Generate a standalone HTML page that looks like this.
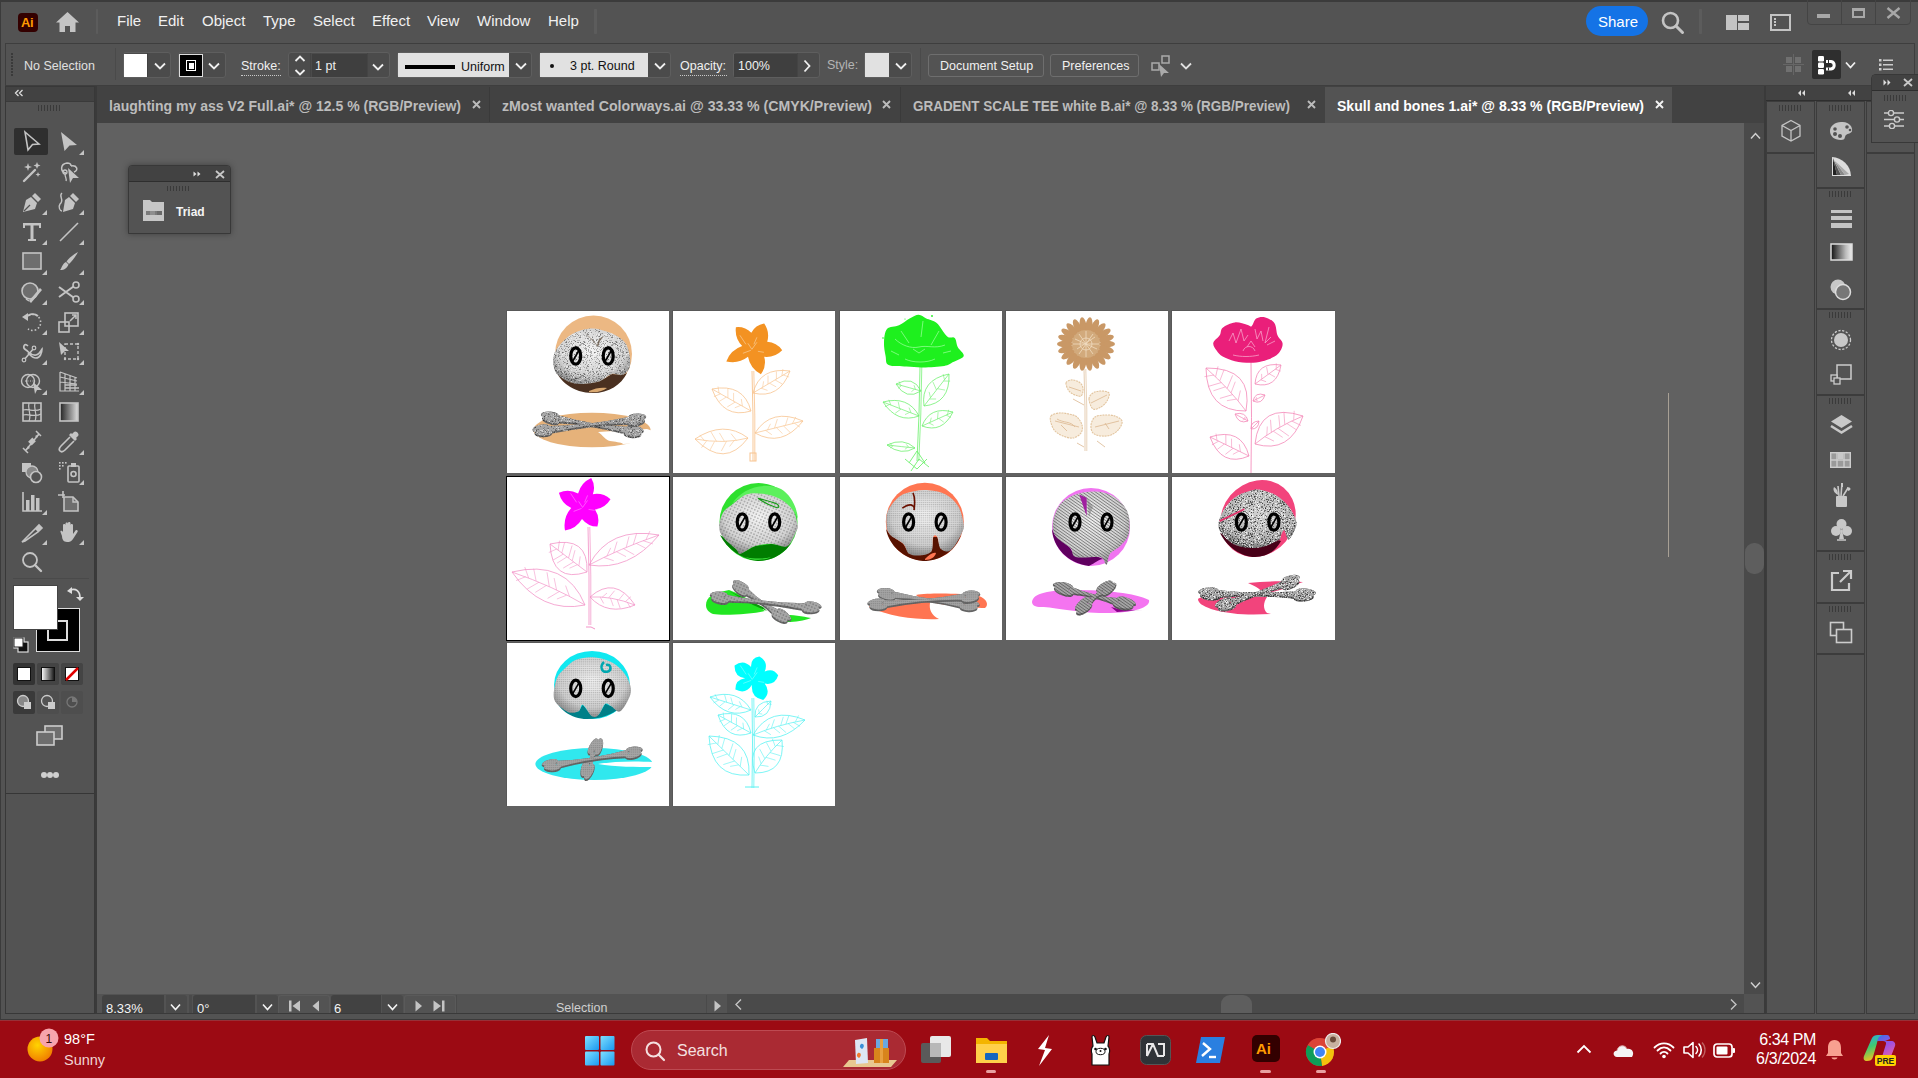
<!DOCTYPE html>
<html><head><meta charset="utf-8">
<style>
*{margin:0;padding:0;box-sizing:border-box}
html,body{width:1918px;height:1078px;overflow:hidden;background:#535353;font-family:"Liberation Sans",sans-serif;color:#e6e6e6;position:relative}
.a{position:absolute}
.t{position:absolute;white-space:nowrap;line-height:1}
.menu{position:absolute;top:12px;font-size:15px;color:#f0f0f0}
.ab{position:absolute;width:162px;height:162px;background:#fff;overflow:hidden}
</style></head><body>
<div class="a" style="left:0px;top:0px;width:1918px;height:2px;background:#3b3b3b;"></div>
<div class="a" style="left:0px;top:0px;width:1px;height:1078px;background:#3b3b3b;"></div>
<div class="a" style="left:18px;top:13px;width:20px;height:19px;background:#330000;border-radius:4px"></div>
<div class="t" style="left:21px;top:16px;font-size:13px;color:#ff9a00;font-weight:bold;letter-spacing:-0.5px">Ai</div>
<svg class="a" style="left:55px;top:11px" width="25" height="22" viewBox="0 0 25 22"><path d="M12.5 1 L24 11.5 L20.5 11.5 L20.5 21 L15 21 L15 15 L10 15 L10 21 L4.5 21 L4.5 11.5 L1 11.5 Z" fill="#c4c4c4"/></svg>
<div class="a" style="left:95.5px;top:9px;width:2.5px;height:25px;background:#5c5c5c;border-radius:1px"></div>
<div class="a" style="left:594px;top:9px;width:2.5px;height:25px;background:#5c5c5c;border-radius:1px"></div>
<div class="menu" style="left:117px">File</div>
<div class="menu" style="left:158px">Edit</div>
<div class="menu" style="left:202px">Object</div>
<div class="menu" style="left:263px">Type</div>
<div class="menu" style="left:313px">Select</div>
<div class="menu" style="left:372px">Effect</div>
<div class="menu" style="left:427px">View</div>
<div class="menu" style="left:477px">Window</div>
<div class="menu" style="left:548px">Help</div>
<div class="a" style="left:1586px;top:6px;width:62px;height:30px;background:#1473e6;border-radius:15px"></div>
<div class="t" style="left:1598px;top:14px;font-size:15px;color:#fff;">Share</div>
<svg class="a" style="left:1660px;top:10px" width="26" height="26" viewBox="0 0 26 26"><circle cx="10.5" cy="10.5" r="7.5" fill="none" stroke="#c4c4c4" stroke-width="2.6"/><path d="M16 16 L22.5 22.5" stroke="#c4c4c4" stroke-width="3" stroke-linecap="round"/></svg>
<div class="a" style="left:1699px;top:9px;width:2.5px;height:25px;background:#5c5c5c;border-radius:1px"></div>
<div class="a" style="left:1726px;top:15px;width:11px;height:15px;background:#c4c4c4;"></div>
<div class="a" style="left:1738px;top:15px;width:11px;height:6px;background:#c4c4c4;"></div>
<div class="a" style="left:1738px;top:23px;width:11px;height:7px;background:#c4c4c4;"></div>
<div class="a" style="left:1770px;top:14px;width:21px;height:17px;background:transparent;border:2px solid #c4c4c4"></div>
<div class="a" style="left:1774px;top:18px;width:2px;height:2px;background:#c4c4c4;"></div>
<div class="a" style="left:1774px;top:21px;width:2px;height:2px;background:#c4c4c4;"></div>
<div class="a" style="left:1774px;top:24px;width:2px;height:2px;background:#c4c4c4;"></div>
<div class="a" style="left:1807px;top:-2px;width:104px;height:27px;background:transparent;border:1px solid #444;border-radius:0 0 4px 4px"></div>
<div class="a" style="left:1841px;top:0px;width:1px;height:24px;background:#444;"></div>
<div class="a" style="left:1875px;top:0px;width:1px;height:24px;background:#444;"></div>
<div class="a" style="left:1817px;top:14px;width:13px;height:4px;background:#a8a8a8;"></div>
<div class="a" style="left:1852px;top:8px;width:13px;height:10px;background:transparent;border:2px solid #a8a8a8;border-top-width:3px"></div>
<svg class="a" style="left:1886px;top:7px" width="15" height="12" viewBox="0 0 15 12"><path d="M1.5 1 L13.5 11 M13.5 1 L1.5 11" stroke="#a8a8a8" stroke-width="2.4"/></svg>
<div class="a" style="left:5px;top:43px;width:1910px;height:1px;background:#3e3e3e;"></div>
<div class="a" style="left:5px;top:43px;width:1px;height:43px;background:#3e3e3e;"></div>
<div class="a" style="left:1914px;top:43px;width:1px;height:43px;background:#3e3e3e;"></div>
<div class="a" style="left:11px;top:53px;width:2px;height:2px;background:#3a3a3a;"></div>
<div class="a" style="left:11px;top:56px;width:2px;height:2px;background:#3a3a3a;"></div>
<div class="a" style="left:11px;top:59px;width:2px;height:2px;background:#3a3a3a;"></div>
<div class="a" style="left:11px;top:62px;width:2px;height:2px;background:#3a3a3a;"></div>
<div class="a" style="left:11px;top:65px;width:2px;height:2px;background:#3a3a3a;"></div>
<div class="a" style="left:11px;top:68px;width:2px;height:2px;background:#3a3a3a;"></div>
<div class="a" style="left:11px;top:71px;width:2px;height:2px;background:#3a3a3a;"></div>
<div class="a" style="left:11px;top:74px;width:2px;height:2px;background:#3a3a3a;"></div>
<div class="t" style="left:24px;top:60px;font-size:12.5px;color:#e0e0e0;">No Selection</div>
<div class="a" style="left:115px;top:48px;width:1px;height:32px;background:#4a4a4a;"></div>
<div class="a" style="left:123px;top:52px;width:48px;height:26px;background:#4b4b4b;border:1px solid #5e5e5e;border-radius:3px;"></div>
<div class="a" style="left:124px;top:54px;width:23px;height:23px;background:#ffffff;"></div>
<div class="a" style="left:147px;top:53px;width:1px;height:24px;background:#404040;"></div>
<svg class="a" style="left:154px;top:62px" width="12" height="8" viewBox="-1 -1.5 12 8"><path d="M0 0 L5.0 5 L10 0" fill="none" stroke="#f0f0f0" stroke-width="1.8"/></svg>
<div class="a" style="left:178px;top:52px;width:48px;height:26px;background:#4b4b4b;border:1px solid #5e5e5e;border-radius:3px;"></div>
<div class="a" style="left:179px;top:54px;width:24px;height:23px;background:#000;border:1px solid #ddd"></div>
<div class="a" style="left:186px;top:60px;width:10px;height:11px;background:transparent;border:1.5px solid #fff"></div>
<div class="a" style="left:188.5px;top:62.5px;width:5px;height:6px;background:#fff;"></div>
<svg class="a" style="left:208px;top:62px" width="12" height="8" viewBox="-1 -1.5 12 8"><path d="M0 0 L5.0 5 L10 0" fill="none" stroke="#f0f0f0" stroke-width="1.8"/></svg>
<div class="t" style="left:241px;top:60px;font-size:12.5px;color:#f0f0f0;">Stroke:</div>
<div class="a" style="left:241px;top:75px;width:40px;height:1px;background:transparent;border-top:1px dotted #c8c8c8"></div>
<div class="a" style="left:288px;top:52px;width:102px;height:26px;background:#4b4b4b;border:1px solid #5e5e5e;border-radius:3px;"></div>
<div class="a" style="left:310px;top:53px;width:1px;height:24px;background:#444;"></div>
<div class="a" style="left:312px;top:54px;width:55px;height:23px;background:#3f3f3f;"></div>
<div class="a" style="left:367px;top:53px;width:1px;height:24px;background:#444;"></div>
<svg class="a" style="left:294px;top:55px" width="12" height="22" viewBox="0 0 12 22"><path d="M1.5 6 L6 1.5 L10.5 6 M1.5 15 L6 19.5 L10.5 15" fill="none" stroke="#f0f0f0" stroke-width="1.8"/></svg>
<div class="t" style="left:315px;top:60px;font-size:12.5px;color:#f0f0f0;">1 pt</div>
<svg class="a" style="left:372px;top:63px" width="12" height="8" viewBox="-1 -1.5 12 8"><path d="M0 0 L5.0 5 L10 0" fill="none" stroke="#f0f0f0" stroke-width="1.8"/></svg>
<div class="a" style="left:397px;top:52px;width:135px;height:26px;background:#4b4b4b;border:1px solid #5e5e5e;border-radius:3px;"></div>
<div class="a" style="left:398px;top:53px;width:111px;height:24px;background:#e1e1e1;"></div>
<div class="a" style="left:405px;top:65px;width:50px;height:4px;background:#000;"></div>
<div class="t" style="left:461px;top:61px;font-size:12.5px;color:#111;">Uniform</div>
<svg class="a" style="left:515px;top:62px" width="12" height="8" viewBox="-1 -1.5 12 8"><path d="M0 0 L5.0 5 L10 0" fill="none" stroke="#f0f0f0" stroke-width="1.8"/></svg>
<div class="a" style="left:539px;top:52px;width:132px;height:26px;background:#4b4b4b;border:1px solid #5e5e5e;border-radius:3px;"></div>
<div class="a" style="left:540px;top:53px;width:108px;height:24px;background:#e1e1e1;"></div>
<div class="a" style="left:550px;top:64px;width:4px;height:4px;background:#111;border-radius:50%"></div>
<div class="t" style="left:570px;top:60px;font-size:12.5px;color:#111;">3 pt. Round</div>
<svg class="a" style="left:654px;top:62px" width="12" height="8" viewBox="-1 -1.5 12 8"><path d="M0 0 L5.0 5 L10 0" fill="none" stroke="#f0f0f0" stroke-width="1.8"/></svg>
<div class="t" style="left:680px;top:60px;font-size:12.5px;color:#f0f0f0;">Opacity:</div>
<div class="a" style="left:680px;top:75px;width:47px;height:1px;background:transparent;border-top:1px dotted #c8c8c8"></div>
<div class="a" style="left:733px;top:52px;width:87px;height:26px;background:#4b4b4b;border:1px solid #5e5e5e;border-radius:3px;"></div>
<div class="a" style="left:734px;top:54px;width:63px;height:23px;background:#3f3f3f;"></div>
<div class="a" style="left:797px;top:53px;width:1px;height:24px;background:#444;"></div>
<div class="t" style="left:738px;top:60px;font-size:12.5px;color:#f0f0f0;">100%</div>
<svg class="a" style="left:803px;top:59px" width="8" height="14" viewBox="0 0 8 14"><path d="M1.5 1.5 L6.5 7 L1.5 12.5" fill="none" stroke="#f0f0f0" stroke-width="1.8"/></svg>
<div class="t" style="left:827px;top:59px;font-size:12.5px;color:#b4b4b4;">Style:</div>
<div class="a" style="left:864px;top:52px;width:48px;height:26px;background:#4b4b4b;border:1px solid #5e5e5e;border-radius:3px;"></div>
<div class="a" style="left:865px;top:53px;width:24px;height:24px;background:#e1e1e1;"></div>
<svg class="a" style="left:895px;top:62px" width="12" height="8" viewBox="-1 -1.5 12 8"><path d="M0 0 L5.0 5 L10 0" fill="none" stroke="#f0f0f0" stroke-width="1.8"/></svg>
<div class="a" style="left:920px;top:48px;width:1px;height:32px;background:#4a4a4a;"></div>
<div class="a" style="left:928px;top:54px;width:116px;height:23px;background:transparent;border:1px solid #6e6e6e;border-radius:3px"></div>
<div class="t" style="left:940px;top:60px;font-size:12.5px;color:#f0f0f0;">Document Setup</div>
<div class="a" style="left:1050px;top:54px;width:89px;height:23px;background:transparent;border:1px solid #6e6e6e;border-radius:3px"></div>
<div class="t" style="left:1062px;top:60px;font-size:12.5px;color:#f0f0f0;">Preferences</div>
<svg class="a" style="left:1150px;top:54px" width="26" height="24" viewBox="0 0 26 24"><rect x="2" y="9" width="7" height="7" fill="none" stroke="#aaa" stroke-width="1.5"/><rect x="12" y="2" width="7" height="7" fill="none" stroke="#aaa" stroke-width="1.5"/><path d="M9 10 L19 19 L14 19 L11 23 Z" fill="#aaa"/></svg>
<svg class="a" style="left:1180px;top:62px" width="12" height="8" viewBox="-1 -1.5 12 8"><path d="M0 0 L5.0 5 L10 0" fill="none" stroke="#e0e0e0" stroke-width="1.8"/></svg>
<svg class="a" style="left:1783px;top:54px" width="22" height="22" viewBox="0 0 22 22"><rect x="3" y="3" width="6" height="6" fill="#707070"/><rect x="12" y="3" width="6" height="6" fill="#707070"/><rect x="3" y="12" width="6" height="6" fill="#707070"/><rect x="12" y="12" width="6" height="6" fill="#707070"/><path d="M0 10.5 H21 M10.5 0 V21" stroke="#666" stroke-width="1"/></svg>
<div class="a" style="left:1812px;top:50px;width:29px;height:29px;background:#2e2e2e;border-radius:2px"></div>
<svg class="a" style="left:1812px;top:50px" width="29" height="29" viewBox="0 0 29 29"><rect x="6" y="6" width="6" height="5.5" rx="1.2" fill="#fff"/><rect x="6" y="12.5" width="6" height="5.5" rx="1.2" fill="#fff"/><rect x="6" y="19" width="6" height="5.5" rx="1.2" fill="#fff"/><path d="M14 11.5 H19 A3.8 3.8 0 0 1 19 19 H14" fill="none" stroke="#fff" stroke-width="3"/><path d="M16.5 10 V13 M16.5 17.5 V20.5" stroke="#2e2e2e" stroke-width="1"/></svg>
<svg class="a" style="left:1845px;top:61px" width="11" height="8" viewBox="-1 -1.5 11 8"><path d="M0 0 L4.5 5 L9 0" fill="none" stroke="#f0f0f0" stroke-width="1.8"/></svg>
<svg class="a" style="left:1878px;top:58px" width="16" height="14" viewBox="0 0 16 14"><rect x="1" y="1" width="2.5" height="2.5" fill="#ccc"/><rect x="1" y="5.5" width="2.5" height="2.5" fill="#ccc"/><rect x="1" y="10" width="2.5" height="2.5" fill="#ccc"/><path d="M5 2.2 H15 M5 6.7 H15 M5 11.2 H15" stroke="#ccc" stroke-width="1.5"/></svg>
<div class="a" style="left:5px;top:85px;width:1910px;height:1px;background:#3e3e3e;"></div>
<div class="a" style="left:97px;top:86px;width:1667px;height:37px;background:#424242;"></div>
<div class="a" style="left:1325px;top:87px;width:347px;height:36px;background:#535353;"></div>
<div class="t" style="left:109px;top:99px;font-size:14px;font-weight:bold;color:#bcbcbc;transform-origin:0 0;transform:scaleX(1.0020)">laughting my ass V2 Full.ai* @ 12.5 % (RGB/Preview)</div>
<svg class="a" style="left:472px;top:100px" width="9" height="9" viewBox="0 0 9 9"><path d="M1 1 L8 8 M8 1 L1 8" stroke="#bcbcbc" stroke-width="1.9"/></svg>
<div class="a" style="left:489px;top:87px;width:1px;height:35px;background:#3a3a3a;"></div>
<div class="t" style="left:502px;top:99px;font-size:14px;font-weight:bold;color:#bcbcbc;transform-origin:0 0;transform:scaleX(1.0107)">zMost wanted Colorways.ai @ 33.33 % (CMYK/Preview)</div>
<svg class="a" style="left:882px;top:100px" width="9" height="9" viewBox="0 0 9 9"><path d="M1 1 L8 8 M8 1 L1 8" stroke="#bcbcbc" stroke-width="1.9"/></svg>
<div class="a" style="left:900px;top:87px;width:1px;height:35px;background:#3a3a3a;"></div>
<div class="t" style="left:913px;top:99px;font-size:14px;font-weight:bold;color:#bcbcbc;transform-origin:0 0;transform:scaleX(0.9605)">GRADENT SCALE TEE white B.ai* @ 8.33 % (RGB/Preview)</div>
<svg class="a" style="left:1307px;top:100px" width="9" height="9" viewBox="0 0 9 9"><path d="M1 1 L8 8 M8 1 L1 8" stroke="#bcbcbc" stroke-width="1.9"/></svg>
<div class="t" style="left:1337px;top:99px;font-size:14px;font-weight:bold;color:#ffffff;transform-origin:0 0;transform:scaleX(1.0026)">Skull and bones 1.ai* @ 8.33 % (RGB/Preview)</div>
<svg class="a" style="left:1655px;top:100px" width="9" height="9" viewBox="0 0 9 9"><path d="M1 1 L8 8 M8 1 L1 8" stroke="#f4f4f4" stroke-width="1.9"/></svg>
<div class="a" style="left:5px;top:86px;width:90px;height:928px;background:#535353;border:1px solid #383838"></div>
<div class="a" style="left:6px;top:87px;width:88px;height:14px;background:#424242;"></div>
<svg class="a" style="left:14px;top:88px" width="10" height="10" viewBox="0 0 10 10"><path d="M4.5 2 L1.5 5 L4.5 8 M8.5 2 L5.5 5 L8.5 8" fill="none" stroke="#ddd" stroke-width="1.3"/></svg>
<div class="a" style="left:6px;top:101px;width:88px;height:1px;background:#3a3a3a;"></div>
<div class="a" style="left:38px;top:105px;width:1.2px;height:6px;background:#3a3a3a;"></div>
<div class="a" style="left:41px;top:105px;width:1.2px;height:6px;background:#3a3a3a;"></div>
<div class="a" style="left:44px;top:105px;width:1.2px;height:6px;background:#3a3a3a;"></div>
<div class="a" style="left:47px;top:105px;width:1.2px;height:6px;background:#3a3a3a;"></div>
<div class="a" style="left:50px;top:105px;width:1.2px;height:6px;background:#3a3a3a;"></div>
<div class="a" style="left:53px;top:105px;width:1.2px;height:6px;background:#3a3a3a;"></div>
<div class="a" style="left:56px;top:105px;width:1.2px;height:6px;background:#3a3a3a;"></div>
<div class="a" style="left:59px;top:105px;width:1.2px;height:6px;background:#3a3a3a;"></div>
<div class="a" style="left:95px;top:86px;width:2px;height:928px;background:#3a3a3a;"></div>
<div class="a" style="left:14px;top:128px;width:34px;height:27px;background:#2f2f2f;border-radius:2px"></div>
<svg class="a" style="left:20px;top:130px" width="24" height="24" viewBox="0 0 24 24"><path d="M5 2 L19 14 L12.5 14.5 L8 20 Z" fill="none" stroke="#c4c4c4" stroke-width="1.6"/></svg>
<svg class="a" style="left:57px;top:130px" width="24" height="24" viewBox="0 0 24 24"><path d="M4 2 L20 15 L12.5 15.5 L7.5 21 Z" fill="#c4c4c4"/></svg>
<svg class="a" style="left:79px;top:150px" width="5" height="5" viewBox="0 0 5 5"><path d="M5 0 L5 5 L0 5 Z" fill="#c4c4c4"/></svg>
<svg class="a" style="left:20px;top:160px" width="24" height="24" viewBox="0 0 24 24"><path d="M4 21 L15 10" stroke="#c4c4c4" stroke-width="2.4" stroke-linecap="round"/><path d="M8 3 L9 6 L12 7 L9 8 L8 11 L7 8 L4 7 L7 6 Z M17 2 L18 4.5 L20.5 5.5 L18 6.5 L17 9 L16 6.5 L13.5 5.5 L16 4.5 Z M18 12 L18.7 13.8 L20.5 14.5 L18.7 15.2 L18 17 L17.3 15.2 L15.5 14.5 L17.3 13.8 Z" fill="#c4c4c4"/></svg>
<svg class="a" style="left:57px;top:160px" width="24" height="24" viewBox="0 0 24 24"><path d="M14 6 C 20 5, 22 10, 17 12 M9 13 C 3 12, 3 4, 10 3 C 12 3, 14 4, 14 6" fill="none" stroke="#c4c4c4" stroke-width="1.5"/><circle cx="8" cy="12" r="2" fill="none" stroke="#c4c4c4" stroke-width="1.3"/><path d="M8 14 C 8 17, 10 19, 9 21" fill="none" stroke="#c4c4c4" stroke-width="1.3"/><path d="M11 8 L22 18 L16 18 L13 23 Z" fill="#c4c4c4"/></svg>
<svg class="a" style="left:20px;top:190px" width="24" height="24" viewBox="0 0 24 24"><path d="M15 3 L21 9 L18 12 L12 6 Z" fill="#c4c4c4"/><path d="M11 7 L17 13 L15 19 L3 22 L6 10 Z" fill="#c4c4c4"/><path d="M4 21 L10 15" stroke="#535353" stroke-width="1.3"/></svg>
<svg class="a" style="left:42px;top:210px" width="5" height="5" viewBox="0 0 5 5"><path d="M5 0 L5 5 L0 5 Z" fill="#c4c4c4"/></svg>
<svg class="a" style="left:57px;top:190px" width="24" height="24" viewBox="0 0 24 24"><path d="M16 3 L22 9 L19 12 L13 6 Z" fill="#c4c4c4"/><path d="M12 7 L18 13 L16 19 L6 22 L8 10 Z" fill="#c4c4c4"/><path d="M5 3 C 1 6, 8 10, 3 14 C 1 17, 3 21, 5 21" fill="none" stroke="#c4c4c4" stroke-width="1.4"/></svg>
<svg class="a" style="left:79px;top:210px" width="5" height="5" viewBox="0 0 5 5"><path d="M5 0 L5 5 L0 5 Z" fill="#c4c4c4"/></svg>
<svg class="a" style="left:20px;top:220px" width="24" height="24" viewBox="0 0 24 24"><path d="M3 3 H21 V8 H19 V5.5 H13.5 V19 H16 V21 H8 V19 H10.5 V5.5 H5 V8 H3 Z" fill="#c4c4c4"/></svg>
<svg class="a" style="left:42px;top:240px" width="5" height="5" viewBox="0 0 5 5"><path d="M5 0 L5 5 L0 5 Z" fill="#c4c4c4"/></svg>
<svg class="a" style="left:57px;top:220px" width="24" height="24" viewBox="0 0 24 24"><path d="M3 21 L21 3" stroke="#c4c4c4" stroke-width="1.6"/></svg>
<svg class="a" style="left:79px;top:240px" width="5" height="5" viewBox="0 0 5 5"><path d="M5 0 L5 5 L0 5 Z" fill="#c4c4c4"/></svg>
<svg class="a" style="left:20px;top:250px" width="24" height="24" viewBox="0 0 24 24"><rect x="3" y="3" width="18" height="16" fill="#6e6e6e" stroke="#c4c4c4" stroke-width="1.6"/></svg>
<svg class="a" style="left:42px;top:270px" width="5" height="5" viewBox="0 0 5 5"><path d="M5 0 L5 5 L0 5 Z" fill="#c4c4c4"/></svg>
<svg class="a" style="left:57px;top:250px" width="24" height="24" viewBox="0 0 24 24"><path d="M21 2 C 19 6, 15 11, 12 14 L9.5 11.5 C 12 8, 17 4, 21 2 Z" fill="#c4c4c4"/><path d="M9 12 L11.5 14.5 C 10 18, 8 20, 3 20 C 5 18, 5 14, 9 12 Z" fill="#c4c4c4"/></svg>
<svg class="a" style="left:79px;top:270px" width="5" height="5" viewBox="0 0 5 5"><path d="M5 0 L5 5 L0 5 Z" fill="#c4c4c4"/></svg>
<svg class="a" style="left:20px;top:280px" width="24" height="24" viewBox="0 0 24 24"><circle cx="10" cy="11" r="8" fill="#6e6e6e" stroke="#c4c4c4" stroke-width="1.6"/><path d="M9 21 L20 8 L22 10 L11 23 Z" fill="#c4c4c4"/><path d="M6 19 L9 21" stroke="#c4c4c4" stroke-width="1.5"/></svg>
<svg class="a" style="left:42px;top:300px" width="5" height="5" viewBox="0 0 5 5"><path d="M5 0 L5 5 L0 5 Z" fill="#c4c4c4"/></svg>
<svg class="a" style="left:57px;top:280px" width="24" height="24" viewBox="0 0 24 24"><circle cx="19" cy="5" r="3" fill="none" stroke="#c4c4c4" stroke-width="1.6"/><circle cx="19" cy="19" r="3" fill="none" stroke="#c4c4c4" stroke-width="1.6"/><path d="M16.5 6.5 L2 17 M16.5 17.5 L2 7" stroke="#c4c4c4" stroke-width="2"/></svg>
<svg class="a" style="left:79px;top:300px" width="5" height="5" viewBox="0 0 5 5"><path d="M5 0 L5 5 L0 5 Z" fill="#c4c4c4"/></svg>
<svg class="a" style="left:20px;top:310px" width="24" height="24" viewBox="0 0 24 24"><path d="M6 8 A 8 8 0 1 1 8 19" fill="none" stroke="#c4c4c4" stroke-width="1.6" stroke-dasharray="1.6 2"/><path d="M6 8 A 8 8 0 0 1 18 6" fill="none" stroke="#c4c4c4" stroke-width="1.8"/><path d="M2 7 L8 3 L8 11 Z" fill="#c4c4c4"/></svg>
<svg class="a" style="left:42px;top:330px" width="5" height="5" viewBox="0 0 5 5"><path d="M5 0 L5 5 L0 5 Z" fill="#c4c4c4"/></svg>
<svg class="a" style="left:57px;top:310px" width="24" height="24" viewBox="0 0 24 24"><rect x="2" y="12" width="10" height="10" fill="none" stroke="#c4c4c4" stroke-width="1.6"/><rect x="8" y="3" width="13" height="13" fill="none" stroke="#c4c4c4" stroke-width="1.6"/><path d="M13 11 L19 5 M15 5 H19 V9" fill="none" stroke="#c4c4c4" stroke-width="1.5"/></svg>
<svg class="a" style="left:79px;top:330px" width="5" height="5" viewBox="0 0 5 5"><path d="M5 0 L5 5 L0 5 Z" fill="#c4c4c4"/></svg>
<svg class="a" style="left:20px;top:340px" width="24" height="24" viewBox="0 0 24 24"><path d="M4 20 L14 8 M8 6 C 4 2, 2 8, 6 10 C 10 13, 12 16, 16 15 C 20 14, 21 10, 22 9 C 22 13, 20 18, 16 18 C 12 18, 10 15, 8 13" fill="none" stroke="#c4c4c4" stroke-width="1.6"/><circle cx="4" cy="20" r="1.8" fill="#535353" stroke="#c4c4c4" stroke-width="1.2"/><circle cx="14" cy="8" r="1.8" fill="#535353" stroke="#c4c4c4" stroke-width="1.2"/></svg>
<svg class="a" style="left:42px;top:360px" width="5" height="5" viewBox="0 0 5 5"><path d="M5 0 L5 5 L0 5 Z" fill="#c4c4c4"/></svg>
<svg class="a" style="left:57px;top:340px" width="24" height="24" viewBox="0 0 24 24"><path d="M2 2 L12 11 L8 11 L4 15 Z" fill="#c4c4c4"/><rect x="8" y="4" width="13" height="15" fill="none" stroke="#c4c4c4" stroke-width="1.4" stroke-dasharray="3 2"/><circle cx="8" cy="19" r="1.2" fill="#c4c4c4"/><circle cx="21" cy="19" r="1.2" fill="#c4c4c4"/><circle cx="21" cy="4" r="1.2" fill="#c4c4c4"/></svg>
<svg class="a" style="left:79px;top:360px" width="5" height="5" viewBox="0 0 5 5"><path d="M5 0 L5 5 L0 5 Z" fill="#c4c4c4"/></svg>
<svg class="a" style="left:20px;top:370px" width="24" height="24" viewBox="0 0 24 24"><circle cx="8" cy="11" r="6.5" fill="none" stroke="#c4c4c4" stroke-width="1.4"/><circle cx="13" cy="11" r="6.5" fill="none" stroke="#c4c4c4" stroke-width="1.4"/><path d="M5 11 H15" stroke="#c4c4c4" stroke-width="1.2" stroke-dasharray="1 1.5"/><path d="M13 12 L22 20 L17 20 L15 24 Z" fill="#c4c4c4"/></svg>
<svg class="a" style="left:42px;top:390px" width="5" height="5" viewBox="0 0 5 5"><path d="M5 0 L5 5 L0 5 Z" fill="#c4c4c4"/></svg>
<svg class="a" style="left:57px;top:370px" width="24" height="24" viewBox="0 0 24 24"><path d="M3 2 V21 H22 M3 2 L20 8 M3 7 L20 11 M3 12 L20 14 M8 4 V21 M13 6 V21 M18 7 V21" fill="none" stroke="#c4c4c4" stroke-width="1.2"/><path d="M8 15 H20 M8 18 H22" stroke="#c4c4c4" stroke-width="1.4"/></svg>
<svg class="a" style="left:79px;top:390px" width="5" height="5" viewBox="0 0 5 5"><path d="M5 0 L5 5 L0 5 Z" fill="#c4c4c4"/></svg>
<svg class="a" style="left:20px;top:400px" width="24" height="24" viewBox="0 0 24 24"><rect x="3" y="3" width="18" height="18" fill="none" stroke="#c4c4c4" stroke-width="1.6"/><path d="M3 10 C 9 8, 14 13, 21 9 M3 15 C 9 13, 14 18, 21 14 M9 3 C 7 9, 12 14, 9 21 M15 3 C 13 9, 18 14, 15 21" fill="none" stroke="#c4c4c4" stroke-width="1.2"/></svg>
<svg class="a" style="left:57px;top:400px" width="24" height="24" viewBox="0 0 24 24"><defs><linearGradient id="gr1"><stop offset="0" stop-color="#222"/><stop offset="1" stop-color="#ddd"/></linearGradient></defs><rect x="3" y="3" width="18" height="18" fill="url(#gr1)" stroke="#c4c4c4" stroke-width="1.6"/></svg>
<svg class="a" style="left:20px;top:430px" width="24" height="24" viewBox="0 0 24 24"><path d="M3 18 L8 23 M16 1 L21 6 M6 20 L19 4" stroke="#c4c4c4" stroke-width="1.5"/><path d="M6 20 L10 18 L8 16 Z M19 4 L15 6 L17 8 Z" fill="#c4c4c4"/><rect x="9" y="9" width="6" height="5" transform="rotate(-45 12 11.5)" fill="#c4c4c4"/></svg>
<svg class="a" style="left:57px;top:430px" width="24" height="24" viewBox="0 0 24 24"><path d="M17 2 C 19 0, 23 4, 21 6 L19 8 L20 9 L18 11 L12 5 L14 3 L15 4 Z" fill="#c4c4c4"/><path d="M13 7 L4 16 C 2 18, 2 20, 3 21 C 4 22, 6 22, 8 20 L17 11" fill="none" stroke="#c4c4c4" stroke-width="1.6"/></svg>
<svg class="a" style="left:79px;top:450px" width="5" height="5" viewBox="0 0 5 5"><path d="M5 0 L5 5 L0 5 Z" fill="#c4c4c4"/></svg>
<svg class="a" style="left:20px;top:460px" width="24" height="24" viewBox="0 0 24 24"><rect x="2" y="3" width="9" height="9" fill="#c4c4c4"/><circle cx="12" cy="12" r="6" fill="#888" stroke="#c4c4c4" stroke-width="1.3"/><circle cx="16" cy="17" r="5.5" fill="#535353" stroke="#c4c4c4" stroke-width="1.6"/></svg>
<svg class="a" style="left:57px;top:460px" width="24" height="24" viewBox="0 0 24 24"><rect x="11" y="6" width="11" height="16" rx="1" fill="none" stroke="#c4c4c4" stroke-width="1.6"/><rect x="14" y="3" width="5" height="4" fill="#c4c4c4"/><circle cx="16.5" cy="14" r="2.5" fill="none" stroke="#c4c4c4" stroke-width="1.6"/><g fill="#c4c4c4"><rect x="2" y="2" width="1.6" height="1.6"/><rect x="5" y="2" width="1.6" height="1.6"/><rect x="8" y="2" width="1.6" height="1.6"/><rect x="2" y="5" width="1.6" height="1.6"/><rect x="5" y="5" width="1.6" height="1.6"/><rect x="2" y="8" width="1.6" height="1.6"/></g></svg>
<svg class="a" style="left:79px;top:480px" width="5" height="5" viewBox="0 0 5 5"><path d="M5 0 L5 5 L0 5 Z" fill="#c4c4c4"/></svg>
<svg class="a" style="left:20px;top:490px" width="24" height="24" viewBox="0 0 24 24"><path d="M3 2 V21 H22" fill="none" stroke="#c4c4c4" stroke-width="1.6"/><rect x="6" y="10" width="3.5" height="11" fill="#c4c4c4"/><rect x="11" y="5" width="3.5" height="16" fill="#c4c4c4"/><rect x="16" y="8" width="3.5" height="13" fill="#c4c4c4"/></svg>
<svg class="a" style="left:42px;top:510px" width="5" height="5" viewBox="0 0 5 5"><path d="M5 0 L5 5 L0 5 Z" fill="#c4c4c4"/></svg>
<svg class="a" style="left:57px;top:490px" width="24" height="24" viewBox="0 0 24 24"><path d="M1 5 H8 M6 1 V8" stroke="#c4c4c4" stroke-width="1.6"/><path d="M7 7 H16 L21 12 V21 H7 Z" fill="#6e6e6e" stroke="#c4c4c4" stroke-width="1.6"/><path d="M16 7 V12 H21" fill="none" stroke="#c4c4c4" stroke-width="1.4"/></svg>
<svg class="a" style="left:20px;top:520px" width="24" height="24" viewBox="0 0 24 24"><path d="M2 22 L15 9 L19 5 L22 8 L18 12 L5 21 Z" fill="none" stroke="#c4c4c4" stroke-width="1.6"/><path d="M15 9 L19 5 L22 8 L18 12 Z" fill="#c4c4c4"/></svg>
<svg class="a" style="left:42px;top:540px" width="5" height="5" viewBox="0 0 5 5"><path d="M5 0 L5 5 L0 5 Z" fill="#c4c4c4"/></svg>
<svg class="a" style="left:57px;top:520px" width="24" height="24" viewBox="0 0 24 24"><path d="M6 12 V5 C 6 3.5, 8.5 3.5, 8.5 5 V10 V3.5 C 8.5 2, 11 2, 11 3.5 V10 V3 C 11 1.5, 13.5 1.5, 13.5 3 V10 V5 C 13.5 3.5, 16 3.5, 16 5 V14 L18.5 10.5 C 19.5 9.5, 21.5 10.5, 20.5 12 L16 19 C 14.5 21.5, 12.5 22, 10 22 C 6.5 22, 5 19, 5 16 L3.5 12 C 3 10.5, 5 10, 6 12 Z" fill="#c4c4c4"/></svg>
<svg class="a" style="left:79px;top:540px" width="5" height="5" viewBox="0 0 5 5"><path d="M5 0 L5 5 L0 5 Z" fill="#c4c4c4"/></svg>
<svg class="a" style="left:20px;top:550px" width="24" height="24" viewBox="0 0 24 24"><circle cx="10" cy="10" r="7" fill="none" stroke="#c4c4c4" stroke-width="1.8"/><path d="M15 15 L21 21" stroke="#c4c4c4" stroke-width="2.4" stroke-linecap="round"/></svg>
<div class="a" style="left:13px;top:578px;width:76px;height:1px;background:#4a4a4a;"></div>
<div class="a" style="left:36px;top:608px;width:44px;height:44px;background:#000;border:1px solid #ddd"></div>
<div class="a" style="left:47px;top:620px;width:21px;height:21px;background:transparent;border:2px solid #ddd"></div>
<div class="a" style="left:13px;top:585px;width:45px;height:45px;background:#ffffff;border:1px solid #444"></div>
<svg class="a" style="left:66px;top:585px" width="18" height="18" viewBox="0 0 18 18"><path d="M4 5 C 10 3, 14 6, 14 13" fill="none" stroke="#ddd" stroke-width="1.8"/><path d="M1 6 L6 2 L6 9 Z M10 12 L18 12 L14 16 Z" fill="#ddd"/></svg>
<svg class="a" style="left:12px;top:636px" width="18" height="18" viewBox="0 0 18 18"><rect x="2" y="2" width="10" height="10" fill="#fff" stroke="#ddd" stroke-width="1.2"/><rect x="6" y="6" width="10" height="10" fill="#111" stroke="#ddd" stroke-width="1.2"/><rect x="2" y="2" width="9" height="9" fill="#fff" stroke="#222" stroke-width="1"/></svg>
<div class="a" style="left:13px;top:663px;width:22px;height:22px;background:#333;border-radius:2px"></div>
<div class="a" style="left:37px;top:663px;width:22px;height:22px;background:#444;border-radius:2px"></div>
<div class="a" style="left:61px;top:663px;width:22px;height:22px;background:#444;border-radius:2px"></div>
<div class="a" style="left:17px;top:667px;width:14px;height:14px;background:#fff;border:1.5px solid #111"></div>
<svg class="a" style="left:41px;top:667px" width="14" height="14" viewBox="0 0 14 14"><defs><linearGradient id="gr2"><stop offset="0" stop-color="#fff"/><stop offset="1" stop-color="#111"/></linearGradient></defs><rect x="0.5" y="0.5" width="13" height="13" fill="url(#gr2)" stroke="#111"/></svg>
<svg class="a" style="left:65px;top:667px" width="14" height="14" viewBox="0 0 14 14"><rect x="0.5" y="0.5" width="13" height="13" fill="#fff" stroke="#111"/><path d="M1 13 L13 1" stroke="#e10000" stroke-width="2.5"/></svg>
<div class="a" style="left:13px;top:691px;width:22px;height:23px;background:#3a3a3a;border-radius:2px"></div>
<div class="a" style="left:37px;top:691px;width:22px;height:23px;background:#4e4e4e;border-radius:2px"></div>
<div class="a" style="left:61px;top:691px;width:22px;height:23px;background:#4e4e4e;border-radius:2px"></div>
<svg class="a" style="left:16px;top:694px" width="16" height="16" viewBox="0 0 16 16"><circle cx="7" cy="7" r="5.5" fill="#888" stroke="#ccc" stroke-width="1.3"/><rect x="8" y="8" width="7" height="7" fill="#ccc"/></svg>
<svg class="a" style="left:40px;top:694px" width="16" height="16" viewBox="0 0 16 16"><circle cx="7" cy="7" r="5.5" fill="#535353" stroke="#ccc" stroke-width="1.3"/><rect x="8" y="8" width="7" height="7" fill="#ccc"/></svg>
<svg class="a" style="left:64px;top:694px" width="16" height="16" viewBox="0 0 16 16"><circle cx="8" cy="8" r="5" fill="none" stroke="#777" stroke-width="1.3"/><path d="M8 8 L8 3 A5 5 0 0 1 13 8 Z" fill="#777"/></svg>
<svg class="a" style="left:35px;top:724px" width="30" height="24" viewBox="0 0 30 24"><rect x="10" y="2" width="17" height="13" fill="#6e6e6e" stroke="#ccc" stroke-width="1.6"/><rect x="2" y="8" width="17" height="13" fill="#6e6e6e" stroke="#ccc" stroke-width="1.6"/></svg>
<div class="a" style="left:41px;top:772px;width:6px;height:6px;background:#cfcfcf;border-radius:50%"></div>
<div class="a" style="left:47px;top:772px;width:6px;height:6px;background:#cfcfcf;border-radius:50%"></div>
<div class="a" style="left:53px;top:772px;width:6px;height:6px;background:#cfcfcf;border-radius:50%"></div>
<div class="a" style="left:6px;top:793px;width:88px;height:1px;background:#363636;"></div>
<div class="a" style="left:97px;top:123px;width:1647px;height:871px;background:#616161;"></div>
<div class="a" style="left:128px;top:165px;width:103px;height:69px;background:#535353;border:1px solid #383838;border-radius:4px 4px 0 0;box-shadow:0 0 6px rgba(0,0,0,0.35)"></div>
<div class="a" style="left:129px;top:166px;width:101px;height:15px;background:#424242;border-radius:3px 3px 0 0"></div>
<div class="a" style="left:129px;top:181px;width:101px;height:1px;background:#2e2e2e;"></div>
<svg class="a" style="left:193px;top:171px" width="9" height="6" viewBox="0 0 9 6"><path d="M0.5 0.5 L3.5 3 L0.5 5.5 Z M4.5 0.5 L7.5 3 L4.5 5.5 Z" fill="#ddd"/></svg>
<svg class="a" style="left:215px;top:170px" width="10" height="9" viewBox="0 0 10 9"><path d="M1 1 L9 8 M9 1 L1 8" stroke="#c8c8c8" stroke-width="1.8"/></svg>
<div class="a" style="left:167px;top:186px;width:1.2px;height:5px;background:#3a3a3a;"></div>
<div class="a" style="left:170px;top:186px;width:1.2px;height:5px;background:#3a3a3a;"></div>
<div class="a" style="left:173px;top:186px;width:1.2px;height:5px;background:#3a3a3a;"></div>
<div class="a" style="left:176px;top:186px;width:1.2px;height:5px;background:#3a3a3a;"></div>
<div class="a" style="left:179px;top:186px;width:1.2px;height:5px;background:#3a3a3a;"></div>
<div class="a" style="left:182px;top:186px;width:1.2px;height:5px;background:#3a3a3a;"></div>
<div class="a" style="left:185px;top:186px;width:1.2px;height:5px;background:#3a3a3a;"></div>
<div class="a" style="left:188px;top:186px;width:1.2px;height:5px;background:#3a3a3a;"></div>
<svg class="a" style="left:142px;top:199px" width="24" height="23" viewBox="0 0 24 23"><path d="M1 1 H8 L10 3 H22 V22 H1 Z" fill="#c6c6c6"/><rect x="4" y="12" width="16" height="4" fill="#7a7a7a"/><rect x="8" y="12" width="5" height="4" fill="#8e8e8e"/><rect x="15" y="12" width="5" height="4" fill="#6a6a6a"/></svg>
<div class="t" style="left:176px;top:206px;font-size:12px;color:#f4f4f4;font-weight:bold">Triad</div>
<div class="a" style="left:1668px;top:393px;width:1px;height:164px;background:#a8a095;"></div>
<div class="a" style="left:506px;top:310px;width:163px;height:163px;background:#585858;"></div>
<div class="a" style="left:507px;top:311px;width:162px;height:162px;background:#fff;"></div>
<div class="a" style="left:672px;top:310px;width:163px;height:163px;background:#585858;"></div>
<div class="a" style="left:673px;top:311px;width:162px;height:162px;background:#fff;"></div>
<div class="a" style="left:839px;top:310px;width:163px;height:163px;background:#585858;"></div>
<div class="a" style="left:840px;top:311px;width:162px;height:162px;background:#fff;"></div>
<div class="a" style="left:1005px;top:310px;width:163px;height:163px;background:#585858;"></div>
<div class="a" style="left:1006px;top:311px;width:162px;height:162px;background:#fff;"></div>
<div class="a" style="left:1171px;top:310px;width:164px;height:163px;background:#585858;"></div>
<div class="a" style="left:1172px;top:311px;width:163px;height:162px;background:#fff;"></div>
<div class="a" style="left:506px;top:476px;width:163px;height:164px;background:#585858;"></div>
<div class="a" style="left:507px;top:477px;width:162px;height:163px;background:#fff;"></div>
<div class="a" style="left:672px;top:476px;width:163px;height:164px;background:#585858;"></div>
<div class="a" style="left:673px;top:477px;width:162px;height:163px;background:#fff;"></div>
<div class="a" style="left:839px;top:476px;width:163px;height:164px;background:#585858;"></div>
<div class="a" style="left:840px;top:477px;width:162px;height:163px;background:#fff;"></div>
<div class="a" style="left:1005px;top:476px;width:163px;height:164px;background:#585858;"></div>
<div class="a" style="left:1006px;top:477px;width:162px;height:163px;background:#fff;"></div>
<div class="a" style="left:1171px;top:476px;width:164px;height:164px;background:#585858;"></div>
<div class="a" style="left:1172px;top:477px;width:163px;height:163px;background:#fff;"></div>
<div class="a" style="left:506px;top:642px;width:163px;height:164px;background:#585858;"></div>
<div class="a" style="left:507px;top:643px;width:162px;height:163px;background:#fff;"></div>
<div class="a" style="left:672px;top:642px;width:163px;height:164px;background:#585858;"></div>
<div class="a" style="left:673px;top:643px;width:162px;height:163px;background:#fff;"></div>
<div class="a" style="left:506px;top:476px;width:164px;height:165px;background:transparent;border:1.5px solid #000"></div>
<svg class="a" style="left:507px;top:311px" width="826" height="494" viewBox="0 0 826 494"><defs><pattern id="nz" width="32" height="32" patternUnits="userSpaceOnUse"><rect x="20" y="9" width="1" height="1" fill="#000" opacity="0.25"/><rect x="3" y="4" width="1" height="1" fill="#000" opacity="0.32"/><rect x="6" y="23" width="1" height="1" fill="#000" opacity="0.32"/><rect x="3" y="13" width="1" height="1" fill="#000" opacity="0.18"/><rect x="5" y="27" width="1" height="1" fill="#000" opacity="0.25"/><rect x="4" y="15" width="1" height="1" fill="#000" opacity="0.18"/><rect x="27" y="3" width="1" height="1" fill="#000" opacity="0.32"/><rect x="7" y="14" width="1" height="1" fill="#000" opacity="0.32"/><rect x="3" y="25" width="1" height="1" fill="#000" opacity="0.18"/><rect x="14" y="2" width="1" height="1" fill="#000" opacity="0.32"/><rect x="8" y="18" width="1" height="1" fill="#000" opacity="0.25"/><rect x="9" y="7" width="1" height="1" fill="#000" opacity="0.32"/><rect x="19" y="11" width="1" height="1" fill="#000" opacity="0.18"/><rect x="12" y="23" width="1" height="1" fill="#000" opacity="0.18"/><rect x="4" y="3" width="1" height="1" fill="#000" opacity="0.32"/><rect x="13" y="31" width="1" height="1" fill="#000" opacity="0.32"/><rect x="27" y="20" width="1" height="1" fill="#000" opacity="0.25"/><rect x="29" y="23" width="1" height="1" fill="#000" opacity="0.25"/><rect x="15" y="11" width="1" height="1" fill="#000" opacity="0.32"/><rect x="15" y="5" width="1" height="1" fill="#000" opacity="0.32"/><rect x="19" y="31" width="1" height="1" fill="#000" opacity="0.25"/><rect x="28" y="18" width="1" height="1" fill="#000" opacity="0.32"/><rect x="4" y="7" width="1" height="1" fill="#000" opacity="0.32"/><rect x="26" y="10" width="1" height="1" fill="#000" opacity="0.25"/><rect x="9" y="31" width="1" height="1" fill="#000" opacity="0.25"/><rect x="2" y="4" width="1" height="1" fill="#000" opacity="0.32"/><rect x="20" y="21" width="1" height="1" fill="#000" opacity="0.32"/><rect x="22" y="31" width="1" height="1" fill="#000" opacity="0.32"/><rect x="29" y="4" width="1" height="1" fill="#000" opacity="0.18"/><rect x="17" y="30" width="1" height="1" fill="#000" opacity="0.32"/><rect x="4" y="3" width="1" height="1" fill="#000" opacity="0.32"/><rect x="19" y="28" width="1" height="1" fill="#000" opacity="0.25"/><rect x="24" y="22" width="1" height="1" fill="#000" opacity="0.18"/><rect x="29" y="22" width="1" height="1" fill="#000" opacity="0.18"/><rect x="7" y="31" width="1" height="1" fill="#000" opacity="0.18"/><rect x="13" y="18" width="1" height="1" fill="#000" opacity="0.18"/><rect x="15" y="25" width="1" height="1" fill="#000" opacity="0.25"/><rect x="31" y="5" width="1" height="1" fill="#000" opacity="0.18"/><rect x="28" y="25" width="1" height="1" fill="#000" opacity="0.32"/><rect x="17" y="8" width="1" height="1" fill="#000" opacity="0.25"/><rect x="17" y="26" width="1" height="1" fill="#000" opacity="0.25"/><rect x="24" y="14" width="1" height="1" fill="#000" opacity="0.18"/><rect x="5" y="11" width="1" height="1" fill="#000" opacity="0.18"/><rect x="14" y="14" width="1" height="1" fill="#000" opacity="0.18"/><rect x="31" y="11" width="1" height="1" fill="#000" opacity="0.25"/><rect x="18" y="0" width="1" height="1" fill="#000" opacity="0.18"/><rect x="26" y="23" width="1" height="1" fill="#000" opacity="0.32"/><rect x="20" y="8" width="1" height="1" fill="#000" opacity="0.32"/><rect x="3" y="29" width="1" height="1" fill="#000" opacity="0.32"/><rect x="25" y="25" width="1" height="1" fill="#000" opacity="0.25"/><rect x="25" y="6" width="1" height="1" fill="#000" opacity="0.25"/><rect x="25" y="3" width="1" height="1" fill="#000" opacity="0.18"/><rect x="4" y="13" width="1" height="1" fill="#000" opacity="0.25"/><rect x="10" y="7" width="1" height="1" fill="#000" opacity="0.25"/><rect x="3" y="6" width="1" height="1" fill="#000" opacity="0.18"/><rect x="9" y="6" width="1" height="1" fill="#000" opacity="0.25"/><rect x="1" y="4" width="1" height="1" fill="#000" opacity="0.18"/><rect x="24" y="9" width="1" height="1" fill="#000" opacity="0.32"/><rect x="16" y="22" width="1" height="1" fill="#000" opacity="0.32"/><rect x="23" y="30" width="1" height="1" fill="#000" opacity="0.18"/><rect x="7" y="31" width="1" height="1" fill="#000" opacity="0.25"/><rect x="30" y="30" width="1" height="1" fill="#000" opacity="0.25"/><rect x="5" y="9" width="1" height="1" fill="#000" opacity="0.18"/><rect x="21" y="16" width="1" height="1" fill="#000" opacity="0.25"/><rect x="10" y="1" width="1" height="1" fill="#000" opacity="0.18"/><rect x="23" y="9" width="1" height="1" fill="#000" opacity="0.32"/><rect x="1" y="19" width="1" height="1" fill="#000" opacity="0.32"/><rect x="5" y="16" width="1" height="1" fill="#000" opacity="0.32"/><rect x="23" y="10" width="1" height="1" fill="#000" opacity="0.25"/><rect x="14" y="21" width="1" height="1" fill="#000" opacity="0.32"/><rect x="14" y="12" width="1" height="1" fill="#000" opacity="0.18"/><rect x="25" y="14" width="1" height="1" fill="#000" opacity="0.18"/><rect x="31" y="22" width="1" height="1" fill="#000" opacity="0.32"/><rect x="1" y="1" width="1" height="1" fill="#000" opacity="0.25"/><rect x="30" y="16" width="1" height="1" fill="#000" opacity="0.18"/><rect x="22" y="28" width="1" height="1" fill="#000" opacity="0.32"/><rect x="22" y="23" width="1" height="1" fill="#000" opacity="0.18"/><rect x="14" y="6" width="1" height="1" fill="#000" opacity="0.18"/><rect x="30" y="12" width="1" height="1" fill="#000" opacity="0.25"/><rect x="13" y="30" width="1" height="1" fill="#000" opacity="0.32"/><rect x="0" y="30" width="1" height="1" fill="#000" opacity="0.32"/><rect x="22" y="5" width="1" height="1" fill="#000" opacity="0.32"/><rect x="7" y="24" width="1" height="1" fill="#000" opacity="0.32"/><rect x="12" y="30" width="1" height="1" fill="#000" opacity="0.18"/><rect x="27" y="21" width="1" height="1" fill="#000" opacity="0.18"/><rect x="25" y="29" width="1" height="1" fill="#000" opacity="0.25"/><rect x="5" y="10" width="1" height="1" fill="#000" opacity="0.18"/><rect x="8" y="1" width="1" height="1" fill="#000" opacity="0.18"/><rect x="29" y="9" width="1" height="1" fill="#000" opacity="0.32"/><rect x="30" y="22" width="1" height="1" fill="#000" opacity="0.18"/><rect x="8" y="1" width="1" height="1" fill="#000" opacity="0.18"/><rect x="6" y="8" width="1" height="1" fill="#000" opacity="0.25"/><rect x="12" y="13" width="1" height="1" fill="#000" opacity="0.18"/><rect x="16" y="13" width="1" height="1" fill="#000" opacity="0.25"/><rect x="15" y="20" width="1" height="1" fill="#000" opacity="0.25"/><rect x="26" y="8" width="1" height="1" fill="#000" opacity="0.18"/><rect x="22" y="29" width="1" height="1" fill="#000" opacity="0.32"/><rect x="26" y="8" width="1" height="1" fill="#000" opacity="0.32"/><rect x="9" y="1" width="1" height="1" fill="#000" opacity="0.25"/><rect x="11" y="0" width="1" height="1" fill="#000" opacity="0.18"/><rect x="11" y="9" width="1" height="1" fill="#000" opacity="0.25"/><rect x="7" y="3" width="1" height="1" fill="#000" opacity="0.25"/><rect x="30" y="6" width="1" height="1" fill="#000" opacity="0.32"/><rect x="3" y="15" width="1" height="1" fill="#000" opacity="0.18"/><rect x="17" y="2" width="1" height="1" fill="#000" opacity="0.18"/><rect x="28" y="1" width="1" height="1" fill="#000" opacity="0.18"/><rect x="28" y="20" width="1" height="1" fill="#000" opacity="0.32"/><rect x="12" y="17" width="1" height="1" fill="#000" opacity="0.25"/><rect x="30" y="15" width="1" height="1" fill="#000" opacity="0.32"/><rect x="16" y="12" width="1" height="1" fill="#000" opacity="0.25"/><rect x="8" y="26" width="1" height="1" fill="#000" opacity="0.18"/><rect x="25" y="28" width="1" height="1" fill="#000" opacity="0.25"/><rect x="4" y="15" width="1" height="1" fill="#000" opacity="0.25"/><rect x="4" y="13" width="1" height="1" fill="#000" opacity="0.32"/><rect x="19" y="7" width="1" height="1" fill="#000" opacity="0.18"/><rect x="23" y="9" width="1" height="1" fill="#000" opacity="0.25"/><rect x="8" y="29" width="1" height="1" fill="#000" opacity="0.18"/><rect x="6" y="25" width="1" height="1" fill="#000" opacity="0.25"/><rect x="10" y="14" width="1" height="1" fill="#000" opacity="0.18"/><rect x="27" y="25" width="1" height="1" fill="#000" opacity="0.25"/><rect x="26" y="12" width="1" height="1" fill="#000" opacity="0.25"/><rect x="20" y="5" width="1" height="1" fill="#000" opacity="0.32"/><rect x="23" y="1" width="1" height="1" fill="#000" opacity="0.25"/><rect x="29" y="28" width="1" height="1" fill="#000" opacity="0.32"/><rect x="1" y="24" width="1" height="1" fill="#000" opacity="0.25"/><rect x="18" y="4" width="1" height="1" fill="#000" opacity="0.18"/><rect x="14" y="6" width="1" height="1" fill="#000" opacity="0.18"/><rect x="16" y="17" width="1" height="1" fill="#000" opacity="0.18"/><rect x="11" y="17" width="1" height="1" fill="#000" opacity="0.18"/><rect x="27" y="16" width="1" height="1" fill="#000" opacity="0.25"/><rect x="9" y="31" width="1" height="1" fill="#000" opacity="0.32"/><rect x="20" y="5" width="1" height="1" fill="#000" opacity="0.25"/><rect x="3" y="11" width="1" height="1" fill="#000" opacity="0.25"/><rect x="4" y="17" width="1" height="1" fill="#000" opacity="0.18"/><rect x="5" y="16" width="1" height="1" fill="#000" opacity="0.18"/><rect x="14" y="4" width="1" height="1" fill="#000" opacity="0.25"/><rect x="7" y="29" width="1" height="1" fill="#000" opacity="0.18"/><rect x="21" y="26" width="1" height="1" fill="#000" opacity="0.25"/><rect x="8" y="2" width="1" height="1" fill="#000" opacity="0.32"/><rect x="15" y="7" width="1" height="1" fill="#000" opacity="0.18"/><rect x="16" y="3" width="1" height="1" fill="#000" opacity="0.18"/><rect x="12" y="19" width="1" height="1" fill="#000" opacity="0.32"/><rect x="19" y="13" width="1" height="1" fill="#000" opacity="0.25"/><rect x="28" y="11" width="1" height="1" fill="#000" opacity="0.25"/><rect x="22" y="1" width="1" height="1" fill="#000" opacity="0.25"/><rect x="2" y="0" width="1" height="1" fill="#000" opacity="0.18"/><rect x="12" y="30" width="1" height="1" fill="#000" opacity="0.18"/><rect x="28" y="6" width="1" height="1" fill="#000" opacity="0.32"/><rect x="27" y="31" width="1" height="1" fill="#000" opacity="0.32"/><rect x="25" y="19" width="1" height="1" fill="#000" opacity="0.32"/><rect x="13" y="14" width="1" height="1" fill="#000" opacity="0.25"/><rect x="12" y="8" width="1" height="1" fill="#000" opacity="0.25"/><rect x="22" y="3" width="1" height="1" fill="#000" opacity="0.18"/><rect x="0" y="4" width="1" height="1" fill="#000" opacity="0.32"/><rect x="16" y="27" width="1" height="1" fill="#000" opacity="0.18"/><rect x="3" y="5" width="1" height="1" fill="#000" opacity="0.32"/><rect x="24" y="18" width="1" height="1" fill="#000" opacity="0.32"/><rect x="15" y="18" width="1" height="1" fill="#000" opacity="0.18"/><rect x="29" y="11" width="1" height="1" fill="#000" opacity="0.18"/><rect x="17" y="28" width="1" height="1" fill="#000" opacity="0.18"/><rect x="16" y="23" width="1" height="1" fill="#000" opacity="0.25"/><rect x="20" y="15" width="1" height="1" fill="#000" opacity="0.18"/><rect x="19" y="13" width="1" height="1" fill="#000" opacity="0.25"/><rect x="11" y="0" width="1" height="1" fill="#000" opacity="0.25"/><rect x="24" y="5" width="1" height="1" fill="#000" opacity="0.25"/><rect x="17" y="12" width="1" height="1" fill="#000" opacity="0.18"/><rect x="0" y="5" width="1" height="1" fill="#000" opacity="0.25"/><rect x="5" y="9" width="1" height="1" fill="#000" opacity="0.25"/><rect x="2" y="25" width="1" height="1" fill="#000" opacity="0.18"/><rect x="19" y="19" width="1" height="1" fill="#000" opacity="0.32"/><rect x="14" y="5" width="1" height="1" fill="#000" opacity="0.32"/><rect x="9" y="24" width="1" height="1" fill="#000" opacity="0.25"/><rect x="31" y="9" width="1" height="1" fill="#000" opacity="0.25"/><rect x="9" y="2" width="1" height="1" fill="#000" opacity="0.32"/><rect x="27" y="8" width="1" height="1" fill="#000" opacity="0.32"/><rect x="1" y="14" width="1" height="1" fill="#000" opacity="0.18"/><rect x="1" y="2" width="1" height="1" fill="#000" opacity="0.18"/><rect x="23" y="6" width="1" height="1" fill="#000" opacity="0.25"/><rect x="28" y="3" width="1" height="1" fill="#000" opacity="0.32"/><rect x="1" y="15" width="1" height="1" fill="#000" opacity="0.25"/><rect x="16" y="0" width="1" height="1" fill="#000" opacity="0.25"/><rect x="4" y="5" width="1" height="1" fill="#000" opacity="0.32"/><rect x="4" y="30" width="1" height="1" fill="#000" opacity="0.25"/><rect x="4" y="16" width="1" height="1" fill="#000" opacity="0.18"/><rect x="13" y="14" width="1" height="1" fill="#000" opacity="0.32"/><rect x="29" y="31" width="1" height="1" fill="#000" opacity="0.25"/><rect x="4" y="30" width="1" height="1" fill="#000" opacity="0.32"/><rect x="18" y="2" width="1" height="1" fill="#000" opacity="0.32"/><rect x="12" y="4" width="1" height="1" fill="#000" opacity="0.32"/><rect x="9" y="21" width="1" height="1" fill="#000" opacity="0.25"/><rect x="19" y="8" width="1" height="1" fill="#000" opacity="0.18"/><rect x="30" y="3" width="1" height="1" fill="#000" opacity="0.25"/><rect x="17" y="6" width="1" height="1" fill="#000" opacity="0.32"/><rect x="13" y="31" width="1" height="1" fill="#000" opacity="0.25"/><rect x="18" y="29" width="1" height="1" fill="#000" opacity="0.25"/><rect x="29" y="7" width="1" height="1" fill="#000" opacity="0.32"/><rect x="12" y="19" width="1" height="1" fill="#000" opacity="0.18"/><rect x="30" y="1" width="1" height="1" fill="#000" opacity="0.25"/><rect x="29" y="4" width="1" height="1" fill="#000" opacity="0.32"/><rect x="28" y="17" width="1" height="1" fill="#000" opacity="0.25"/><rect x="13" y="13" width="1" height="1" fill="#000" opacity="0.18"/><rect x="5" y="9" width="1" height="1" fill="#000" opacity="0.32"/><rect x="16" y="23" width="1" height="1" fill="#000" opacity="0.18"/><rect x="17" y="7" width="1" height="1" fill="#000" opacity="0.32"/><rect x="23" y="14" width="1" height="1" fill="#000" opacity="0.25"/><rect x="31" y="25" width="1" height="1" fill="#000" opacity="0.18"/><rect x="10" y="0" width="1" height="1" fill="#000" opacity="0.25"/><rect x="28" y="25" width="1" height="1" fill="#000" opacity="0.25"/><rect x="9" y="26" width="1" height="1" fill="#000" opacity="0.25"/><rect x="24" y="20" width="1" height="1" fill="#000" opacity="0.18"/><rect x="21" y="0" width="1" height="1" fill="#000" opacity="0.25"/><rect x="21" y="25" width="1" height="1" fill="#000" opacity="0.18"/><rect x="12" y="0" width="1" height="1" fill="#000" opacity="0.32"/><rect x="18" y="16" width="1" height="1" fill="#000" opacity="0.25"/><rect x="4" y="25" width="1" height="1" fill="#000" opacity="0.25"/><rect x="4" y="23" width="1" height="1" fill="#000" opacity="0.25"/><rect x="17" y="3" width="1" height="1" fill="#000" opacity="0.25"/><rect x="6" y="3" width="1" height="1" fill="#000" opacity="0.32"/><rect x="18" y="9" width="1" height="1" fill="#000" opacity="0.18"/><rect x="17" y="27" width="1" height="1" fill="#000" opacity="0.32"/><rect x="20" y="12" width="1" height="1" fill="#000" opacity="0.25"/><rect x="27" y="1" width="1" height="1" fill="#000" opacity="0.32"/><rect x="25" y="13" width="1" height="1" fill="#000" opacity="0.32"/><rect x="5" y="3" width="1" height="1" fill="#000" opacity="0.32"/><rect x="26" y="28" width="1" height="1" fill="#000" opacity="0.32"/><rect x="8" y="18" width="1" height="1" fill="#000" opacity="0.25"/><rect x="3" y="8" width="1" height="1" fill="#000" opacity="0.18"/><rect x="30" y="26" width="1" height="1" fill="#000" opacity="0.25"/><rect x="18" y="19" width="1" height="1" fill="#000" opacity="0.25"/><rect x="16" y="25" width="1" height="1" fill="#000" opacity="0.32"/><rect x="15" y="19" width="1" height="1" fill="#000" opacity="0.25"/><rect x="25" y="7" width="1" height="1" fill="#000" opacity="0.18"/><rect x="10" y="4" width="1" height="1" fill="#000" opacity="0.18"/><rect x="31" y="14" width="1" height="1" fill="#000" opacity="0.25"/><rect x="21" y="28" width="1" height="1" fill="#000" opacity="0.25"/><rect x="8" y="12" width="1" height="1" fill="#000" opacity="0.18"/><rect x="5" y="11" width="1" height="1" fill="#000" opacity="0.25"/><rect x="5" y="20" width="1" height="1" fill="#000" opacity="0.18"/><rect x="23" y="16" width="1" height="1" fill="#000" opacity="0.32"/><rect x="12" y="1" width="1" height="1" fill="#000" opacity="0.32"/><rect x="26" y="24" width="1" height="1" fill="#000" opacity="0.25"/><rect x="13" y="24" width="1" height="1" fill="#000" opacity="0.25"/><rect x="21" y="3" width="1" height="1" fill="#000" opacity="0.25"/><rect x="17" y="23" width="1" height="1" fill="#000" opacity="0.18"/><rect x="13" y="5" width="1" height="1" fill="#000" opacity="0.25"/><rect x="15" y="24" width="1" height="1" fill="#000" opacity="0.25"/><rect x="28" y="27" width="1" height="1" fill="#000" opacity="0.25"/><rect x="1" y="8" width="1" height="1" fill="#000" opacity="0.18"/><rect x="27" y="30" width="1" height="1" fill="#000" opacity="0.32"/><rect x="31" y="0" width="1" height="1" fill="#000" opacity="0.18"/><rect x="25" y="29" width="1" height="1" fill="#000" opacity="0.25"/><rect x="15" y="6" width="1" height="1" fill="#000" opacity="0.18"/><rect x="9" y="9" width="1" height="1" fill="#000" opacity="0.32"/><rect x="6" y="29" width="1" height="1" fill="#000" opacity="0.18"/><rect x="2" y="0" width="1" height="1" fill="#000" opacity="0.18"/><rect x="14" y="2" width="1" height="1" fill="#000" opacity="0.32"/><rect x="19" y="8" width="1" height="1" fill="#000" opacity="0.32"/><rect x="16" y="27" width="1" height="1" fill="#000" opacity="0.32"/><rect x="7" y="6" width="1" height="1" fill="#000" opacity="0.18"/><rect x="19" y="12" width="1" height="1" fill="#000" opacity="0.25"/><rect x="16" y="14" width="1" height="1" fill="#000" opacity="0.32"/><rect x="0" y="0" width="1" height="1" fill="#000" opacity="0.32"/><rect x="19" y="29" width="1" height="1" fill="#000" opacity="0.25"/><rect x="20" y="15" width="1" height="1" fill="#000" opacity="0.25"/><rect x="15" y="15" width="1" height="1" fill="#000" opacity="0.18"/><rect x="26" y="19" width="1" height="1" fill="#000" opacity="0.18"/><rect x="1" y="12" width="1" height="1" fill="#000" opacity="0.25"/><rect x="26" y="5" width="1" height="1" fill="#000" opacity="0.25"/><rect x="14" y="27" width="1" height="1" fill="#000" opacity="0.25"/><rect x="14" y="31" width="1" height="1" fill="#000" opacity="0.18"/><rect x="21" y="26" width="1" height="1" fill="#000" opacity="0.25"/><rect x="25" y="12" width="1" height="1" fill="#000" opacity="0.18"/><rect x="18" y="4" width="1" height="1" fill="#000" opacity="0.18"/><rect x="31" y="12" width="1" height="1" fill="#000" opacity="0.25"/><rect x="12" y="14" width="1" height="1" fill="#000" opacity="0.25"/><rect x="14" y="16" width="1" height="1" fill="#000" opacity="0.25"/><rect x="6" y="31" width="1" height="1" fill="#000" opacity="0.32"/><rect x="11" y="14" width="1" height="1" fill="#000" opacity="0.25"/><rect x="26" y="3" width="1" height="1" fill="#000" opacity="0.32"/><rect x="9" y="25" width="1" height="1" fill="#000" opacity="0.18"/><rect x="13" y="1" width="1" height="1" fill="#000" opacity="0.32"/><rect x="9" y="26" width="1" height="1" fill="#000" opacity="0.18"/><rect x="3" y="11" width="1" height="1" fill="#000" opacity="0.25"/><rect x="28" y="20" width="1" height="1" fill="#000" opacity="0.32"/><rect x="7" y="5" width="1" height="1" fill="#000" opacity="0.18"/><rect x="21" y="12" width="1" height="1" fill="#000" opacity="0.18"/><rect x="29" y="2" width="1" height="1" fill="#000" opacity="0.25"/><rect x="24" y="23" width="1" height="1" fill="#000" opacity="0.25"/><rect x="28" y="10" width="1" height="1" fill="#000" opacity="0.18"/><rect x="0" y="5" width="1" height="1" fill="#000" opacity="0.25"/><rect x="5" y="22" width="1" height="1" fill="#000" opacity="0.25"/><rect x="7" y="13" width="1" height="1" fill="#000" opacity="0.25"/><rect x="22" y="19" width="1" height="1" fill="#000" opacity="0.25"/><rect x="5" y="3" width="1" height="1" fill="#000" opacity="0.32"/><rect x="30" y="12" width="1" height="1" fill="#000" opacity="0.25"/><rect x="28" y="12" width="1" height="1" fill="#000" opacity="0.25"/><rect x="23" y="30" width="1" height="1" fill="#000" opacity="0.18"/><rect x="26" y="15" width="1" height="1" fill="#000" opacity="0.32"/><rect x="25" y="2" width="1" height="1" fill="#000" opacity="0.25"/><rect x="2" y="29" width="1" height="1" fill="#000" opacity="0.18"/><rect x="3" y="16" width="1" height="1" fill="#000" opacity="0.18"/><rect x="4" y="21" width="1" height="1" fill="#000" opacity="0.25"/><rect x="17" y="21" width="1" height="1" fill="#000" opacity="0.32"/><rect x="2" y="16" width="1" height="1" fill="#000" opacity="0.32"/><rect x="20" y="17" width="1" height="1" fill="#000" opacity="0.25"/><rect x="0" y="4" width="1" height="1" fill="#000" opacity="0.18"/><rect x="14" y="6" width="1" height="1" fill="#000" opacity="0.25"/><rect x="29" y="24" width="1" height="1" fill="#000" opacity="0.25"/><rect x="27" y="31" width="1" height="1" fill="#000" opacity="0.18"/><rect x="31" y="11" width="1" height="1" fill="#000" opacity="0.18"/><rect x="19" y="9" width="1" height="1" fill="#000" opacity="0.32"/><rect x="15" y="20" width="1" height="1" fill="#000" opacity="0.25"/><rect x="29" y="23" width="1" height="1" fill="#000" opacity="0.32"/><rect x="5" y="12" width="1" height="1" fill="#000" opacity="0.25"/><rect x="10" y="15" width="1" height="1" fill="#000" opacity="0.25"/><rect x="4" y="2" width="1" height="1" fill="#000" opacity="0.25"/><rect x="20" y="10" width="1" height="1" fill="#000" opacity="0.25"/><rect x="6" y="4" width="1" height="1" fill="#000" opacity="0.25"/><rect x="5" y="13" width="1" height="1" fill="#000" opacity="0.18"/><rect x="26" y="31" width="1" height="1" fill="#000" opacity="0.32"/><rect x="28" y="11" width="1" height="1" fill="#000" opacity="0.18"/><rect x="8" y="26" width="1" height="1" fill="#000" opacity="0.25"/><rect x="15" y="7" width="1" height="1" fill="#000" opacity="0.25"/><rect x="18" y="17" width="1" height="1" fill="#000" opacity="0.32"/><rect x="17" y="23" width="1" height="1" fill="#000" opacity="0.25"/><rect x="16" y="12" width="1" height="1" fill="#000" opacity="0.25"/><rect x="15" y="11" width="1" height="1" fill="#000" opacity="0.18"/><rect x="15" y="9" width="1" height="1" fill="#000" opacity="0.25"/><rect x="12" y="20" width="1" height="1" fill="#000" opacity="0.18"/><rect x="25" y="16" width="1" height="1" fill="#000" opacity="0.18"/><rect x="14" y="6" width="1" height="1" fill="#fff" opacity="0.45"/><rect x="29" y="2" width="1" height="1" fill="#fff" opacity="0.45"/><rect x="6" y="0" width="1" height="1" fill="#fff" opacity="0.45"/><rect x="30" y="14" width="1" height="1" fill="#fff" opacity="0.45"/><rect x="28" y="23" width="1" height="1" fill="#fff" opacity="0.45"/><rect x="2" y="18" width="1" height="1" fill="#fff" opacity="0.45"/><rect x="14" y="7" width="1" height="1" fill="#fff" opacity="0.45"/><rect x="3" y="12" width="1" height="1" fill="#fff" opacity="0.45"/><rect x="12" y="4" width="1" height="1" fill="#fff" opacity="0.45"/><rect x="23" y="11" width="1" height="1" fill="#fff" opacity="0.45"/><rect x="28" y="16" width="1" height="1" fill="#fff" opacity="0.45"/><rect x="0" y="6" width="1" height="1" fill="#fff" opacity="0.45"/><rect x="22" y="13" width="1" height="1" fill="#fff" opacity="0.45"/><rect x="2" y="23" width="1" height="1" fill="#fff" opacity="0.45"/><rect x="21" y="9" width="1" height="1" fill="#fff" opacity="0.45"/><rect x="2" y="13" width="1" height="1" fill="#fff" opacity="0.45"/><rect x="16" y="2" width="1" height="1" fill="#fff" opacity="0.45"/><rect x="13" y="0" width="1" height="1" fill="#fff" opacity="0.45"/><rect x="20" y="26" width="1" height="1" fill="#fff" opacity="0.45"/><rect x="23" y="11" width="1" height="1" fill="#fff" opacity="0.45"/><rect x="19" y="4" width="1" height="1" fill="#fff" opacity="0.45"/><rect x="13" y="2" width="1" height="1" fill="#fff" opacity="0.45"/><rect x="31" y="30" width="1" height="1" fill="#fff" opacity="0.45"/><rect x="4" y="26" width="1" height="1" fill="#fff" opacity="0.45"/><rect x="6" y="25" width="1" height="1" fill="#fff" opacity="0.45"/><rect x="9" y="5" width="1" height="1" fill="#fff" opacity="0.45"/><rect x="10" y="25" width="1" height="1" fill="#fff" opacity="0.45"/><rect x="17" y="26" width="1" height="1" fill="#fff" opacity="0.45"/><rect x="18" y="19" width="1" height="1" fill="#fff" opacity="0.45"/><rect x="26" y="3" width="1" height="1" fill="#fff" opacity="0.45"/><rect x="19" y="22" width="1" height="1" fill="#fff" opacity="0.45"/><rect x="26" y="26" width="1" height="1" fill="#fff" opacity="0.45"/><rect x="1" y="23" width="1" height="1" fill="#fff" opacity="0.45"/><rect x="12" y="25" width="1" height="1" fill="#fff" opacity="0.45"/><rect x="25" y="13" width="1" height="1" fill="#fff" opacity="0.45"/><rect x="0" y="27" width="1" height="1" fill="#fff" opacity="0.45"/><rect x="10" y="27" width="1" height="1" fill="#fff" opacity="0.45"/><rect x="7" y="5" width="1" height="1" fill="#fff" opacity="0.45"/><rect x="25" y="23" width="1" height="1" fill="#fff" opacity="0.45"/><rect x="29" y="10" width="1" height="1" fill="#fff" opacity="0.45"/><rect x="8" y="0" width="1" height="1" fill="#fff" opacity="0.45"/><rect x="3" y="9" width="1" height="1" fill="#fff" opacity="0.45"/><rect x="25" y="5" width="1" height="1" fill="#fff" opacity="0.45"/><rect x="23" y="10" width="1" height="1" fill="#fff" opacity="0.45"/><rect x="9" y="22" width="1" height="1" fill="#fff" opacity="0.45"/><rect x="18" y="10" width="1" height="1" fill="#fff" opacity="0.45"/><rect x="10" y="4" width="1" height="1" fill="#fff" opacity="0.45"/><rect x="6" y="24" width="1" height="1" fill="#fff" opacity="0.45"/><rect x="31" y="12" width="1" height="1" fill="#fff" opacity="0.45"/><rect x="19" y="8" width="1" height="1" fill="#fff" opacity="0.45"/><rect x="2" y="30" width="1" height="1" fill="#fff" opacity="0.45"/><rect x="20" y="3" width="1" height="1" fill="#fff" opacity="0.45"/><rect x="24" y="5" width="1" height="1" fill="#fff" opacity="0.45"/><rect x="10" y="14" width="1" height="1" fill="#fff" opacity="0.45"/><rect x="25" y="12" width="1" height="1" fill="#fff" opacity="0.45"/><rect x="30" y="11" width="1" height="1" fill="#fff" opacity="0.45"/><rect x="13" y="2" width="1" height="1" fill="#fff" opacity="0.45"/><rect x="25" y="10" width="1" height="1" fill="#fff" opacity="0.45"/><rect x="24" y="22" width="1" height="1" fill="#fff" opacity="0.45"/><rect x="7" y="9" width="1" height="1" fill="#fff" opacity="0.45"/><rect x="15" y="12" width="1" height="1" fill="#fff" opacity="0.45"/><rect x="2" y="2" width="1" height="1" fill="#fff" opacity="0.45"/><rect x="20" y="7" width="1" height="1" fill="#fff" opacity="0.45"/><rect x="24" y="29" width="1" height="1" fill="#fff" opacity="0.45"/><rect x="19" y="26" width="1" height="1" fill="#fff" opacity="0.45"/><rect x="19" y="15" width="1" height="1" fill="#fff" opacity="0.45"/><rect x="27" y="24" width="1" height="1" fill="#fff" opacity="0.45"/><rect x="23" y="28" width="1" height="1" fill="#fff" opacity="0.45"/><rect x="28" y="11" width="1" height="1" fill="#fff" opacity="0.45"/><rect x="1" y="0" width="1" height="1" fill="#fff" opacity="0.45"/><rect x="31" y="29" width="1" height="1" fill="#fff" opacity="0.45"/><rect x="15" y="28" width="1" height="1" fill="#fff" opacity="0.45"/><rect x="29" y="11" width="1" height="1" fill="#fff" opacity="0.45"/><rect x="30" y="25" width="1" height="1" fill="#fff" opacity="0.45"/><rect x="6" y="4" width="1" height="1" fill="#fff" opacity="0.45"/><rect x="8" y="22" width="1" height="1" fill="#fff" opacity="0.45"/><rect x="27" y="23" width="1" height="1" fill="#fff" opacity="0.45"/><rect x="5" y="28" width="1" height="1" fill="#fff" opacity="0.45"/><rect x="2" y="2" width="1" height="1" fill="#fff" opacity="0.45"/><rect x="8" y="5" width="1" height="1" fill="#fff" opacity="0.45"/><rect x="20" y="5" width="1" height="1" fill="#fff" opacity="0.45"/><rect x="3" y="24" width="1" height="1" fill="#fff" opacity="0.45"/><rect x="8" y="1" width="1" height="1" fill="#fff" opacity="0.45"/><rect x="4" y="7" width="1" height="1" fill="#fff" opacity="0.45"/><rect x="12" y="8" width="1" height="1" fill="#fff" opacity="0.45"/><rect x="31" y="18" width="1" height="1" fill="#fff" opacity="0.45"/><rect x="10" y="14" width="1" height="1" fill="#fff" opacity="0.45"/><rect x="4" y="22" width="1" height="1" fill="#fff" opacity="0.45"/><rect x="16" y="10" width="1" height="1" fill="#fff" opacity="0.45"/><rect x="20" y="17" width="1" height="1" fill="#fff" opacity="0.45"/><rect x="29" y="9" width="1" height="1" fill="#fff" opacity="0.45"/><rect x="16" y="30" width="1" height="1" fill="#fff" opacity="0.45"/><rect x="13" y="16" width="1" height="1" fill="#fff" opacity="0.45"/><rect x="15" y="20" width="1" height="1" fill="#fff" opacity="0.45"/><rect x="23" y="2" width="1" height="1" fill="#fff" opacity="0.45"/><rect x="12" y="11" width="1" height="1" fill="#fff" opacity="0.45"/><rect x="25" y="10" width="1" height="1" fill="#fff" opacity="0.45"/><rect x="17" y="20" width="1" height="1" fill="#fff" opacity="0.45"/><rect x="24" y="10" width="1" height="1" fill="#fff" opacity="0.45"/><rect x="16" y="7" width="1" height="1" fill="#fff" opacity="0.45"/><rect x="3" y="23" width="1" height="1" fill="#fff" opacity="0.45"/><rect x="28" y="6" width="1" height="1" fill="#fff" opacity="0.45"/><rect x="16" y="25" width="1" height="1" fill="#fff" opacity="0.45"/><rect x="23" y="16" width="1" height="1" fill="#fff" opacity="0.45"/><rect x="24" y="23" width="1" height="1" fill="#fff" opacity="0.45"/><rect x="9" y="23" width="1" height="1" fill="#fff" opacity="0.45"/><rect x="21" y="5" width="1" height="1" fill="#fff" opacity="0.45"/><rect x="28" y="14" width="1" height="1" fill="#fff" opacity="0.45"/><rect x="11" y="3" width="1" height="1" fill="#fff" opacity="0.45"/><rect x="18" y="16" width="1" height="1" fill="#fff" opacity="0.45"/><rect x="19" y="20" width="1" height="1" fill="#fff" opacity="0.45"/><rect x="0" y="2" width="1" height="1" fill="#fff" opacity="0.45"/><rect x="14" y="9" width="1" height="1" fill="#fff" opacity="0.45"/><rect x="18" y="27" width="1" height="1" fill="#fff" opacity="0.45"/><rect x="26" y="23" width="1" height="1" fill="#fff" opacity="0.45"/><rect x="3" y="8" width="1" height="1" fill="#fff" opacity="0.45"/><rect x="31" y="14" width="1" height="1" fill="#fff" opacity="0.45"/><rect x="2" y="1" width="1" height="1" fill="#fff" opacity="0.45"/><rect x="3" y="0" width="1" height="1" fill="#fff" opacity="0.45"/><rect x="22" y="19" width="1" height="1" fill="#fff" opacity="0.45"/></pattern><pattern id="nz2" width="32" height="32" patternUnits="userSpaceOnUse"><rect x="6" y="22" width="1" height="1" fill="#000" opacity="0.42"/><rect x="14" y="26" width="1" height="1" fill="#000" opacity="0.42"/><rect x="19" y="8" width="1" height="1" fill="#000" opacity="0.42"/><rect x="13" y="23" width="1" height="1" fill="#000" opacity="0.42"/><rect x="30" y="10" width="1" height="1" fill="#000" opacity="0.42"/><rect x="8" y="0" width="1" height="1" fill="#000" opacity="0.42"/><rect x="15" y="9" width="1" height="1" fill="#000" opacity="0.42"/><rect x="28" y="6" width="1" height="1" fill="#000" opacity="0.42"/><rect x="4" y="9" width="1" height="1" fill="#000" opacity="0.42"/><rect x="17" y="25" width="1" height="1" fill="#000" opacity="0.42"/><rect x="16" y="0" width="1" height="1" fill="#000" opacity="0.42"/><rect x="3" y="22" width="1" height="1" fill="#000" opacity="0.42"/><rect x="28" y="31" width="1" height="1" fill="#000" opacity="0.42"/><rect x="15" y="10" width="1" height="1" fill="#000" opacity="0.42"/><rect x="0" y="2" width="1" height="1" fill="#000" opacity="0.42"/><rect x="3" y="1" width="1" height="1" fill="#000" opacity="0.42"/><rect x="25" y="11" width="1" height="1" fill="#000" opacity="0.42"/><rect x="15" y="10" width="1" height="1" fill="#000" opacity="0.42"/><rect x="3" y="6" width="1" height="1" fill="#000" opacity="0.42"/><rect x="0" y="12" width="1" height="1" fill="#000" opacity="0.42"/><rect x="9" y="26" width="1" height="1" fill="#000" opacity="0.42"/><rect x="12" y="26" width="1" height="1" fill="#000" opacity="0.42"/><rect x="11" y="19" width="1" height="1" fill="#000" opacity="0.42"/><rect x="4" y="19" width="1" height="1" fill="#000" opacity="0.42"/><rect x="3" y="30" width="1" height="1" fill="#000" opacity="0.42"/><rect x="0" y="24" width="1" height="1" fill="#000" opacity="0.42"/><rect x="27" y="29" width="1" height="1" fill="#000" opacity="0.42"/><rect x="5" y="28" width="1" height="1" fill="#000" opacity="0.42"/><rect x="11" y="14" width="1" height="1" fill="#000" opacity="0.42"/><rect x="6" y="16" width="1" height="1" fill="#000" opacity="0.42"/><rect x="14" y="2" width="1" height="1" fill="#000" opacity="0.42"/><rect x="7" y="21" width="1" height="1" fill="#000" opacity="0.42"/><rect x="16" y="3" width="1" height="1" fill="#000" opacity="0.42"/><rect x="17" y="27" width="1" height="1" fill="#000" opacity="0.42"/><rect x="16" y="18" width="1" height="1" fill="#000" opacity="0.42"/><rect x="13" y="5" width="1" height="1" fill="#000" opacity="0.42"/><rect x="0" y="10" width="1" height="1" fill="#000" opacity="0.42"/><rect x="16" y="15" width="1" height="1" fill="#000" opacity="0.42"/><rect x="12" y="10" width="1" height="1" fill="#000" opacity="0.42"/><rect x="20" y="12" width="1" height="1" fill="#000" opacity="0.42"/><rect x="24" y="21" width="1" height="1" fill="#000" opacity="0.42"/><rect x="15" y="24" width="1" height="1" fill="#000" opacity="0.42"/><rect x="30" y="30" width="1" height="1" fill="#000" opacity="0.42"/><rect x="0" y="1" width="1" height="1" fill="#000" opacity="0.42"/><rect x="27" y="14" width="1" height="1" fill="#000" opacity="0.42"/><rect x="19" y="13" width="1" height="1" fill="#000" opacity="0.42"/><rect x="25" y="4" width="1" height="1" fill="#000" opacity="0.42"/><rect x="10" y="9" width="1" height="1" fill="#000" opacity="0.42"/><rect x="2" y="1" width="1" height="1" fill="#000" opacity="0.42"/><rect x="7" y="6" width="1" height="1" fill="#000" opacity="0.42"/><rect x="10" y="22" width="1" height="1" fill="#000" opacity="0.42"/><rect x="9" y="1" width="1" height="1" fill="#000" opacity="0.42"/><rect x="1" y="2" width="1" height="1" fill="#000" opacity="0.42"/><rect x="8" y="2" width="1" height="1" fill="#000" opacity="0.42"/><rect x="4" y="2" width="1" height="1" fill="#000" opacity="0.42"/><rect x="4" y="23" width="1" height="1" fill="#000" opacity="0.42"/><rect x="12" y="4" width="1" height="1" fill="#000" opacity="0.42"/><rect x="24" y="6" width="1" height="1" fill="#000" opacity="0.42"/><rect x="15" y="13" width="1" height="1" fill="#000" opacity="0.42"/><rect x="13" y="7" width="1" height="1" fill="#000" opacity="0.42"/><rect x="2" y="2" width="1" height="1" fill="#000" opacity="0.42"/><rect x="5" y="18" width="1" height="1" fill="#000" opacity="0.42"/><rect x="30" y="6" width="1" height="1" fill="#000" opacity="0.42"/><rect x="8" y="6" width="1" height="1" fill="#000" opacity="0.42"/><rect x="13" y="18" width="1" height="1" fill="#000" opacity="0.42"/><rect x="20" y="21" width="1" height="1" fill="#000" opacity="0.42"/><rect x="27" y="16" width="1" height="1" fill="#000" opacity="0.42"/><rect x="1" y="22" width="1" height="1" fill="#000" opacity="0.42"/><rect x="16" y="18" width="1" height="1" fill="#000" opacity="0.42"/><rect x="3" y="23" width="1" height="1" fill="#000" opacity="0.42"/><rect x="20" y="30" width="1" height="1" fill="#000" opacity="0.42"/><rect x="18" y="1" width="1" height="1" fill="#000" opacity="0.42"/><rect x="26" y="1" width="1" height="1" fill="#000" opacity="0.42"/><rect x="27" y="6" width="1" height="1" fill="#000" opacity="0.42"/><rect x="22" y="30" width="1" height="1" fill="#000" opacity="0.42"/><rect x="3" y="13" width="1" height="1" fill="#000" opacity="0.42"/><rect x="5" y="18" width="1" height="1" fill="#000" opacity="0.42"/><rect x="10" y="27" width="1" height="1" fill="#000" opacity="0.42"/><rect x="0" y="12" width="1" height="1" fill="#000" opacity="0.42"/><rect x="18" y="3" width="1" height="1" fill="#000" opacity="0.42"/><rect x="0" y="22" width="1" height="1" fill="#000" opacity="0.42"/><rect x="31" y="6" width="1" height="1" fill="#000" opacity="0.42"/><rect x="31" y="11" width="1" height="1" fill="#000" opacity="0.42"/><rect x="31" y="22" width="1" height="1" fill="#000" opacity="0.42"/><rect x="16" y="10" width="1" height="1" fill="#000" opacity="0.42"/><rect x="18" y="13" width="1" height="1" fill="#000" opacity="0.42"/><rect x="14" y="31" width="1" height="1" fill="#000" opacity="0.42"/><rect x="10" y="7" width="1" height="1" fill="#000" opacity="0.42"/><rect x="5" y="31" width="1" height="1" fill="#000" opacity="0.42"/><rect x="6" y="20" width="1" height="1" fill="#000" opacity="0.42"/><rect x="22" y="6" width="1" height="1" fill="#000" opacity="0.42"/><rect x="25" y="25" width="1" height="1" fill="#000" opacity="0.42"/><rect x="5" y="27" width="1" height="1" fill="#000" opacity="0.42"/><rect x="1" y="23" width="1" height="1" fill="#000" opacity="0.42"/><rect x="13" y="19" width="1" height="1" fill="#000" opacity="0.42"/><rect x="16" y="27" width="1" height="1" fill="#000" opacity="0.42"/><rect x="10" y="24" width="1" height="1" fill="#000" opacity="0.42"/><rect x="14" y="29" width="1" height="1" fill="#000" opacity="0.42"/><rect x="8" y="2" width="1" height="1" fill="#000" opacity="0.42"/><rect x="22" y="20" width="1" height="1" fill="#000" opacity="0.42"/><rect x="9" y="28" width="1" height="1" fill="#000" opacity="0.42"/><rect x="20" y="10" width="1" height="1" fill="#000" opacity="0.42"/><rect x="29" y="28" width="1" height="1" fill="#000" opacity="0.42"/><rect x="16" y="14" width="1" height="1" fill="#000" opacity="0.42"/><rect x="8" y="21" width="1" height="1" fill="#000" opacity="0.42"/><rect x="29" y="15" width="1" height="1" fill="#000" opacity="0.42"/><rect x="12" y="17" width="1" height="1" fill="#000" opacity="0.42"/><rect x="19" y="9" width="1" height="1" fill="#000" opacity="0.42"/><rect x="9" y="15" width="1" height="1" fill="#000" opacity="0.42"/><rect x="20" y="22" width="1" height="1" fill="#000" opacity="0.42"/><rect x="10" y="15" width="1" height="1" fill="#000" opacity="0.42"/><rect x="20" y="12" width="1" height="1" fill="#000" opacity="0.42"/><rect x="16" y="6" width="1" height="1" fill="#000" opacity="0.42"/><rect x="10" y="6" width="1" height="1" fill="#000" opacity="0.42"/><rect x="12" y="24" width="1" height="1" fill="#000" opacity="0.42"/><rect x="9" y="9" width="1" height="1" fill="#000" opacity="0.42"/><rect x="19" y="19" width="1" height="1" fill="#000" opacity="0.42"/><rect x="27" y="17" width="1" height="1" fill="#000" opacity="0.42"/><rect x="12" y="6" width="1" height="1" fill="#000" opacity="0.42"/><rect x="6" y="17" width="1" height="1" fill="#000" opacity="0.42"/><rect x="13" y="24" width="1" height="1" fill="#000" opacity="0.42"/><rect x="29" y="2" width="1" height="1" fill="#000" opacity="0.42"/><rect x="0" y="25" width="1" height="1" fill="#000" opacity="0.42"/><rect x="27" y="14" width="1" height="1" fill="#000" opacity="0.42"/><rect x="18" y="29" width="1" height="1" fill="#000" opacity="0.42"/><rect x="1" y="9" width="1" height="1" fill="#000" opacity="0.42"/><rect x="16" y="25" width="1" height="1" fill="#000" opacity="0.42"/><rect x="0" y="15" width="1" height="1" fill="#000" opacity="0.42"/><rect x="27" y="26" width="1" height="1" fill="#000" opacity="0.42"/><rect x="14" y="14" width="1" height="1" fill="#000" opacity="0.42"/><rect x="11" y="7" width="1" height="1" fill="#000" opacity="0.42"/><rect x="29" y="27" width="1" height="1" fill="#000" opacity="0.42"/><rect x="20" y="16" width="1" height="1" fill="#000" opacity="0.42"/><rect x="6" y="26" width="1" height="1" fill="#000" opacity="0.42"/><rect x="15" y="25" width="1" height="1" fill="#000" opacity="0.42"/><rect x="10" y="16" width="1" height="1" fill="#000" opacity="0.42"/><rect x="27" y="30" width="1" height="1" fill="#000" opacity="0.42"/><rect x="29" y="1" width="1" height="1" fill="#000" opacity="0.42"/><rect x="26" y="11" width="1" height="1" fill="#000" opacity="0.42"/><rect x="20" y="0" width="1" height="1" fill="#000" opacity="0.42"/><rect x="24" y="31" width="1" height="1" fill="#000" opacity="0.42"/><rect x="6" y="2" width="1" height="1" fill="#000" opacity="0.42"/><rect x="16" y="13" width="1" height="1" fill="#000" opacity="0.42"/><rect x="10" y="12" width="1" height="1" fill="#000" opacity="0.42"/><rect x="22" y="6" width="1" height="1" fill="#000" opacity="0.42"/><rect x="29" y="13" width="1" height="1" fill="#000" opacity="0.42"/><rect x="30" y="1" width="1" height="1" fill="#000" opacity="0.42"/><rect x="23" y="21" width="1" height="1" fill="#000" opacity="0.42"/><rect x="26" y="29" width="1" height="1" fill="#000" opacity="0.42"/><rect x="13" y="11" width="1" height="1" fill="#000" opacity="0.42"/><rect x="25" y="7" width="1" height="1" fill="#000" opacity="0.42"/><rect x="22" y="3" width="1" height="1" fill="#000" opacity="0.42"/><rect x="16" y="17" width="1" height="1" fill="#000" opacity="0.42"/><rect x="24" y="25" width="1" height="1" fill="#000" opacity="0.42"/><rect x="3" y="0" width="1" height="1" fill="#000" opacity="0.42"/><rect x="4" y="26" width="1" height="1" fill="#000" opacity="0.42"/><rect x="26" y="22" width="1" height="1" fill="#000" opacity="0.42"/><rect x="16" y="6" width="1" height="1" fill="#000" opacity="0.42"/><rect x="14" y="19" width="1" height="1" fill="#000" opacity="0.42"/><rect x="25" y="14" width="1" height="1" fill="#000" opacity="0.42"/><rect x="25" y="29" width="1" height="1" fill="#000" opacity="0.42"/><rect x="13" y="10" width="1" height="1" fill="#000" opacity="0.42"/><rect x="8" y="4" width="1" height="1" fill="#000" opacity="0.42"/><rect x="12" y="30" width="1" height="1" fill="#000" opacity="0.42"/><rect x="14" y="9" width="1" height="1" fill="#000" opacity="0.42"/><rect x="22" y="26" width="1" height="1" fill="#000" opacity="0.42"/><rect x="29" y="18" width="1" height="1" fill="#000" opacity="0.42"/><rect x="8" y="30" width="1" height="1" fill="#000" opacity="0.42"/><rect x="22" y="14" width="1" height="1" fill="#000" opacity="0.42"/><rect x="17" y="24" width="1" height="1" fill="#000" opacity="0.42"/><rect x="16" y="27" width="1" height="1" fill="#000" opacity="0.42"/><rect x="11" y="30" width="1" height="1" fill="#000" opacity="0.42"/><rect x="0" y="17" width="1" height="1" fill="#000" opacity="0.42"/><rect x="22" y="15" width="1" height="1" fill="#000" opacity="0.42"/><rect x="19" y="20" width="1" height="1" fill="#000" opacity="0.42"/><rect x="30" y="31" width="1" height="1" fill="#000" opacity="0.42"/><rect x="27" y="5" width="1" height="1" fill="#000" opacity="0.42"/><rect x="23" y="9" width="1" height="1" fill="#000" opacity="0.42"/><rect x="19" y="24" width="1" height="1" fill="#000" opacity="0.42"/><rect x="3" y="5" width="1" height="1" fill="#000" opacity="0.42"/><rect x="20" y="8" width="1" height="1" fill="#000" opacity="0.42"/><rect x="22" y="0" width="1" height="1" fill="#000" opacity="0.42"/><rect x="0" y="13" width="1" height="1" fill="#000" opacity="0.42"/><rect x="4" y="18" width="1" height="1" fill="#000" opacity="0.42"/><rect x="16" y="6" width="1" height="1" fill="#000" opacity="0.42"/><rect x="9" y="14" width="1" height="1" fill="#000" opacity="0.42"/><rect x="11" y="28" width="1" height="1" fill="#000" opacity="0.42"/><rect x="22" y="9" width="1" height="1" fill="#000" opacity="0.42"/><rect x="13" y="25" width="1" height="1" fill="#000" opacity="0.42"/><rect x="10" y="5" width="1" height="1" fill="#000" opacity="0.42"/><rect x="19" y="12" width="1" height="1" fill="#000" opacity="0.42"/><rect x="31" y="13" width="1" height="1" fill="#000" opacity="0.42"/><rect x="5" y="28" width="1" height="1" fill="#000" opacity="0.42"/><rect x="7" y="7" width="1" height="1" fill="#000" opacity="0.42"/><rect x="16" y="26" width="1" height="1" fill="#000" opacity="0.42"/><rect x="14" y="8" width="1" height="1" fill="#000" opacity="0.42"/><rect x="30" y="31" width="1" height="1" fill="#000" opacity="0.42"/><rect x="3" y="30" width="1" height="1" fill="#000" opacity="0.42"/><rect x="29" y="9" width="1" height="1" fill="#000" opacity="0.42"/><rect x="31" y="15" width="1" height="1" fill="#000" opacity="0.42"/><rect x="31" y="10" width="1" height="1" fill="#000" opacity="0.42"/><rect x="0" y="10" width="1" height="1" fill="#000" opacity="0.42"/><rect x="20" y="29" width="1" height="1" fill="#000" opacity="0.42"/><rect x="31" y="18" width="1" height="1" fill="#000" opacity="0.42"/><rect x="29" y="23" width="1" height="1" fill="#000" opacity="0.42"/><rect x="27" y="26" width="1" height="1" fill="#000" opacity="0.42"/><rect x="4" y="11" width="1" height="1" fill="#000" opacity="0.42"/><rect x="23" y="1" width="1" height="1" fill="#000" opacity="0.42"/><rect x="1" y="2" width="1" height="1" fill="#000" opacity="0.42"/><rect x="21" y="6" width="1" height="1" fill="#000" opacity="0.42"/><rect x="30" y="31" width="1" height="1" fill="#000" opacity="0.42"/><rect x="9" y="2" width="1" height="1" fill="#000" opacity="0.42"/><rect x="13" y="26" width="1" height="1" fill="#000" opacity="0.42"/><rect x="8" y="21" width="1" height="1" fill="#000" opacity="0.42"/><rect x="6" y="23" width="1" height="1" fill="#000" opacity="0.42"/><rect x="21" y="30" width="1" height="1" fill="#000" opacity="0.42"/><rect x="13" y="18" width="1" height="1" fill="#000" opacity="0.42"/><rect x="27" y="21" width="1" height="1" fill="#000" opacity="0.42"/><rect x="27" y="16" width="1" height="1" fill="#000" opacity="0.42"/><rect x="3" y="18" width="1" height="1" fill="#000" opacity="0.42"/><rect x="18" y="22" width="1" height="1" fill="#000" opacity="0.42"/><rect x="31" y="25" width="1" height="1" fill="#000" opacity="0.42"/><rect x="21" y="17" width="1" height="1" fill="#000" opacity="0.42"/><rect x="22" y="13" width="1" height="1" fill="#000" opacity="0.42"/><rect x="31" y="7" width="1" height="1" fill="#000" opacity="0.42"/><rect x="21" y="12" width="1" height="1" fill="#000" opacity="0.42"/><rect x="20" y="19" width="1" height="1" fill="#000" opacity="0.42"/><rect x="8" y="5" width="1" height="1" fill="#000" opacity="0.42"/><rect x="2" y="25" width="1" height="1" fill="#000" opacity="0.42"/><rect x="25" y="3" width="1" height="1" fill="#000" opacity="0.42"/><rect x="25" y="19" width="1" height="1" fill="#000" opacity="0.42"/><rect x="6" y="0" width="1" height="1" fill="#000" opacity="0.42"/><rect x="2" y="12" width="1" height="1" fill="#000" opacity="0.42"/><rect x="30" y="3" width="1" height="1" fill="#000" opacity="0.42"/><rect x="24" y="9" width="1" height="1" fill="#000" opacity="0.42"/><rect x="5" y="13" width="1" height="1" fill="#000" opacity="0.42"/><rect x="2" y="29" width="1" height="1" fill="#000" opacity="0.42"/><rect x="11" y="6" width="1" height="1" fill="#000" opacity="0.42"/><rect x="11" y="2" width="1" height="1" fill="#000" opacity="0.42"/><rect x="26" y="6" width="1" height="1" fill="#000" opacity="0.42"/><rect x="0" y="23" width="1" height="1" fill="#000" opacity="0.42"/><rect x="8" y="19" width="1" height="1" fill="#000" opacity="0.42"/><rect x="16" y="19" width="1" height="1" fill="#000" opacity="0.42"/><rect x="11" y="26" width="1" height="1" fill="#000" opacity="0.42"/><rect x="2" y="20" width="1" height="1" fill="#000" opacity="0.42"/><rect x="1" y="27" width="1" height="1" fill="#000" opacity="0.42"/><rect x="3" y="31" width="1" height="1" fill="#000" opacity="0.42"/><rect x="2" y="7" width="1" height="1" fill="#000" opacity="0.42"/><rect x="26" y="25" width="1" height="1" fill="#000" opacity="0.42"/><rect x="28" y="4" width="1" height="1" fill="#000" opacity="0.42"/><rect x="0" y="24" width="1" height="1" fill="#000" opacity="0.42"/><rect x="9" y="30" width="1" height="1" fill="#000" opacity="0.42"/><rect x="26" y="6" width="1" height="1" fill="#000" opacity="0.42"/><rect x="5" y="30" width="1" height="1" fill="#000" opacity="0.42"/><rect x="13" y="9" width="1" height="1" fill="#000" opacity="0.42"/><rect x="0" y="27" width="1" height="1" fill="#000" opacity="0.42"/><rect x="0" y="0" width="1" height="1" fill="#000" opacity="0.42"/><rect x="7" y="5" width="1" height="1" fill="#000" opacity="0.42"/><rect x="13" y="7" width="1" height="1" fill="#000" opacity="0.42"/><rect x="8" y="30" width="1" height="1" fill="#000" opacity="0.42"/><rect x="1" y="17" width="1" height="1" fill="#000" opacity="0.42"/><rect x="15" y="28" width="1" height="1" fill="#000" opacity="0.42"/><rect x="11" y="3" width="1" height="1" fill="#000" opacity="0.42"/><rect x="23" y="9" width="1" height="1" fill="#000" opacity="0.42"/><rect x="5" y="18" width="1" height="1" fill="#000" opacity="0.42"/><rect x="31" y="29" width="1" height="1" fill="#000" opacity="0.42"/><rect x="16" y="3" width="1" height="1" fill="#000" opacity="0.42"/><rect x="2" y="0" width="1" height="1" fill="#000" opacity="0.42"/><rect x="3" y="0" width="1" height="1" fill="#000" opacity="0.42"/><rect x="5" y="24" width="1" height="1" fill="#000" opacity="0.42"/><rect x="19" y="19" width="1" height="1" fill="#000" opacity="0.42"/><rect x="10" y="31" width="1" height="1" fill="#000" opacity="0.42"/><rect x="3" y="20" width="1" height="1" fill="#000" opacity="0.42"/><rect x="23" y="28" width="1" height="1" fill="#000" opacity="0.42"/><rect x="30" y="10" width="1" height="1" fill="#000" opacity="0.42"/><rect x="9" y="7" width="1" height="1" fill="#000" opacity="0.42"/><rect x="23" y="10" width="1" height="1" fill="#000" opacity="0.42"/><rect x="26" y="30" width="1" height="1" fill="#000" opacity="0.42"/><rect x="24" y="28" width="1" height="1" fill="#000" opacity="0.42"/><rect x="17" y="21" width="1" height="1" fill="#000" opacity="0.42"/><rect x="18" y="17" width="1" height="1" fill="#000" opacity="0.42"/><rect x="3" y="21" width="1" height="1" fill="#000" opacity="0.42"/><rect x="0" y="9" width="1" height="1" fill="#000" opacity="0.42"/><rect x="19" y="27" width="1" height="1" fill="#000" opacity="0.42"/><rect x="15" y="24" width="1" height="1" fill="#000" opacity="0.42"/><rect x="24" y="24" width="1" height="1" fill="#000" opacity="0.42"/><rect x="14" y="28" width="1" height="1" fill="#000" opacity="0.42"/><rect x="18" y="0" width="1" height="1" fill="#000" opacity="0.42"/><rect x="20" y="16" width="1" height="1" fill="#000" opacity="0.42"/><rect x="17" y="27" width="1" height="1" fill="#000" opacity="0.42"/><rect x="10" y="2" width="1" height="1" fill="#000" opacity="0.42"/><rect x="18" y="9" width="1" height="1" fill="#000" opacity="0.42"/><rect x="9" y="17" width="1" height="1" fill="#000" opacity="0.42"/><rect x="31" y="22" width="1" height="1" fill="#000" opacity="0.42"/><rect x="5" y="31" width="1" height="1" fill="#000" opacity="0.42"/><rect x="24" y="12" width="1" height="1" fill="#000" opacity="0.42"/><rect x="14" y="19" width="1" height="1" fill="#000" opacity="0.42"/><rect x="3" y="25" width="1" height="1" fill="#000" opacity="0.42"/><rect x="29" y="13" width="1" height="1" fill="#000" opacity="0.42"/><rect x="16" y="0" width="1" height="1" fill="#000" opacity="0.42"/><rect x="24" y="29" width="1" height="1" fill="#fff" opacity="0.6"/><rect x="5" y="22" width="1" height="1" fill="#fff" opacity="0.6"/><rect x="4" y="14" width="1" height="1" fill="#fff" opacity="0.6"/><rect x="25" y="16" width="1" height="1" fill="#fff" opacity="0.6"/><rect x="20" y="30" width="1" height="1" fill="#fff" opacity="0.6"/><rect x="12" y="12" width="1" height="1" fill="#fff" opacity="0.6"/><rect x="13" y="12" width="1" height="1" fill="#fff" opacity="0.6"/><rect x="5" y="11" width="1" height="1" fill="#fff" opacity="0.6"/><rect x="18" y="23" width="1" height="1" fill="#fff" opacity="0.6"/><rect x="22" y="25" width="1" height="1" fill="#fff" opacity="0.6"/><rect x="9" y="15" width="1" height="1" fill="#fff" opacity="0.6"/><rect x="2" y="31" width="1" height="1" fill="#fff" opacity="0.6"/><rect x="23" y="6" width="1" height="1" fill="#fff" opacity="0.6"/><rect x="23" y="29" width="1" height="1" fill="#fff" opacity="0.6"/><rect x="5" y="9" width="1" height="1" fill="#fff" opacity="0.6"/><rect x="20" y="1" width="1" height="1" fill="#fff" opacity="0.6"/><rect x="22" y="17" width="1" height="1" fill="#fff" opacity="0.6"/><rect x="1" y="6" width="1" height="1" fill="#fff" opacity="0.6"/><rect x="2" y="13" width="1" height="1" fill="#fff" opacity="0.6"/><rect x="31" y="13" width="1" height="1" fill="#fff" opacity="0.6"/><rect x="16" y="17" width="1" height="1" fill="#fff" opacity="0.6"/><rect x="27" y="6" width="1" height="1" fill="#fff" opacity="0.6"/><rect x="28" y="8" width="1" height="1" fill="#fff" opacity="0.6"/><rect x="16" y="2" width="1" height="1" fill="#fff" opacity="0.6"/><rect x="21" y="12" width="1" height="1" fill="#fff" opacity="0.6"/><rect x="11" y="24" width="1" height="1" fill="#fff" opacity="0.6"/><rect x="5" y="1" width="1" height="1" fill="#fff" opacity="0.6"/><rect x="3" y="2" width="1" height="1" fill="#fff" opacity="0.6"/><rect x="23" y="29" width="1" height="1" fill="#fff" opacity="0.6"/><rect x="31" y="4" width="1" height="1" fill="#fff" opacity="0.6"/><rect x="25" y="7" width="1" height="1" fill="#fff" opacity="0.6"/><rect x="5" y="16" width="1" height="1" fill="#fff" opacity="0.6"/><rect x="20" y="14" width="1" height="1" fill="#fff" opacity="0.6"/><rect x="5" y="25" width="1" height="1" fill="#fff" opacity="0.6"/><rect x="11" y="28" width="1" height="1" fill="#fff" opacity="0.6"/><rect x="10" y="23" width="1" height="1" fill="#fff" opacity="0.6"/><rect x="15" y="14" width="1" height="1" fill="#fff" opacity="0.6"/><rect x="11" y="2" width="1" height="1" fill="#fff" opacity="0.6"/><rect x="16" y="22" width="1" height="1" fill="#fff" opacity="0.6"/><rect x="3" y="1" width="1" height="1" fill="#fff" opacity="0.6"/><rect x="3" y="16" width="1" height="1" fill="#fff" opacity="0.6"/><rect x="30" y="3" width="1" height="1" fill="#fff" opacity="0.6"/><rect x="6" y="9" width="1" height="1" fill="#fff" opacity="0.6"/><rect x="20" y="0" width="1" height="1" fill="#fff" opacity="0.6"/><rect x="12" y="19" width="1" height="1" fill="#fff" opacity="0.6"/><rect x="28" y="6" width="1" height="1" fill="#fff" opacity="0.6"/><rect x="30" y="20" width="1" height="1" fill="#fff" opacity="0.6"/><rect x="23" y="16" width="1" height="1" fill="#fff" opacity="0.6"/><rect x="24" y="7" width="1" height="1" fill="#fff" opacity="0.6"/><rect x="23" y="30" width="1" height="1" fill="#fff" opacity="0.6"/><rect x="24" y="10" width="1" height="1" fill="#fff" opacity="0.6"/><rect x="28" y="15" width="1" height="1" fill="#fff" opacity="0.6"/><rect x="9" y="0" width="1" height="1" fill="#fff" opacity="0.6"/><rect x="29" y="12" width="1" height="1" fill="#fff" opacity="0.6"/><rect x="2" y="10" width="1" height="1" fill="#fff" opacity="0.6"/><rect x="14" y="4" width="1" height="1" fill="#fff" opacity="0.6"/><rect x="23" y="8" width="1" height="1" fill="#fff" opacity="0.6"/><rect x="28" y="6" width="1" height="1" fill="#fff" opacity="0.6"/><rect x="24" y="1" width="1" height="1" fill="#fff" opacity="0.6"/><rect x="4" y="28" width="1" height="1" fill="#fff" opacity="0.6"/><rect x="21" y="20" width="1" height="1" fill="#fff" opacity="0.6"/><rect x="14" y="30" width="1" height="1" fill="#fff" opacity="0.6"/><rect x="7" y="23" width="1" height="1" fill="#fff" opacity="0.6"/><rect x="9" y="21" width="1" height="1" fill="#fff" opacity="0.6"/><rect x="14" y="3" width="1" height="1" fill="#fff" opacity="0.6"/><rect x="11" y="28" width="1" height="1" fill="#fff" opacity="0.6"/><rect x="9" y="28" width="1" height="1" fill="#fff" opacity="0.6"/><rect x="9" y="17" width="1" height="1" fill="#fff" opacity="0.6"/><rect x="26" y="26" width="1" height="1" fill="#fff" opacity="0.6"/><rect x="15" y="9" width="1" height="1" fill="#fff" opacity="0.6"/><rect x="1" y="17" width="1" height="1" fill="#fff" opacity="0.6"/><rect x="18" y="21" width="1" height="1" fill="#fff" opacity="0.6"/><rect x="10" y="16" width="1" height="1" fill="#fff" opacity="0.6"/><rect x="31" y="6" width="1" height="1" fill="#fff" opacity="0.6"/><rect x="20" y="29" width="1" height="1" fill="#fff" opacity="0.6"/><rect x="30" y="7" width="1" height="1" fill="#fff" opacity="0.6"/><rect x="9" y="3" width="1" height="1" fill="#fff" opacity="0.6"/><rect x="13" y="30" width="1" height="1" fill="#fff" opacity="0.6"/><rect x="18" y="7" width="1" height="1" fill="#fff" opacity="0.6"/><rect x="16" y="12" width="1" height="1" fill="#fff" opacity="0.6"/><rect x="23" y="27" width="1" height="1" fill="#fff" opacity="0.6"/><rect x="16" y="15" width="1" height="1" fill="#fff" opacity="0.6"/><rect x="15" y="6" width="1" height="1" fill="#fff" opacity="0.6"/><rect x="24" y="18" width="1" height="1" fill="#fff" opacity="0.6"/><rect x="26" y="10" width="1" height="1" fill="#fff" opacity="0.6"/><rect x="3" y="18" width="1" height="1" fill="#fff" opacity="0.6"/><rect x="9" y="1" width="1" height="1" fill="#fff" opacity="0.6"/><rect x="28" y="21" width="1" height="1" fill="#fff" opacity="0.6"/><rect x="8" y="28" width="1" height="1" fill="#fff" opacity="0.6"/><rect x="0" y="18" width="1" height="1" fill="#fff" opacity="0.6"/><rect x="11" y="23" width="1" height="1" fill="#fff" opacity="0.6"/><rect x="27" y="2" width="1" height="1" fill="#fff" opacity="0.6"/><rect x="26" y="13" width="1" height="1" fill="#fff" opacity="0.6"/><rect x="17" y="11" width="1" height="1" fill="#fff" opacity="0.6"/><rect x="8" y="11" width="1" height="1" fill="#fff" opacity="0.6"/><rect x="14" y="11" width="1" height="1" fill="#fff" opacity="0.6"/><rect x="12" y="5" width="1" height="1" fill="#fff" opacity="0.6"/><rect x="5" y="31" width="1" height="1" fill="#fff" opacity="0.6"/><rect x="17" y="11" width="1" height="1" fill="#fff" opacity="0.6"/><rect x="13" y="8" width="1" height="1" fill="#fff" opacity="0.6"/><rect x="12" y="19" width="1" height="1" fill="#fff" opacity="0.6"/><rect x="12" y="0" width="1" height="1" fill="#fff" opacity="0.6"/><rect x="4" y="26" width="1" height="1" fill="#fff" opacity="0.6"/><rect x="3" y="22" width="1" height="1" fill="#fff" opacity="0.6"/><rect x="21" y="18" width="1" height="1" fill="#fff" opacity="0.6"/><rect x="31" y="5" width="1" height="1" fill="#fff" opacity="0.6"/><rect x="0" y="26" width="1" height="1" fill="#fff" opacity="0.6"/><rect x="30" y="8" width="1" height="1" fill="#fff" opacity="0.6"/><rect x="17" y="15" width="1" height="1" fill="#fff" opacity="0.6"/><rect x="11" y="23" width="1" height="1" fill="#fff" opacity="0.6"/><rect x="2" y="10" width="1" height="1" fill="#fff" opacity="0.6"/><rect x="23" y="0" width="1" height="1" fill="#fff" opacity="0.6"/><rect x="22" y="28" width="1" height="1" fill="#fff" opacity="0.6"/><rect x="4" y="7" width="1" height="1" fill="#fff" opacity="0.6"/><rect x="22" y="15" width="1" height="1" fill="#fff" opacity="0.6"/><rect x="20" y="24" width="1" height="1" fill="#fff" opacity="0.6"/><rect x="3" y="18" width="1" height="1" fill="#fff" opacity="0.6"/><rect x="6" y="31" width="1" height="1" fill="#fff" opacity="0.6"/><rect x="28" y="1" width="1" height="1" fill="#fff" opacity="0.6"/><rect x="8" y="1" width="1" height="1" fill="#fff" opacity="0.6"/><rect x="15" y="5" width="1" height="1" fill="#fff" opacity="0.6"/><rect x="14" y="11" width="1" height="1" fill="#fff" opacity="0.6"/><rect x="10" y="6" width="1" height="1" fill="#fff" opacity="0.6"/><rect x="19" y="16" width="1" height="1" fill="#fff" opacity="0.6"/><rect x="1" y="1" width="1" height="1" fill="#fff" opacity="0.6"/><rect x="6" y="12" width="1" height="1" fill="#fff" opacity="0.6"/><rect x="16" y="1" width="1" height="1" fill="#fff" opacity="0.6"/><rect x="29" y="15" width="1" height="1" fill="#fff" opacity="0.6"/><rect x="28" y="6" width="1" height="1" fill="#fff" opacity="0.6"/><rect x="22" y="6" width="1" height="1" fill="#fff" opacity="0.6"/><rect x="11" y="2" width="1" height="1" fill="#fff" opacity="0.6"/><rect x="17" y="7" width="1" height="1" fill="#fff" opacity="0.6"/><rect x="29" y="31" width="1" height="1" fill="#fff" opacity="0.6"/><rect x="17" y="7" width="1" height="1" fill="#fff" opacity="0.6"/><rect x="7" y="7" width="1" height="1" fill="#fff" opacity="0.6"/><rect x="25" y="8" width="1" height="1" fill="#fff" opacity="0.6"/><rect x="14" y="14" width="1" height="1" fill="#fff" opacity="0.6"/><rect x="9" y="29" width="1" height="1" fill="#fff" opacity="0.6"/><rect x="25" y="10" width="1" height="1" fill="#fff" opacity="0.6"/><rect x="1" y="24" width="1" height="1" fill="#fff" opacity="0.6"/><rect x="26" y="2" width="1" height="1" fill="#fff" opacity="0.6"/><rect x="25" y="3" width="1" height="1" fill="#fff" opacity="0.6"/><rect x="23" y="21" width="1" height="1" fill="#fff" opacity="0.6"/><rect x="25" y="15" width="1" height="1" fill="#fff" opacity="0.6"/><rect x="21" y="27" width="1" height="1" fill="#fff" opacity="0.6"/><rect x="20" y="25" width="1" height="1" fill="#fff" opacity="0.6"/><rect x="3" y="20" width="1" height="1" fill="#fff" opacity="0.6"/><rect x="9" y="22" width="1" height="1" fill="#fff" opacity="0.6"/><rect x="15" y="27" width="1" height="1" fill="#fff" opacity="0.6"/><rect x="0" y="23" width="1" height="1" fill="#fff" opacity="0.6"/><rect x="6" y="11" width="1" height="1" fill="#fff" opacity="0.6"/><rect x="4" y="20" width="1" height="1" fill="#fff" opacity="0.6"/><rect x="27" y="12" width="1" height="1" fill="#fff" opacity="0.6"/><rect x="1" y="14" width="1" height="1" fill="#fff" opacity="0.6"/><rect x="8" y="26" width="1" height="1" fill="#fff" opacity="0.6"/><rect x="25" y="29" width="1" height="1" fill="#fff" opacity="0.6"/><rect x="2" y="2" width="1" height="1" fill="#fff" opacity="0.6"/><rect x="2" y="17" width="1" height="1" fill="#fff" opacity="0.6"/><rect x="17" y="2" width="1" height="1" fill="#fff" opacity="0.6"/><rect x="6" y="16" width="1" height="1" fill="#fff" opacity="0.6"/><rect x="7" y="0" width="1" height="1" fill="#fff" opacity="0.6"/><rect x="27" y="15" width="1" height="1" fill="#fff" opacity="0.6"/><rect x="2" y="18" width="1" height="1" fill="#fff" opacity="0.6"/><rect x="7" y="19" width="1" height="1" fill="#fff" opacity="0.6"/><rect x="22" y="10" width="1" height="1" fill="#fff" opacity="0.6"/><rect x="7" y="3" width="1" height="1" fill="#fff" opacity="0.6"/><rect x="17" y="5" width="1" height="1" fill="#fff" opacity="0.6"/><rect x="29" y="9" width="1" height="1" fill="#fff" opacity="0.6"/><rect x="28" y="7" width="1" height="1" fill="#fff" opacity="0.6"/><rect x="8" y="18" width="1" height="1" fill="#fff" opacity="0.6"/><rect x="26" y="18" width="1" height="1" fill="#fff" opacity="0.6"/><rect x="17" y="15" width="1" height="1" fill="#fff" opacity="0.6"/><rect x="5" y="18" width="1" height="1" fill="#fff" opacity="0.6"/><rect x="29" y="14" width="1" height="1" fill="#fff" opacity="0.6"/><rect x="24" y="12" width="1" height="1" fill="#fff" opacity="0.6"/><rect x="23" y="29" width="1" height="1" fill="#fff" opacity="0.6"/><rect x="19" y="30" width="1" height="1" fill="#fff" opacity="0.6"/><rect x="30" y="19" width="1" height="1" fill="#fff" opacity="0.6"/><rect x="1" y="15" width="1" height="1" fill="#fff" opacity="0.6"/><rect x="21" y="14" width="1" height="1" fill="#fff" opacity="0.6"/><rect x="12" y="24" width="1" height="1" fill="#fff" opacity="0.6"/><rect x="25" y="0" width="1" height="1" fill="#fff" opacity="0.6"/><rect x="22" y="10" width="1" height="1" fill="#fff" opacity="0.6"/><rect x="15" y="20" width="1" height="1" fill="#fff" opacity="0.6"/><rect x="20" y="31" width="1" height="1" fill="#fff" opacity="0.6"/><rect x="17" y="18" width="1" height="1" fill="#fff" opacity="0.6"/><rect x="13" y="18" width="1" height="1" fill="#fff" opacity="0.6"/><rect x="3" y="1" width="1" height="1" fill="#fff" opacity="0.6"/><rect x="10" y="4" width="1" height="1" fill="#fff" opacity="0.6"/><rect x="22" y="28" width="1" height="1" fill="#fff" opacity="0.6"/><rect x="3" y="24" width="1" height="1" fill="#fff" opacity="0.6"/><rect x="28" y="22" width="1" height="1" fill="#fff" opacity="0.6"/><rect x="6" y="14" width="1" height="1" fill="#fff" opacity="0.6"/><rect x="9" y="26" width="1" height="1" fill="#fff" opacity="0.6"/><rect x="21" y="22" width="1" height="1" fill="#fff" opacity="0.6"/><rect x="8" y="12" width="1" height="1" fill="#fff" opacity="0.6"/><rect x="17" y="6" width="1" height="1" fill="#fff" opacity="0.6"/><rect x="30" y="17" width="1" height="1" fill="#fff" opacity="0.6"/><rect x="8" y="26" width="1" height="1" fill="#fff" opacity="0.6"/><rect x="6" y="0" width="1" height="1" fill="#fff" opacity="0.6"/><rect x="26" y="7" width="1" height="1" fill="#fff" opacity="0.6"/><rect x="31" y="25" width="1" height="1" fill="#fff" opacity="0.6"/><rect x="9" y="26" width="1" height="1" fill="#fff" opacity="0.6"/><rect x="17" y="7" width="1" height="1" fill="#fff" opacity="0.6"/><rect x="24" y="28" width="1" height="1" fill="#fff" opacity="0.6"/><rect x="29" y="18" width="1" height="1" fill="#fff" opacity="0.6"/><rect x="22" y="18" width="1" height="1" fill="#fff" opacity="0.6"/><rect x="22" y="25" width="1" height="1" fill="#fff" opacity="0.6"/><rect x="24" y="20" width="1" height="1" fill="#fff" opacity="0.6"/><rect x="0" y="31" width="1" height="1" fill="#fff" opacity="0.6"/><rect x="24" y="28" width="1" height="1" fill="#fff" opacity="0.6"/><rect x="19" y="11" width="1" height="1" fill="#fff" opacity="0.6"/><rect x="19" y="9" width="1" height="1" fill="#fff" opacity="0.6"/><rect x="27" y="24" width="1" height="1" fill="#fff" opacity="0.6"/><rect x="14" y="5" width="1" height="1" fill="#fff" opacity="0.6"/><rect x="21" y="20" width="1" height="1" fill="#fff" opacity="0.6"/><rect x="15" y="20" width="1" height="1" fill="#fff" opacity="0.6"/><rect x="13" y="27" width="1" height="1" fill="#fff" opacity="0.6"/><rect x="0" y="1" width="1" height="1" fill="#fff" opacity="0.6"/><rect x="3" y="16" width="1" height="1" fill="#fff" opacity="0.6"/></pattern><pattern id="dots" width="3.2" height="3.2" patternUnits="userSpaceOnUse" patternTransform="rotate(25)"><circle cx="1.6" cy="1.6" r="0.6" fill="#333" opacity="0.7"/></pattern><pattern id="lines" width="2" height="2.2" patternUnits="userSpaceOnUse"><rect x="0" y="1" width="1.4" height="0.7" fill="#444" opacity="0.4"/></pattern><pattern id="diag" width="2.5" height="2.5" patternUnits="userSpaceOnUse" patternTransform="rotate(35)"><rect x="0" y="0" width="2.5" height="0.9" fill="#333" opacity="0.55"/></pattern><radialGradient id="hg" cx="0.5" cy="0.4" r="0.62"><stop offset="0" stop-color="#f2f2f2"/><stop offset="0.7" stop-color="#d2d2d2"/><stop offset="1" stop-color="#8a8a8a"/></radialGradient><radialGradient id="hg2" cx="0.5" cy="0.4" r="0.62"><stop offset="0" stop-color="#d0d0d0"/><stop offset="0.75" stop-color="#b0b0b0"/><stop offset="1" stop-color="#707070"/></radialGradient><linearGradient id="bg1" x1="0" y1="0" x2="0" y2="1"><stop offset="0" stop-color="#d4d4d4"/><stop offset="0.5" stop-color="#9c9c9c"/><stop offset="1" stop-color="#646464"/></linearGradient></defs><g transform="translate(0 0)"><circle cx="86.5" cy="43" r="38.5" fill="#ecb883"/><path d="M47 56 C 52 70, 66 82, 86 82 C 102 82, 114 74, 120 62 L 115 64 L 105 63 L 96.7 68 L 90 71 L 75.8 73 L 62.5 71 L 50 63 Z" fill="#4a3020"/><path d="M82 80 C 88 77, 95 76, 100 77 C 96 80, 90 82, 82 81 Z" fill="#d9a870"/><path d="M50.0 37.5 C52.6 34.0 57.8 28.1 62.0 25.0 C66.2 21.9 70.9 20.2 75.0 19.0 C79.1 17.8 82.9 17.3 86.7 17.5 C90.5 17.7 94.1 18.8 98.0 20.0 C101.9 21.2 106.5 22.8 110.0 25.0 C113.5 27.2 116.8 29.4 119.0 33.0 C121.2 36.6 122.5 42.5 123.0 46.7 C123.5 50.9 123.3 55.1 122.0 58.0 C120.7 60.9 117.8 63.2 115.0 64.0 C112.2 64.8 108.0 62.3 105.0 63.0 C102.0 63.7 99.2 66.7 96.7 68.0 C94.2 69.3 93.5 70.2 90.0 71.0 C86.5 71.8 80.4 73.0 75.8 73.0 C71.2 73.0 66.8 72.7 62.5 71.0 C58.2 69.3 52.7 65.8 50.0 63.0 C47.3 60.2 47.1 56.8 46.5 54.0 C45.9 51.2 45.9 48.8 46.5 46.0 C47.1 43.2 47.4 41.0 50.0 37.5 Z" fill="url(#hg)"/><path d="M50.0 37.5 C52.6 34.0 57.8 28.1 62.0 25.0 C66.2 21.9 70.9 20.2 75.0 19.0 C79.1 17.8 82.9 17.3 86.7 17.5 C90.5 17.7 94.1 18.8 98.0 20.0 C101.9 21.2 106.5 22.8 110.0 25.0 C113.5 27.2 116.8 29.4 119.0 33.0 C121.2 36.6 122.5 42.5 123.0 46.7 C123.5 50.9 123.3 55.1 122.0 58.0 C120.7 60.9 117.8 63.2 115.0 64.0 C112.2 64.8 108.0 62.3 105.0 63.0 C102.0 63.7 99.2 66.7 96.7 68.0 C94.2 69.3 93.5 70.2 90.0 71.0 C86.5 71.8 80.4 73.0 75.8 73.0 C71.2 73.0 66.8 72.7 62.5 71.0 C58.2 69.3 52.7 65.8 50.0 63.0 C47.3 60.2 47.1 56.8 46.5 54.0 C45.9 51.2 45.9 48.8 46.5 46.0 C47.1 43.2 47.4 41.0 50.0 37.5 Z" fill="url(#nz)"/><path d="M76 20 L86 29 L90 34 L92 28 L97 25 L93 30 L91 36 L84 28 Z" fill="#6a5a4a" opacity="0.8"/><ellipse cx="68.7" cy="45" rx="5.0" ry="8.2" fill="none" stroke="#000" stroke-width="3.2"/><path d="M71.9 39.5 L65.5 50.5" stroke="#000" stroke-width="1.6"/><ellipse cx="101.2" cy="45" rx="5.0" ry="8.2" fill="none" stroke="#000" stroke-width="3.2"/><path d="M104.4 39.5 L98.0 50.5" stroke="#000" stroke-width="1.6"/><ellipse cx="85" cy="119" rx="58.6" ry="17.3" fill="#e6b27a"/><path d="M91 121 C 96 124, 98 129, 103 130 C 108 131, 114 131, 116 133 C 130 133, 142 128, 146 120 L 140 118 Z" fill="#fff"/><clipPath id="bc1"><path d="M48.5 112.2 Q85.0 113.8 120.1 124.1 L121.5 115.8 Q85.0 114.2 49.9 103.9 Z"/><ellipse cx="42.8" cy="104.2" rx="8.9" ry="3.7" transform="rotate(3.5 42.8 104.2)"/><ellipse cx="43.6" cy="109.8" rx="8.9" ry="3.7" transform="rotate(15.5 43.6 109.8)"/><ellipse cx="128.1" cy="118.4" rx="8.9" ry="3.7" transform="rotate(15.5 128.1 118.4)"/><ellipse cx="125.5" cy="123.5" rx="8.9" ry="3.7" transform="rotate(3.5 125.5 123.5)"/></clipPath><g clip-path="url(#bc1)"><rect x="30.5" y="94.5" width="109.0" height="39.0" fill="#666"/><g transform="translate(0 -1.8)" fill="#a6a6a6"><path d="M48.5 112.2 Q85.0 113.8 120.1 124.1 L121.5 115.8 Q85.0 114.2 49.9 103.9 Z"/><ellipse cx="42.8" cy="104.2" rx="8.9" ry="3.7" transform="rotate(3.5 42.8 104.2)"/><ellipse cx="43.6" cy="109.8" rx="8.9" ry="3.7" transform="rotate(15.5 43.6 109.8)"/><ellipse cx="128.1" cy="118.4" rx="8.9" ry="3.7" transform="rotate(15.5 128.1 118.4)"/><ellipse cx="125.5" cy="123.5" rx="8.9" ry="3.7" transform="rotate(3.5 125.5 123.5)"/></g><g transform="translate(0 2.2)" fill="#d2d2d2" opacity="0.0"><path d="M48.5 112.2 Q85.0 113.8 120.1 124.1 L121.5 115.8 Q85.0 114.2 49.9 103.9 Z"/><ellipse cx="42.8" cy="104.2" rx="8.9" ry="3.7" transform="rotate(3.5 42.8 104.2)"/><ellipse cx="43.6" cy="109.8" rx="8.9" ry="3.7" transform="rotate(15.5 43.6 109.8)"/><ellipse cx="128.1" cy="118.4" rx="8.9" ry="3.7" transform="rotate(15.5 128.1 118.4)"/><ellipse cx="125.5" cy="123.5" rx="8.9" ry="3.7" transform="rotate(3.5 125.5 123.5)"/></g><rect x="30.5" y="94.5" width="109.0" height="39.0" fill="url(#nz)"/></g><clipPath id="bc2"><path d="M41.7 123.4 Q82.5 114.3 124.2 113.9 L123.3 105.6 Q82.5 114.7 40.8 115.1 Z"/><ellipse cx="34.1" cy="117.4" rx="8.9" ry="3.7" transform="rotate(-12.6 34.1 117.4)"/><ellipse cx="36.4" cy="122.6" rx="8.9" ry="3.7" transform="rotate(-0.6 36.4 122.6)"/><ellipse cx="130.3" cy="106.2" rx="8.9" ry="3.7" transform="rotate(-0.6 130.3 106.2)"/><ellipse cx="129.3" cy="111.8" rx="8.9" ry="3.7" transform="rotate(-12.6 129.3 111.8)"/></clipPath><g clip-path="url(#bc2)"><rect x="22.5" y="96.5" width="120.0" height="36.0" fill="#666"/><g transform="translate(0 -1.8)" fill="#a6a6a6"><path d="M41.7 123.4 Q82.5 114.3 124.2 113.9 L123.3 105.6 Q82.5 114.7 40.8 115.1 Z"/><ellipse cx="34.1" cy="117.4" rx="8.9" ry="3.7" transform="rotate(-12.6 34.1 117.4)"/><ellipse cx="36.4" cy="122.6" rx="8.9" ry="3.7" transform="rotate(-0.6 36.4 122.6)"/><ellipse cx="130.3" cy="106.2" rx="8.9" ry="3.7" transform="rotate(-0.6 130.3 106.2)"/><ellipse cx="129.3" cy="111.8" rx="8.9" ry="3.7" transform="rotate(-12.6 129.3 111.8)"/></g><g transform="translate(0 2.2)" fill="#d2d2d2" opacity="0.0"><path d="M41.7 123.4 Q82.5 114.3 124.2 113.9 L123.3 105.6 Q82.5 114.7 40.8 115.1 Z"/><ellipse cx="34.1" cy="117.4" rx="8.9" ry="3.7" transform="rotate(-12.6 34.1 117.4)"/><ellipse cx="36.4" cy="122.6" rx="8.9" ry="3.7" transform="rotate(-0.6 36.4 122.6)"/><ellipse cx="130.3" cy="106.2" rx="8.9" ry="3.7" transform="rotate(-0.6 130.3 106.2)"/><ellipse cx="129.3" cy="111.8" rx="8.9" ry="3.7" transform="rotate(-12.6 129.3 111.8)"/></g><rect x="22.5" y="96.5" width="120.0" height="36.0" fill="url(#nz)"/></g></g><g transform="translate(166 166)"><circle cx="85.5" cy="45" r="39" fill="#2ee02e"/><path d="M59 27 C 68 12, 90 4, 108 12 C 118 18, 124 30, 125 42 C 120 30, 108 20, 90 17 C 76 16, 66 20, 59 27 Z" fill="#5cf05c"/><path d="M47 58 C 54 72, 68 82, 85 84 C 100 84, 112 76, 118 66 L 114 69 L 98 67 L 82 69 L 67.5 76.7 L 63 72 L 50 60 Z" fill="#007d00"/><path d="M72 80 C 80 82, 92 82, 98 80 C 92 83.5, 80 84, 72 80 Z" fill="#3ee83e"/><path d="M59.2 27.5 C63.1 24.4 68.2 19.3 73.3 17.5 C78.4 15.7 84.4 16.0 90.0 16.7 C95.6 17.4 101.7 18.9 106.7 21.7 C111.7 24.5 117.0 28.9 120.0 33.3 C123.0 37.7 124.0 44.8 124.6 48.3 C125.1 51.8 125.0 50.7 123.3 54.2 C121.6 57.7 118.4 67.1 114.2 69.2 C110.0 71.3 103.7 66.7 98.3 66.7 C92.9 66.7 86.8 67.5 81.7 69.2 C76.6 70.9 70.6 76.2 67.5 76.7 C64.4 77.2 66.2 75.3 63.3 72.5 C60.4 69.7 52.8 63.8 50.0 60.0 C47.2 56.2 46.2 54.0 46.2 50.0 C46.2 46.0 47.8 39.5 50.0 35.8 C52.2 32.0 55.3 30.6 59.2 27.5 Z" fill="url(#hg)"/><path d="M59.2 27.5 C63.1 24.4 68.2 19.3 73.3 17.5 C78.4 15.7 84.4 16.0 90.0 16.7 C95.6 17.4 101.7 18.9 106.7 21.7 C111.7 24.5 117.0 28.9 120.0 33.3 C123.0 37.7 124.0 44.8 124.6 48.3 C125.1 51.8 125.0 50.7 123.3 54.2 C121.6 57.7 118.4 67.1 114.2 69.2 C110.0 71.3 103.7 66.7 98.3 66.7 C92.9 66.7 86.8 67.5 81.7 69.2 C76.6 70.9 70.6 76.2 67.5 76.7 C64.4 77.2 66.2 75.3 63.3 72.5 C60.4 69.7 52.8 63.8 50.0 60.0 C47.2 56.2 46.2 54.0 46.2 50.0 C46.2 46.0 47.8 39.5 50.0 35.8 C52.2 32.0 55.3 30.6 59.2 27.5 Z" fill="url(#dots)"/><path d="M85 21.3 C 92 23, 100 25, 104 27 C 107 29, 106 32, 102 30 C 96 28, 90 25, 85 21.3 Z" fill="none" stroke="#1a9a1a" stroke-width="1.2"/><ellipse cx="69.2" cy="45" rx="5.0" ry="8.2" fill="none" stroke="#000" stroke-width="3.2"/><path d="M72.4 39.5 L66.0 50.5" stroke="#000" stroke-width="1.6"/><ellipse cx="101.7" cy="45" rx="5.0" ry="8.2" fill="none" stroke="#000" stroke-width="3.2"/><path d="M104.9 39.5 L98.5 50.5" stroke="#000" stroke-width="1.6"/><path d="M33 128 C 33 120, 40 116, 56 113 C 70 118, 82 126, 92 134 C 80 137, 50 139, 40 137 C 35 135, 33 132, 33 128 Z" fill="#22e622"/><path d="M104 138 C 114 137, 128 139, 138 141 C 128 145, 112 146, 104 144 Z" fill="#22e622"/><path d="M56 114 L 90 130 L 94 134 L 80 128 Z" fill="#0a9a0a"/><clipPath id="bc3"><path d="M69.8 118.0 Q88.1 125.3 101.4 139.9 L106.2 133.0 Q87.9 125.7 74.6 111.1 Z"/><ellipse cx="68.0" cy="108.4" rx="8.9" ry="3.7" transform="rotate(28.6 68.0 108.4)"/><ellipse cx="66.3" cy="113.8" rx="8.9" ry="3.7" transform="rotate(40.6 66.3 113.8)"/><ellipse cx="111.1" cy="138.1" rx="8.9" ry="3.7" transform="rotate(40.6 111.1 138.1)"/><ellipse cx="106.6" cy="141.6" rx="8.9" ry="3.7" transform="rotate(28.6 106.6 141.6)"/></clipPath><g clip-path="url(#bc3)"><rect x="54.5" y="98.5" width="67.0" height="54.0" fill="#666"/><g transform="translate(0 -1.8)" fill="#a6a6a6"><path d="M69.8 118.0 Q88.1 125.3 101.4 139.9 L106.2 133.0 Q87.9 125.7 74.6 111.1 Z"/><ellipse cx="68.0" cy="108.4" rx="8.9" ry="3.7" transform="rotate(28.6 68.0 108.4)"/><ellipse cx="66.3" cy="113.8" rx="8.9" ry="3.7" transform="rotate(40.6 66.3 113.8)"/><ellipse cx="111.1" cy="138.1" rx="8.9" ry="3.7" transform="rotate(40.6 111.1 138.1)"/><ellipse cx="106.6" cy="141.6" rx="8.9" ry="3.7" transform="rotate(28.6 106.6 141.6)"/></g><g transform="translate(0 2.2)" fill="#d2d2d2" opacity="0.0"><path d="M69.8 118.0 Q88.1 125.3 101.4 139.9 L106.2 133.0 Q87.9 125.7 74.6 111.1 Z"/><ellipse cx="68.0" cy="108.4" rx="8.9" ry="3.7" transform="rotate(28.6 68.0 108.4)"/><ellipse cx="66.3" cy="113.8" rx="8.9" ry="3.7" transform="rotate(40.6 66.3 113.8)"/><ellipse cx="111.1" cy="138.1" rx="8.9" ry="3.7" transform="rotate(40.6 111.1 138.1)"/><ellipse cx="106.6" cy="141.6" rx="8.9" ry="3.7" transform="rotate(28.6 106.6 141.6)"/></g><rect x="54.5" y="98.5" width="67.0" height="54.0" fill="url(#dots)"/></g><clipPath id="bc4"><path d="M51.8 125.8 Q92.5 125.8 132.3 134.5 L133.2 126.2 Q92.5 126.2 52.7 117.5 Z"/><ellipse cx="45.7" cy="118.2" rx="8.9" ry="3.7" transform="rotate(0.1 45.7 118.2)"/><ellipse cx="46.8" cy="123.8" rx="8.9" ry="3.7" transform="rotate(12.1 46.8 123.8)"/><ellipse cx="139.9" cy="128.4" rx="8.9" ry="3.7" transform="rotate(12.1 139.9 128.4)"/><ellipse cx="137.7" cy="133.6" rx="8.9" ry="3.7" transform="rotate(0.1 137.7 133.6)"/></clipPath><g clip-path="url(#bc4)"><rect x="33.5" y="108.5" width="118.0" height="35.0" fill="#666"/><g transform="translate(0 -1.8)" fill="#a6a6a6"><path d="M51.8 125.8 Q92.5 125.8 132.3 134.5 L133.2 126.2 Q92.5 126.2 52.7 117.5 Z"/><ellipse cx="45.7" cy="118.2" rx="8.9" ry="3.7" transform="rotate(0.1 45.7 118.2)"/><ellipse cx="46.8" cy="123.8" rx="8.9" ry="3.7" transform="rotate(12.1 46.8 123.8)"/><ellipse cx="139.9" cy="128.4" rx="8.9" ry="3.7" transform="rotate(12.1 139.9 128.4)"/><ellipse cx="137.7" cy="133.6" rx="8.9" ry="3.7" transform="rotate(0.1 137.7 133.6)"/></g><g transform="translate(0 2.2)" fill="#d2d2d2" opacity="0.0"><path d="M51.8 125.8 Q92.5 125.8 132.3 134.5 L133.2 126.2 Q92.5 126.2 52.7 117.5 Z"/><ellipse cx="45.7" cy="118.2" rx="8.9" ry="3.7" transform="rotate(0.1 45.7 118.2)"/><ellipse cx="46.8" cy="123.8" rx="8.9" ry="3.7" transform="rotate(12.1 46.8 123.8)"/><ellipse cx="139.9" cy="128.4" rx="8.9" ry="3.7" transform="rotate(12.1 139.9 128.4)"/><ellipse cx="137.7" cy="133.6" rx="8.9" ry="3.7" transform="rotate(0.1 137.7 133.6)"/></g><rect x="33.5" y="108.5" width="118.0" height="35.0" fill="url(#dots)"/></g></g><g transform="translate(332 166)"><circle cx="85.8" cy="44.8" r="39" fill="#ff7652"/><path d="M47 52 C 50 68, 64 82, 84 84 C 102 84, 116 74, 122 58 L 111.7 73.3 L 101.7 71.7 L 98.3 60 L 94.2 60 L 92.5 74.2 L 81.7 78.3 L 70 76.7 L 64.2 66.7 L 50.8 57.5 Z" fill="#581200"/><path d="M86 82 C 90 78, 94 75, 97 76 C 96 80, 92 83, 86 83 Z" fill="#ff7652"/><path d="M49.2 33.3 C51.4 28.7 56.5 22.4 60.8 19.2 C65.1 16.0 70.1 15.2 75.0 14.2 C79.9 13.2 84.7 12.8 90.0 13.3 C95.3 13.9 101.8 14.8 106.7 17.5 C111.6 20.1 116.2 24.3 119.2 29.2 C122.2 34.1 124.0 42.1 124.6 46.7 C125.1 51.3 124.7 52.3 122.5 56.7 C120.3 61.1 115.2 70.8 111.7 73.3 C108.2 75.8 103.9 73.9 101.7 71.7 C99.5 69.5 99.5 62.0 98.3 60.0 C97.0 58.0 95.2 57.6 94.2 60.0 C93.2 62.4 94.6 71.2 92.5 74.2 C90.4 77.2 85.5 77.9 81.7 78.3 C78.0 78.7 72.9 78.6 70.0 76.7 C67.1 74.8 67.4 69.9 64.2 66.7 C61.0 63.5 53.6 60.8 50.8 57.5 C48.0 54.2 47.8 50.7 47.5 46.7 C47.2 42.7 47.0 37.9 49.2 33.3 Z" fill="url(#hg)"/><path d="M49.2 33.3 C51.4 28.7 56.5 22.4 60.8 19.2 C65.1 16.0 70.1 15.2 75.0 14.2 C79.9 13.2 84.7 12.8 90.0 13.3 C95.3 13.9 101.8 14.8 106.7 17.5 C111.6 20.1 116.2 24.3 119.2 29.2 C122.2 34.1 124.0 42.1 124.6 46.7 C125.1 51.3 124.7 52.3 122.5 56.7 C120.3 61.1 115.2 70.8 111.7 73.3 C108.2 75.8 103.9 73.9 101.7 71.7 C99.5 69.5 99.5 62.0 98.3 60.0 C97.0 58.0 95.2 57.6 94.2 60.0 C93.2 62.4 94.6 71.2 92.5 74.2 C90.4 77.2 85.5 77.9 81.7 78.3 C78.0 78.7 72.9 78.6 70.0 76.7 C67.1 74.8 67.4 69.9 64.2 66.7 C61.0 63.5 53.6 60.8 50.8 57.5 C48.0 54.2 47.8 50.7 47.5 46.7 C47.2 42.7 47.0 37.9 49.2 33.3 Z" fill="url(#lines)"/><path d="M63.3 31.2 C 68 28, 72 27, 74 29 C 76 31, 75 33, 75 33 C 76 26, 76 20, 74 15.8" fill="none" stroke="#6a1000" stroke-width="1.6"/><ellipse cx="69.6" cy="45" rx="5.0" ry="8.2" fill="none" stroke="#000" stroke-width="3.2"/><path d="M72.8 39.5 L66.39999999999999 50.5" stroke="#000" stroke-width="1.6"/><ellipse cx="102.1" cy="45" rx="5.0" ry="8.2" fill="none" stroke="#000" stroke-width="3.2"/><path d="M105.3 39.5 L98.89999999999999 50.5" stroke="#000" stroke-width="1.6"/><path d="M30 130 C 34 124, 60 122, 90 124 L 91 126 C 90 132, 92 138, 100 142 C 80 143, 50 140, 30 130 Z" fill="#ff7552"/><path d="M77 118 C 90 116, 120 116, 140 119 C 148 122, 150 128, 146 131 C 130 131, 100 128, 90 124 C 86 122, 80 121, 77 118 Z" fill="#ff7552"/><clipPath id="bc5"><path d="M52.7 122.5 Q89.0 123.1 124.2 132.3 L125.3 124.0 Q89.0 123.4 53.8 114.2 Z"/><ellipse cx="46.7" cy="114.7" rx="8.9" ry="3.7" transform="rotate(1.8 46.7 114.7)"/><ellipse cx="47.7" cy="120.3" rx="8.9" ry="3.7" transform="rotate(13.8 47.7 120.3)"/><ellipse cx="132.0" cy="126.4" rx="8.9" ry="3.7" transform="rotate(13.8 132.0 126.4)"/><ellipse cx="129.6" cy="131.5" rx="8.9" ry="3.7" transform="rotate(1.8 129.6 131.5)"/></clipPath><g clip-path="url(#bc5)"><rect x="34.5" y="105.0" width="109.0" height="36.5" fill="#666"/><g transform="translate(0 -1.8)" fill="#a6a6a6"><path d="M52.7 122.5 Q89.0 123.1 124.2 132.3 L125.3 124.0 Q89.0 123.4 53.8 114.2 Z"/><ellipse cx="46.7" cy="114.7" rx="8.9" ry="3.7" transform="rotate(1.8 46.7 114.7)"/><ellipse cx="47.7" cy="120.3" rx="8.9" ry="3.7" transform="rotate(13.8 47.7 120.3)"/><ellipse cx="132.0" cy="126.4" rx="8.9" ry="3.7" transform="rotate(13.8 132.0 126.4)"/><ellipse cx="129.6" cy="131.5" rx="8.9" ry="3.7" transform="rotate(1.8 129.6 131.5)"/></g><g transform="translate(0 2.2)" fill="#d2d2d2" opacity="0.0"><path d="M52.7 122.5 Q89.0 123.1 124.2 132.3 L125.3 124.0 Q89.0 123.4 53.8 114.2 Z"/><ellipse cx="46.7" cy="114.7" rx="8.9" ry="3.7" transform="rotate(1.8 46.7 114.7)"/><ellipse cx="47.7" cy="120.3" rx="8.9" ry="3.7" transform="rotate(13.8 47.7 120.3)"/><ellipse cx="132.0" cy="126.4" rx="8.9" ry="3.7" transform="rotate(13.8 132.0 126.4)"/><ellipse cx="129.6" cy="131.5" rx="8.9" ry="3.7" transform="rotate(1.8 129.6 131.5)"/></g><rect x="34.5" y="105.0" width="109.0" height="36.5" fill="url(#lines)"/></g><clipPath id="bc6"><path d="M44.6 131.7 Q85.0 123.8 126.1 124.7 L125.4 116.3 Q85.0 124.2 43.9 123.3 Z"/><ellipse cx="37.1" cy="125.4" rx="8.9" ry="3.7" transform="rotate(-10.9 37.1 125.4)"/><ellipse cx="39.3" cy="130.6" rx="8.9" ry="3.7" transform="rotate(1.1 39.3 130.6)"/><ellipse cx="132.4" cy="117.3" rx="8.9" ry="3.7" transform="rotate(1.1 132.4 117.3)"/><ellipse cx="131.2" cy="122.8" rx="8.9" ry="3.7" transform="rotate(-10.9 131.2 122.8)"/></clipPath><g clip-path="url(#bc6)"><rect x="25.5" y="107.5" width="119.0" height="33.0" fill="#666"/><g transform="translate(0 -1.8)" fill="#a6a6a6"><path d="M44.6 131.7 Q85.0 123.8 126.1 124.7 L125.4 116.3 Q85.0 124.2 43.9 123.3 Z"/><ellipse cx="37.1" cy="125.4" rx="8.9" ry="3.7" transform="rotate(-10.9 37.1 125.4)"/><ellipse cx="39.3" cy="130.6" rx="8.9" ry="3.7" transform="rotate(1.1 39.3 130.6)"/><ellipse cx="132.4" cy="117.3" rx="8.9" ry="3.7" transform="rotate(1.1 132.4 117.3)"/><ellipse cx="131.2" cy="122.8" rx="8.9" ry="3.7" transform="rotate(-10.9 131.2 122.8)"/></g><g transform="translate(0 2.2)" fill="#d2d2d2" opacity="0.0"><path d="M44.6 131.7 Q85.0 123.8 126.1 124.7 L125.4 116.3 Q85.0 124.2 43.9 123.3 Z"/><ellipse cx="37.1" cy="125.4" rx="8.9" ry="3.7" transform="rotate(-10.9 37.1 125.4)"/><ellipse cx="39.3" cy="130.6" rx="8.9" ry="3.7" transform="rotate(1.1 39.3 130.6)"/><ellipse cx="132.4" cy="117.3" rx="8.9" ry="3.7" transform="rotate(1.1 132.4 117.3)"/><ellipse cx="131.2" cy="122.8" rx="8.9" ry="3.7" transform="rotate(-10.9 131.2 122.8)"/></g><rect x="25.5" y="107.5" width="119.0" height="33.0" fill="url(#lines)"/></g></g><g transform="translate(498 166)"><circle cx="86" cy="50" r="39" fill="#f074f0"/><path d="M47 52 C 48 70, 62 86, 84 89 C 90 86, 94 82, 98 82 L 93.3 80 L 70.8 80 L 65 70.8 L 50 58.3 Z" fill="#600060"/><path d="M48.3 43.3 C49.1 38.2 52.2 31.4 55.0 27.5 C57.8 23.6 61.7 21.9 65.0 20.0 C68.3 18.1 70.8 17.1 75.0 16.2 C79.2 15.3 84.7 14.3 90.0 14.6 C95.3 14.9 101.8 15.9 106.7 18.3 C111.6 20.7 116.3 25.3 119.2 29.2 C122.1 33.1 123.5 36.9 124.2 41.7 C124.9 46.6 124.8 53.7 123.3 58.3 C121.8 62.9 118.0 66.1 115.0 69.2 C112.0 72.3 107.2 73.7 105.0 76.7 C102.8 79.8 102.8 86.5 101.7 87.5 C100.6 88.5 99.7 83.8 98.3 82.5 C96.9 81.2 97.9 80.4 93.3 80.0 C88.7 79.6 75.5 81.5 70.8 80.0 C66.1 78.5 68.5 74.4 65.0 70.8 C61.5 67.2 52.8 62.9 50.0 58.3 C47.2 53.7 47.5 48.4 48.3 43.3 Z" fill="url(#hg)"/><path d="M48.3 43.3 C49.1 38.2 52.2 31.4 55.0 27.5 C57.8 23.6 61.7 21.9 65.0 20.0 C68.3 18.1 70.8 17.1 75.0 16.2 C79.2 15.3 84.7 14.3 90.0 14.6 C95.3 14.9 101.8 15.9 106.7 18.3 C111.6 20.7 116.3 25.3 119.2 29.2 C122.1 33.1 123.5 36.9 124.2 41.7 C124.9 46.6 124.8 53.7 123.3 58.3 C121.8 62.9 118.0 66.1 115.0 69.2 C112.0 72.3 107.2 73.7 105.0 76.7 C102.8 79.8 102.8 86.5 101.7 87.5 C100.6 88.5 99.7 83.8 98.3 82.5 C96.9 81.2 97.9 80.4 93.3 80.0 C88.7 79.6 75.5 81.5 70.8 80.0 C66.1 78.5 68.5 74.4 65.0 70.8 C61.5 67.2 52.8 62.9 50.0 58.3 C47.2 53.7 47.5 48.4 48.3 43.3 Z" fill="url(#diag)"/><path d="M74.2 17.5 L 81.7 39.2 L 81.7 20.8 Z" fill="#a020a0"/><path d="M82 21 L 88 30 L 84 40 Z" fill="#777" opacity="0.5"/><ellipse cx="70" cy="45" rx="5.0" ry="8.2" fill="none" stroke="#000" stroke-width="3.2"/><path d="M73.2 39.5 L66.8 50.5" stroke="#000" stroke-width="1.6"/><ellipse cx="102" cy="45" rx="5.0" ry="8.2" fill="none" stroke="#000" stroke-width="3.2"/><path d="M105.2 39.5 L98.8 50.5" stroke="#000" stroke-width="1.6"/><path d="M27 125 C 28 116, 44 113, 70 113 C 100 113, 130 116, 144 123 C 146 130, 130 136, 100 136 C 70 136, 50 130, 36 130 C 30 130, 27 128, 27 125 Z" fill="#f474f0"/><path d="M106 130 C 116 133, 128 134, 138 133 L 112 135 Z" fill="#8a008a"/><clipPath id="bc7"><path d="M64.0 117.8 Q89.0 119.3 112.0 129.4 L114.0 121.2 Q89.0 119.7 66.0 109.6 Z"/><ellipse cx="58.0" cy="109.1" rx="10.2" ry="3.8" transform="rotate(7.6 58.0 109.1)"/><ellipse cx="58.5" cy="115.0" rx="10.2" ry="3.8" transform="rotate(19.6 58.5 115.0)"/><ellipse cx="121.4" cy="124.5" rx="10.2" ry="3.8" transform="rotate(19.6 121.4 124.5)"/><ellipse cx="118.2" cy="129.4" rx="10.2" ry="3.8" transform="rotate(7.6 118.2 129.4)"/></clipPath><g clip-path="url(#bc7)"><rect x="44.0" y="98.0" width="90.0" height="43.0" fill="#666"/><g transform="translate(0 -1.8)" fill="#a6a6a6"><path d="M64.0 117.8 Q89.0 119.3 112.0 129.4 L114.0 121.2 Q89.0 119.7 66.0 109.6 Z"/><ellipse cx="58.0" cy="109.1" rx="10.2" ry="3.8" transform="rotate(7.6 58.0 109.1)"/><ellipse cx="58.5" cy="115.0" rx="10.2" ry="3.8" transform="rotate(19.6 58.5 115.0)"/><ellipse cx="121.4" cy="124.5" rx="10.2" ry="3.8" transform="rotate(19.6 121.4 124.5)"/><ellipse cx="118.2" cy="129.4" rx="10.2" ry="3.8" transform="rotate(7.6 118.2 129.4)"/></g><g transform="translate(0 2.2)" fill="#d2d2d2" opacity="0.0"><path d="M64.0 117.8 Q89.0 119.3 112.0 129.4 L114.0 121.2 Q89.0 119.7 66.0 109.6 Z"/><ellipse cx="58.0" cy="109.1" rx="10.2" ry="3.8" transform="rotate(7.6 58.0 109.1)"/><ellipse cx="58.5" cy="115.0" rx="10.2" ry="3.8" transform="rotate(19.6 58.5 115.0)"/><ellipse cx="121.4" cy="124.5" rx="10.2" ry="3.8" transform="rotate(19.6 121.4 124.5)"/><ellipse cx="118.2" cy="129.4" rx="10.2" ry="3.8" transform="rotate(7.6 118.2 129.4)"/></g><rect x="44.0" y="98.0" width="90.0" height="43.0" fill="url(#diag)"/></g><clipPath id="bc8"><path d="M94.2 111.8 Q90.1 120.7 80.6 122.6 L85.8 129.2 Q89.9 120.3 99.4 118.4 Z"/><ellipse cx="104.2" cy="112.8" rx="9.3" ry="3.8" transform="rotate(135.6 104.2 112.8)"/><ellipse cx="99.4" cy="109.5" rx="9.3" ry="3.8" transform="rotate(147.6 99.4 109.5)"/><ellipse cx="79.2" cy="132.6" rx="9.3" ry="3.8" transform="rotate(147.6 79.2 132.6)"/><ellipse cx="77.1" cy="127.1" rx="9.3" ry="3.8" transform="rotate(135.6 77.1 127.1)"/></clipPath><g clip-path="url(#bc8)"><rect x="65.0" y="98.0" width="50.0" height="45.0" fill="#666"/><g transform="translate(0 -1.8)" fill="#a6a6a6"><path d="M94.2 111.8 Q90.1 120.7 80.6 122.6 L85.8 129.2 Q89.9 120.3 99.4 118.4 Z"/><ellipse cx="104.2" cy="112.8" rx="9.3" ry="3.8" transform="rotate(135.6 104.2 112.8)"/><ellipse cx="99.4" cy="109.5" rx="9.3" ry="3.8" transform="rotate(147.6 99.4 109.5)"/><ellipse cx="79.2" cy="132.6" rx="9.3" ry="3.8" transform="rotate(147.6 79.2 132.6)"/><ellipse cx="77.1" cy="127.1" rx="9.3" ry="3.8" transform="rotate(135.6 77.1 127.1)"/></g><g transform="translate(0 2.2)" fill="#d2d2d2" opacity="0.0"><path d="M94.2 111.8 Q90.1 120.7 80.6 122.6 L85.8 129.2 Q89.9 120.3 99.4 118.4 Z"/><ellipse cx="104.2" cy="112.8" rx="9.3" ry="3.8" transform="rotate(135.6 104.2 112.8)"/><ellipse cx="99.4" cy="109.5" rx="9.3" ry="3.8" transform="rotate(147.6 99.4 109.5)"/><ellipse cx="79.2" cy="132.6" rx="9.3" ry="3.8" transform="rotate(147.6 79.2 132.6)"/><ellipse cx="77.1" cy="127.1" rx="9.3" ry="3.8" transform="rotate(135.6 77.1 127.1)"/></g><rect x="65.0" y="98.0" width="50.0" height="45.0" fill="url(#diag)"/></g></g><g transform="translate(664 166)"><ellipse cx="87" cy="41.5" rx="40" ry="36" transform="rotate(-50 87 41.5)" fill="#f2447c"/><path d="M49 56 C 56 70, 70 80, 84 80 C 98 80, 106 72, 110 64 L 107.5 63.3 L 86.7 70.8 L 65 68.3 L 50.8 56.7 Z" fill="#480018"/><path d="M47.5 46.7 C47.8 42.8 49.9 37.6 52.5 33.3 C55.1 29.0 59.1 24.0 63.3 20.8 C67.5 17.6 73.0 15.5 77.5 14.2 C82.0 12.9 85.4 12.2 90.0 12.9 C94.6 13.6 100.4 15.6 105.0 18.3 C109.6 21.0 114.2 25.0 117.5 29.2 C120.8 33.4 123.9 39.5 125.0 43.3 C126.1 47.0 125.5 48.5 124.2 51.7 C123.0 54.9 119.3 62.2 117.5 62.5 C115.7 62.8 114.5 54.0 113.3 53.3 C112.0 52.6 111.0 56.6 110.0 58.3 C109.0 60.0 111.4 61.2 107.5 63.3 C103.6 65.4 93.8 70.0 86.7 70.8 C79.6 71.6 71.0 70.6 65.0 68.3 C59.0 66.0 53.7 60.3 50.8 56.7 C47.9 53.1 47.2 50.6 47.5 46.7 Z" fill="url(#hg2)"/><path d="M47.5 46.7 C47.8 42.8 49.9 37.6 52.5 33.3 C55.1 29.0 59.1 24.0 63.3 20.8 C67.5 17.6 73.0 15.5 77.5 14.2 C82.0 12.9 85.4 12.2 90.0 12.9 C94.6 13.6 100.4 15.6 105.0 18.3 C109.6 21.0 114.2 25.0 117.5 29.2 C120.8 33.4 123.9 39.5 125.0 43.3 C126.1 47.0 125.5 48.5 124.2 51.7 C123.0 54.9 119.3 62.2 117.5 62.5 C115.7 62.8 114.5 54.0 113.3 53.3 C112.0 52.6 111.0 56.6 110.0 58.3 C109.0 60.0 111.4 61.2 107.5 63.3 C103.6 65.4 93.8 70.0 86.7 70.8 C79.6 71.6 71.0 70.6 65.0 68.3 C59.0 66.0 53.7 60.3 50.8 56.7 C47.9 53.1 47.2 50.6 47.5 46.7 Z" fill="url(#nz2)"/><path d="M48.3 43.3 L 73.3 31.2 L 73.5 33 L 49 45 Z" fill="#e2306a"/><ellipse cx="70.4" cy="45" rx="5.0" ry="8.2" fill="none" stroke="#000" stroke-width="3.2"/><path d="M73.60000000000001 39.5 L67.2 50.5" stroke="#000" stroke-width="1.6"/><ellipse cx="102.9" cy="45" rx="5.0" ry="8.2" fill="none" stroke="#000" stroke-width="3.2"/><path d="M106.10000000000001 39.5 L99.7 50.5" stroke="#000" stroke-width="1.6"/><path d="M27 122 C 30 118, 60 118, 96 120 C 92 126, 92 132, 96 136 L 100 137 C 80 138, 60 138, 40 132 C 32 129, 27 126, 27 122 Z" fill="#f2447c"/><path d="M77 106 C 95 104, 115 104, 132 105 L 112 112 C 100 116, 94 116, 92 118 C 90 112, 86 110, 77 106 Z" fill="#f2447c"/><clipPath id="bc9"><path d="M45.2 121.3 Q86.0 117.3 126.8 122.1 L126.8 113.7 Q86.0 117.7 45.2 112.9 Z"/><ellipse cx="37.3" cy="114.2" rx="10.2" ry="3.8" transform="rotate(-5.4 37.3 114.2)"/><ellipse cx="39.2" cy="119.8" rx="10.2" ry="3.8" transform="rotate(6.6 39.2 119.8)"/><ellipse cx="134.7" cy="115.2" rx="10.2" ry="3.8" transform="rotate(6.6 134.7 115.2)"/><ellipse cx="132.8" cy="120.8" rx="10.2" ry="3.8" transform="rotate(-5.4 132.8 120.8)"/></clipPath><g clip-path="url(#bc9)"><rect x="24.0" y="103.0" width="124.0" height="29.0" fill="#666"/><g transform="translate(0 -1.8)" fill="#a6a6a6"><path d="M45.2 121.3 Q86.0 117.3 126.8 122.1 L126.8 113.7 Q86.0 117.7 45.2 112.9 Z"/><ellipse cx="37.3" cy="114.2" rx="10.2" ry="3.8" transform="rotate(-5.4 37.3 114.2)"/><ellipse cx="39.2" cy="119.8" rx="10.2" ry="3.8" transform="rotate(6.6 39.2 119.8)"/><ellipse cx="134.7" cy="115.2" rx="10.2" ry="3.8" transform="rotate(6.6 134.7 115.2)"/><ellipse cx="132.8" cy="120.8" rx="10.2" ry="3.8" transform="rotate(-5.4 132.8 120.8)"/></g><g transform="translate(0 2.2)" fill="#d2d2d2" opacity="0.0"><path d="M45.2 121.3 Q86.0 117.3 126.8 122.1 L126.8 113.7 Q86.0 117.7 45.2 112.9 Z"/><ellipse cx="37.3" cy="114.2" rx="10.2" ry="3.8" transform="rotate(-5.4 37.3 114.2)"/><ellipse cx="39.2" cy="119.8" rx="10.2" ry="3.8" transform="rotate(6.6 39.2 119.8)"/><ellipse cx="134.7" cy="115.2" rx="10.2" ry="3.8" transform="rotate(6.6 134.7 115.2)"/><ellipse cx="132.8" cy="120.8" rx="10.2" ry="3.8" transform="rotate(-5.4 132.8 120.8)"/></g><rect x="24.0" y="103.0" width="124.0" height="29.0" fill="url(#nz2)"/></g><clipPath id="bc10"><path d="M61.6 129.8 Q86.9 116.3 115.1 111.1 L112.4 103.2 Q87.1 116.7 58.9 121.9 Z"/><ellipse cx="52.5" cy="125.6" rx="9.3" ry="3.8" transform="rotate(-25.2 52.5 125.6)"/><ellipse cx="56.0" cy="130.3" rx="9.3" ry="3.8" transform="rotate(-13.2 56.0 130.3)"/><ellipse cx="119.7" cy="102.1" rx="9.3" ry="3.8" transform="rotate(-13.2 119.7 102.1)"/><ellipse cx="119.9" cy="108.0" rx="9.3" ry="3.8" transform="rotate(-25.2 119.9 108.0)"/></clipPath><g clip-path="url(#bc10)"><rect x="41.0" y="92.0" width="92.0" height="49.0" fill="#666"/><g transform="translate(0 -1.8)" fill="#a6a6a6"><path d="M61.6 129.8 Q86.9 116.3 115.1 111.1 L112.4 103.2 Q87.1 116.7 58.9 121.9 Z"/><ellipse cx="52.5" cy="125.6" rx="9.3" ry="3.8" transform="rotate(-25.2 52.5 125.6)"/><ellipse cx="56.0" cy="130.3" rx="9.3" ry="3.8" transform="rotate(-13.2 56.0 130.3)"/><ellipse cx="119.7" cy="102.1" rx="9.3" ry="3.8" transform="rotate(-13.2 119.7 102.1)"/><ellipse cx="119.9" cy="108.0" rx="9.3" ry="3.8" transform="rotate(-25.2 119.9 108.0)"/></g><g transform="translate(0 2.2)" fill="#d2d2d2" opacity="0.0"><path d="M61.6 129.8 Q86.9 116.3 115.1 111.1 L112.4 103.2 Q87.1 116.7 58.9 121.9 Z"/><ellipse cx="52.5" cy="125.6" rx="9.3" ry="3.8" transform="rotate(-25.2 52.5 125.6)"/><ellipse cx="56.0" cy="130.3" rx="9.3" ry="3.8" transform="rotate(-13.2 56.0 130.3)"/><ellipse cx="119.7" cy="102.1" rx="9.3" ry="3.8" transform="rotate(-13.2 119.7 102.1)"/><ellipse cx="119.9" cy="108.0" rx="9.3" ry="3.8" transform="rotate(-25.2 119.9 108.0)"/></g><rect x="41.0" y="92.0" width="92.0" height="49.0" fill="url(#nz2)"/></g></g><g transform="translate(0 332)"><ellipse cx="85" cy="42" rx="38" ry="34" fill="#10e8f0"/><path d="M47 52 C 50 66, 64 76, 80 76 C 96 76, 106 70, 112 66 L 104.2 63.3 L 98.3 60.8 L 91.7 71.7 L 85 73.3 L 75.8 61.7 L 71.7 68.3 L 61.7 69.2 L 50 60.8 Z" fill="#008088"/><path d="M46.7 51.7 C46.7 47.4 48.1 39.5 50.0 35.0 C51.9 30.6 55.1 28.1 58.3 25.0 C61.5 21.9 64.6 18.5 69.2 16.7 C73.8 14.9 80.2 13.9 85.8 14.2 C91.3 14.5 97.6 16.1 102.5 18.3 C107.4 20.5 111.7 23.9 115.0 27.5 C118.3 31.1 121.1 36.0 122.5 40.0 C123.9 44.0 124.8 47.0 123.3 51.7 C121.8 56.4 116.5 66.4 113.3 68.3 C110.1 70.2 106.7 64.5 104.2 63.3 C101.7 62.0 100.4 59.4 98.3 60.8 C96.2 62.2 93.9 69.6 91.7 71.7 C89.5 73.8 87.7 75.0 85.0 73.3 C82.3 71.6 78.0 62.5 75.8 61.7 C73.6 60.9 74.0 67.0 71.7 68.3 C69.4 69.5 65.3 70.5 61.7 69.2 C58.1 68.0 52.5 63.7 50.0 60.8 C47.5 57.9 46.7 56.0 46.7 51.7 Z" fill="url(#hg)"/><path d="M46.7 51.7 C46.7 47.4 48.1 39.5 50.0 35.0 C51.9 30.6 55.1 28.1 58.3 25.0 C61.5 21.9 64.6 18.5 69.2 16.7 C73.8 14.9 80.2 13.9 85.8 14.2 C91.3 14.5 97.6 16.1 102.5 18.3 C107.4 20.5 111.7 23.9 115.0 27.5 C118.3 31.1 121.1 36.0 122.5 40.0 C123.9 44.0 124.8 47.0 123.3 51.7 C121.8 56.4 116.5 66.4 113.3 68.3 C110.1 70.2 106.7 64.5 104.2 63.3 C101.7 62.0 100.4 59.4 98.3 60.8 C96.2 62.2 93.9 69.6 91.7 71.7 C89.5 73.8 87.7 75.0 85.0 73.3 C82.3 71.6 78.0 62.5 75.8 61.7 C73.6 60.9 74.0 67.0 71.7 68.3 C69.4 69.5 65.3 70.5 61.7 69.2 C58.1 68.0 52.5 63.7 50.0 60.8 C47.5 57.9 46.7 56.0 46.7 51.7 Z" fill="url(#lines)"/><path d="M97 19 C 92 24, 95 30, 101 28.5 C 105 27, 104 21, 99 22" fill="none" stroke="#00a8b0" stroke-width="2.5"/><ellipse cx="68.75" cy="45.4" rx="5.0" ry="8.2" fill="none" stroke="#000" stroke-width="3.2"/><path d="M71.95 39.9 L65.55 50.9" stroke="#000" stroke-width="1.6"/><ellipse cx="101.25" cy="45.4" rx="5.0" ry="8.2" fill="none" stroke="#000" stroke-width="3.2"/><path d="M104.45 39.9 L98.05 50.9" stroke="#000" stroke-width="1.6"/><ellipse cx="87" cy="121" rx="58.6" ry="16" fill="#30e8ee"/><path d="M91 121 C 108 118, 130 118, 146 119 L 146 124 C 130 124, 108 124, 91 121 Z" fill="#fff"/><clipPath id="bc11"><path d="M82.8 108.7 Q84.7 116.1 78.4 120.3 L86.2 123.3 Q84.3 115.9 90.6 111.7 Z"/><ellipse cx="91.8" cy="104.4" rx="9.3" ry="3.8" transform="rotate(104.6 91.8 104.4)"/><ellipse cx="86.0" cy="104.1" rx="9.3" ry="3.8" transform="rotate(116.6 86.0 104.1)"/><ellipse cx="82.4" cy="129.6" rx="9.3" ry="3.8" transform="rotate(116.6 82.4 129.6)"/><ellipse cx="77.8" cy="126.0" rx="9.3" ry="3.8" transform="rotate(104.6 77.8 126.0)"/></clipPath><g clip-path="url(#bc11)"><rect x="67.0" y="91.0" width="35.0" height="50.0" fill="#666"/><g transform="translate(0 -1.8)" fill="#a6a6a6"><path d="M82.8 108.7 Q84.7 116.1 78.4 120.3 L86.2 123.3 Q84.3 115.9 90.6 111.7 Z"/><ellipse cx="91.8" cy="104.4" rx="9.3" ry="3.8" transform="rotate(104.6 91.8 104.4)"/><ellipse cx="86.0" cy="104.1" rx="9.3" ry="3.8" transform="rotate(116.6 86.0 104.1)"/><ellipse cx="82.4" cy="129.6" rx="9.3" ry="3.8" transform="rotate(116.6 82.4 129.6)"/><ellipse cx="77.8" cy="126.0" rx="9.3" ry="3.8" transform="rotate(104.6 77.8 126.0)"/></g><g transform="translate(0 2.2)" fill="#d2d2d2" opacity="0.0"><path d="M82.8 108.7 Q84.7 116.1 78.4 120.3 L86.2 123.3 Q84.3 115.9 90.6 111.7 Z"/><ellipse cx="91.8" cy="104.4" rx="9.3" ry="3.8" transform="rotate(104.6 91.8 104.4)"/><ellipse cx="86.0" cy="104.1" rx="9.3" ry="3.8" transform="rotate(116.6 86.0 104.1)"/><ellipse cx="82.4" cy="129.6" rx="9.3" ry="3.8" transform="rotate(116.6 82.4 129.6)"/><ellipse cx="77.8" cy="126.0" rx="9.3" ry="3.8" transform="rotate(104.6 77.8 126.0)"/></g><rect x="67.0" y="91.0" width="35.0" height="50.0" fill="url(#lines)"/></g><clipPath id="bc12"><path d="M50.6 126.2 Q85.5 116.3 121.7 115.1 L120.4 106.8 Q85.5 116.7 49.3 117.9 Z"/><ellipse cx="43.0" cy="120.4" rx="8.5" ry="3.7" transform="rotate(-14.9 43.0 120.4)"/><ellipse cx="45.4" cy="125.5" rx="8.5" ry="3.7" transform="rotate(-2.9 45.4 125.5)"/><ellipse cx="127.2" cy="107.2" rx="8.5" ry="3.7" transform="rotate(-2.9 127.2 107.2)"/><ellipse cx="126.4" cy="112.8" rx="8.5" ry="3.7" transform="rotate(-14.9 126.4 112.8)"/></clipPath><g clip-path="url(#bc12)"><rect x="32.0" y="98.0" width="107.0" height="37.0" fill="#666"/><g transform="translate(0 -1.8)" fill="#a6a6a6"><path d="M50.6 126.2 Q85.5 116.3 121.7 115.1 L120.4 106.8 Q85.5 116.7 49.3 117.9 Z"/><ellipse cx="43.0" cy="120.4" rx="8.5" ry="3.7" transform="rotate(-14.9 43.0 120.4)"/><ellipse cx="45.4" cy="125.5" rx="8.5" ry="3.7" transform="rotate(-2.9 45.4 125.5)"/><ellipse cx="127.2" cy="107.2" rx="8.5" ry="3.7" transform="rotate(-2.9 127.2 107.2)"/><ellipse cx="126.4" cy="112.8" rx="8.5" ry="3.7" transform="rotate(-14.9 126.4 112.8)"/></g><g transform="translate(0 2.2)" fill="#d2d2d2" opacity="0.0"><path d="M50.6 126.2 Q85.5 116.3 121.7 115.1 L120.4 106.8 Q85.5 116.7 49.3 117.9 Z"/><ellipse cx="43.0" cy="120.4" rx="8.5" ry="3.7" transform="rotate(-14.9 43.0 120.4)"/><ellipse cx="45.4" cy="125.5" rx="8.5" ry="3.7" transform="rotate(-2.9 45.4 125.5)"/><ellipse cx="127.2" cy="107.2" rx="8.5" ry="3.7" transform="rotate(-2.9 127.2 107.2)"/><ellipse cx="126.4" cy="112.8" rx="8.5" ry="3.7" transform="rotate(-14.9 126.4 112.8)"/></g><rect x="32.0" y="98.0" width="107.0" height="37.0" fill="url(#lines)"/></g></g><g transform="translate(166 0)"><path d="M79 60 Q80.5 105.0 80 150" fill="none" stroke="#f8c490" stroke-width="0.935"/><path d="M80.8 60 Q82.3 105.0 81.8 150" fill="none" stroke="#f8c490" stroke-width="0.8250000000000001"/><path d="M78.0 100.0 Q70.7 71.9 39.0 78.0 Q50.2 108.3 78.0 100.0 Z" fill="none" stroke="#f8c490" stroke-width="0.8"/><path d="M78.0 100.0 Q60.5 90.1 39.0 78.0" fill="none" stroke="#f8c490" stroke-width="0.7200000000000001"/><path d="M69.4 95.2 L68.3 88.0" fill="none" stroke="#f8c490" stroke-width="0.6000000000000001"/><path d="M67.9 94.3 L61.8 96.8" fill="none" stroke="#f8c490" stroke-width="0.5599999999999999"/><path d="M62.1 91.1 L54.3 95.9" fill="none" stroke="#f8c490" stroke-width="0.6000000000000001"/><path d="M60.6 90.2 L60.6 81.9" fill="none" stroke="#f8c490" stroke-width="0.5599999999999999"/><path d="M54.9 86.9 L54.9 77.7" fill="none" stroke="#f8c490" stroke-width="0.6000000000000001"/><path d="M53.3 86.1 L46.2 90.4" fill="none" stroke="#f8c490" stroke-width="0.5599999999999999"/><path d="M47.6 82.8 L40.9 85.6" fill="none" stroke="#f8c490" stroke-width="0.6000000000000001"/><path d="M46.0 82.0 L45.0 75.5" fill="none" stroke="#f8c490" stroke-width="0.5599999999999999"/><path d="M80.0 82.0 Q106.4 88.4 117.0 60.0 Q86.9 55.8 80.0 82.0 Z" fill="none" stroke="#f8c490" stroke-width="0.8"/><path d="M80.0 82.0 Q96.7 72.1 117.0 60.0" fill="none" stroke="#f8c490" stroke-width="0.7200000000000001"/><path d="M88.1 77.2 L94.5 79.4" fill="none" stroke="#f8c490" stroke-width="0.6000000000000001"/><path d="M89.6 76.3 L90.6 70.3" fill="none" stroke="#f8c490" stroke-width="0.5599999999999999"/><path d="M95.0 73.1 L95.0 64.5" fill="none" stroke="#f8c490" stroke-width="0.6000000000000001"/><path d="M96.5 72.2 L103.2 75.9" fill="none" stroke="#f8c490" stroke-width="0.5599999999999999"/><path d="M102.0 68.9 L109.4 73.1" fill="none" stroke="#f8c490" stroke-width="0.6000000000000001"/><path d="M103.4 68.1 L103.4 60.4" fill="none" stroke="#f8c490" stroke-width="0.5599999999999999"/><path d="M108.9 64.8 L109.9 58.2" fill="none" stroke="#f8c490" stroke-width="0.6000000000000001"/><path d="M110.3 64.0 L116.1 66.0" fill="none" stroke="#f8c490" stroke-width="0.5599999999999999"/><path d="M75.0 127.0 Q50.8 108.8 22.0 128.0 Q51.7 158.1 75.0 127.0 Z" fill="none" stroke="#f8c490" stroke-width="0.8"/><path d="M75.0 127.0 Q51.3 133.4 22.0 128.0" fill="none" stroke="#f8c490" stroke-width="0.7200000000000001"/><path d="M63.4 129.3 L58.0 122.6" fill="none" stroke="#f8c490" stroke-width="0.6000000000000001"/><path d="M61.3 129.3 L56.6 135.5" fill="none" stroke="#f8c490" stroke-width="0.5599999999999999"/><path d="M53.5 130.3 L48.4 139.9" fill="none" stroke="#f8c490" stroke-width="0.6000000000000001"/><path d="M51.4 130.3 L46.4 121.9" fill="none" stroke="#f8c490" stroke-width="0.5599999999999999"/><path d="M43.6 130.5 L38.1 121.1" fill="none" stroke="#f8c490" stroke-width="0.6000000000000001"/><path d="M41.5 130.5 L36.9 139.2" fill="none" stroke="#f8c490" stroke-width="0.5599999999999999"/><path d="M33.7 129.8 L28.5 136.7" fill="none" stroke="#f8c490" stroke-width="0.6000000000000001"/><path d="M31.6 129.9 L26.7 123.9" fill="none" stroke="#f8c490" stroke-width="0.5599999999999999"/><path d="M82.0 122.0 Q108.7 136.9 130.0 110.0 Q98.5 96.3 82.0 122.0 Z" fill="none" stroke="#f8c490" stroke-width="0.8"/><path d="M82.0 122.0 Q103.6 116.6 130.0 110.0" fill="none" stroke="#f8c490" stroke-width="0.7200000000000001"/><path d="M92.6 119.4 L98.8 123.7" fill="none" stroke="#f8c490" stroke-width="0.6000000000000001"/><path d="M94.5 118.9 L97.5 112.8" fill="none" stroke="#f8c490" stroke-width="0.5599999999999999"/><path d="M101.5 117.1 L104.4 108.1" fill="none" stroke="#f8c490" stroke-width="0.6000000000000001"/><path d="M103.4 116.6 L109.5 122.6" fill="none" stroke="#f8c490" stroke-width="0.5599999999999999"/><path d="M110.5 114.9 L117.2 121.5" fill="none" stroke="#f8c490" stroke-width="0.6000000000000001"/><path d="M112.4 114.4 L115.0 106.3" fill="none" stroke="#f8c490" stroke-width="0.5599999999999999"/><path d="M119.4 112.6 L122.8 105.9" fill="none" stroke="#f8c490" stroke-width="0.6000000000000001"/><path d="M121.4 112.2 L126.9 116.1" fill="none" stroke="#f8c490" stroke-width="0.5599999999999999"/><rect x="77" y="142" width="6" height="8" fill="none" stroke="#f8c490" stroke-width="1"/><path d="M78.3 21.7 Q82.5 14.0 91.2 12.5 Q97.1 20.9 94.2 30.8 Q103.7 31.4 109.2 39.2 Q101.8 46.8 91.2 45.8 Q93.8 55.3 87.9 63.3 Q77.2 57.6 75.0 45.8 Q65.3 53.3 53.3 50.4 Q57.6 38.9 69.2 35.0 Q61.5 27.1 62.9 16.2 Q71.9 15.3 78.3 21.7 Z" fill="#f39222"/><path d="M74.9 32.3 l4 6 l5 -7 M83.9 26.3 l-3 7 M69.9 42.3 l8 -3 M84.9 40.3 l6 1 M66.9 24.3 l6 9" fill="none" stroke="#f8d8b0" stroke-width="0.7" opacity="0.85"/></g><g transform="translate(0 166)"><path d="M81 50 Q82.5 99.0 82 148" fill="none" stroke="#f394c8" stroke-width="0.85"/><path d="M82.8 50 Q84.3 99.0 83.8 148" fill="none" stroke="#f394c8" stroke-width="0.75"/><path d="M82.0 88.0 Q122.0 94.4 152.0 58.0 Q102.6 49.0 82.0 88.0 Z" fill="none" stroke="#f394c8" stroke-width="0.8"/><path d="M82.0 88.0 Q112.3 71.7 152.0 58.0" fill="none" stroke="#f394c8" stroke-width="0.7200000000000001"/><path d="M97.0 80.5 L106.7 83.7" fill="none" stroke="#f394c8" stroke-width="0.6000000000000001"/><path d="M99.8 79.3 L103.7 70.9" fill="none" stroke="#f394c8" stroke-width="0.5599999999999999"/><path d="M106.7 75.9 L110.1 64.6" fill="none" stroke="#f394c8" stroke-width="0.6000000000000001"/><path d="M109.5 74.7 L119.0 79.6" fill="none" stroke="#f394c8" stroke-width="0.5599999999999999"/><path d="M116.4 71.6 L127.3 77.7" fill="none" stroke="#f394c8" stroke-width="0.6000000000000001"/><path d="M119.2 70.4 L122.0 59.5" fill="none" stroke="#f394c8" stroke-width="0.5599999999999999"/><path d="M126.3 67.5 L129.7 56.2" fill="none" stroke="#f394c8" stroke-width="0.6000000000000001"/><path d="M129.1 66.3 L138.6 71.2" fill="none" stroke="#f394c8" stroke-width="0.5599999999999999"/><path d="M136.2 63.7 L145.9 66.9" fill="none" stroke="#f394c8" stroke-width="0.6000000000000001"/><path d="M139.0 62.5 L142.9 54.1" fill="none" stroke="#f394c8" stroke-width="0.5599999999999999"/><path d="M80.0 95.0 Q81.7 58.2 43.0 67.0 Q45.0 106.6 80.0 95.0 Z" fill="none" stroke="#f394c8" stroke-width="0.8"/><path d="M80.0 95.0 Q63.3 82.4 43.0 67.0" fill="none" stroke="#f394c8" stroke-width="0.7200000000000001"/><path d="M71.9 88.8 L73.2 79.4" fill="none" stroke="#f394c8" stroke-width="0.6000000000000001"/><path d="M70.4 87.7 L62.5 91.2" fill="none" stroke="#f394c8" stroke-width="0.5599999999999999"/><path d="M66.7 84.9 L56.2 91.1" fill="none" stroke="#f394c8" stroke-width="0.6000000000000001"/><path d="M65.2 83.8 L68.0 73.2" fill="none" stroke="#f394c8" stroke-width="0.5599999999999999"/><path d="M61.5 81.0 L65.1 68.5" fill="none" stroke="#f394c8" stroke-width="0.6000000000000001"/><path d="M60.0 79.9 L50.1 86.1" fill="none" stroke="#f394c8" stroke-width="0.5599999999999999"/><path d="M56.3 77.1 L45.9 83.2" fill="none" stroke="#f394c8" stroke-width="0.6000000000000001"/><path d="M54.8 76.0 L57.6 65.4" fill="none" stroke="#f394c8" stroke-width="0.5599999999999999"/><path d="M51.1 73.2 L52.5 63.7" fill="none" stroke="#f394c8" stroke-width="0.6000000000000001"/><path d="M49.7 72.0 L41.8 75.5" fill="none" stroke="#f394c8" stroke-width="0.5599999999999999"/><path d="M78.0 128.0 Q59.3 81.8 5.0 95.0 Q34.3 137.2 78.0 128.0 Z" fill="none" stroke="#f394c8" stroke-width="0.8"/><path d="M78.0 128.0 Q46.8 109.5 5.0 95.0" fill="none" stroke="#f394c8" stroke-width="0.7200000000000001"/><path d="M62.5 119.5 L58.6 108.6" fill="none" stroke="#f394c8" stroke-width="0.6000000000000001"/><path d="M59.6 118.2 L49.9 122.0" fill="none" stroke="#f394c8" stroke-width="0.5599999999999999"/><path d="M52.5 114.4 L40.6 121.4" fill="none" stroke="#f394c8" stroke-width="0.6000000000000001"/><path d="M49.6 113.1 L47.1 101.0" fill="none" stroke="#f394c8" stroke-width="0.5599999999999999"/><path d="M42.3 109.7 L40.0 95.3" fill="none" stroke="#f394c8" stroke-width="0.6000000000000001"/><path d="M39.4 108.4 L28.3 115.4" fill="none" stroke="#f394c8" stroke-width="0.5599999999999999"/><path d="M32.0 105.2 L20.1 112.1" fill="none" stroke="#f394c8" stroke-width="0.6000000000000001"/><path d="M29.1 103.9 L26.7 91.7" fill="none" stroke="#f394c8" stroke-width="0.5599999999999999"/><path d="M21.6 101.0 L17.8 90.1" fill="none" stroke="#f394c8" stroke-width="0.6000000000000001"/><path d="M18.7 99.7 L9.0 103.6" fill="none" stroke="#f394c8" stroke-width="0.5599999999999999"/><path d="M83.0 120.0 Q100.5 139.3 128.0 128.0 Q107.8 98.1 83.0 120.0 Z" fill="none" stroke="#f394c8" stroke-width="0.8"/><path d="M83.0 120.0 Q104.1 118.7 128.0 128.0" fill="none" stroke="#f394c8" stroke-width="0.7200000000000001"/><path d="M93.2 120.1 L96.7 126.5" fill="none" stroke="#f394c8" stroke-width="0.6000000000000001"/><path d="M95.0 120.4 L100.0 116.0" fill="none" stroke="#f394c8" stroke-width="0.5599999999999999"/><path d="M101.7 120.9 L107.6 113.7" fill="none" stroke="#f394c8" stroke-width="0.6000000000000001"/><path d="M103.5 121.2 L106.3 129.1" fill="none" stroke="#f394c8" stroke-width="0.5599999999999999"/><path d="M110.1 122.4 L113.2 131.1" fill="none" stroke="#f394c8" stroke-width="0.6000000000000001"/><path d="M111.9 122.7 L117.2 116.3" fill="none" stroke="#f394c8" stroke-width="0.5599999999999999"/><path d="M118.4 124.6 L123.9 119.7" fill="none" stroke="#f394c8" stroke-width="0.6000000000000001"/><path d="M120.2 124.9 L123.3 130.7" fill="none" stroke="#f394c8" stroke-width="0.5599999999999999"/><path d="M79 150 L 84 150 L 88 152" fill="none" stroke="#f394c8" stroke-width="1"/><path d="M71.1 16.5 Q74.0 5.7 84.2 1.1 Q88.9 8.8 85.8 17.2 Q95.9 15.5 103.5 22.3 Q98.2 31.2 88.0 32.6 Q93.3 40.5 90.4 49.6 Q80.9 49.4 75.0 41.9 Q69.3 51.7 58.0 53.4 Q55.7 40.8 64.2 31.1 Q54.4 26.4 51.9 15.7 Q61.7 11.5 71.1 16.5 Z" fill="#ff00ff"/><path d="M71.6 24.4 l4 6 l5 -7 M80.6 18.4 l-3 7 M66.6 34.4 l8 -3 M81.6 32.4 l6 1 M63.6 16.4 l6 9" fill="none" stroke="#ff90ff" stroke-width="0.7" opacity="0.85"/></g><g transform="translate(664 0)"><path d="M80 51 Q81.0 106.5 80 162" fill="none" stroke="#f488b8" stroke-width="0.85"/><path d="M75.0 100.0 Q82.8 56.6 35.0 57.0 Q35.5 100.6 75.0 100.0 Z" fill="none" stroke="#f488b8" stroke-width="0.8"/><path d="M75.0 100.0 Q59.2 78.6 35.0 57.0" fill="none" stroke="#f488b8" stroke-width="0.7200000000000001"/><path d="M67.0 89.8 L69.4 79.5" fill="none" stroke="#f488b8" stroke-width="0.6000000000000001"/><path d="M65.4 88.1 L55.9 89.7" fill="none" stroke="#f488b8" stroke-width="0.5599999999999999"/><path d="M61.6 83.6 L48.9 87.4" fill="none" stroke="#f488b8" stroke-width="0.6000000000000001"/><path d="M60.0 81.9 L64.3 70.7" fill="none" stroke="#f488b8" stroke-width="0.5599999999999999"/><path d="M56.1 77.5 L61.6 64.4" fill="none" stroke="#f488b8" stroke-width="0.6000000000000001"/><path d="M54.5 75.8 L42.4 79.8" fill="none" stroke="#f488b8" stroke-width="0.5599999999999999"/><path d="M50.4 71.5 L37.7 75.3" fill="none" stroke="#f488b8" stroke-width="0.6000000000000001"/><path d="M48.8 69.8 L53.1 58.6" fill="none" stroke="#f488b8" stroke-width="0.5599999999999999"/><path d="M44.6 65.8 L47.0 55.4" fill="none" stroke="#f488b8" stroke-width="0.6000000000000001"/><path d="M43.0 64.0 L33.5 65.6" fill="none" stroke="#f488b8" stroke-width="0.5599999999999999"/><path d="M84.0 73.0 Q105.8 78.3 110.0 54.0 Q85.6 50.6 84.0 73.0 Z" fill="none" stroke="#f488b8" stroke-width="0.8"/><path d="M84.0 73.0 Q95.7 64.5 110.0 54.0" fill="none" stroke="#f488b8" stroke-width="0.7200000000000001"/><path d="M89.7 68.8 L95.1 70.7" fill="none" stroke="#f488b8" stroke-width="0.6000000000000001"/><path d="M90.8 68.1 L90.6 62.9" fill="none" stroke="#f488b8" stroke-width="0.5599999999999999"/><path d="M97.0 63.5 L95.6 56.1" fill="none" stroke="#f488b8" stroke-width="0.6000000000000001"/><path d="M98.0 62.7 L104.0 66.0" fill="none" stroke="#f488b8" stroke-width="0.5599999999999999"/><path d="M104.3 58.2 L109.7 60.1" fill="none" stroke="#f488b8" stroke-width="0.6000000000000001"/><path d="M105.3 57.4 L105.2 52.3" fill="none" stroke="#f488b8" stroke-width="0.5599999999999999"/><path d="M82.0 90.0 Q90.8 94.1 94.0 84.0 Q84.0 80.5 82.0 90.0 Z" fill="none" stroke="#f488b8" stroke-width="0.8"/><path d="M82.0 90.0 Q87.4 87.3 94.0 84.0" fill="none" stroke="#f488b8" stroke-width="0.7200000000000001"/><path d="M84.6 88.7 L86.8 89.9" fill="none" stroke="#f488b8" stroke-width="0.6000000000000001"/><path d="M85.1 88.4 L85.4 86.2" fill="none" stroke="#f488b8" stroke-width="0.5599999999999999"/><path d="M84.0 133.0 Q118.9 143.2 132.0 105.0 Q88.3 90.7 84.0 133.0 Z" fill="none" stroke="#f488b8" stroke-width="0.8"/><path d="M84.0 133.0 Q103.6 116.9 132.0 105.0" fill="none" stroke="#f488b8" stroke-width="0.7200000000000001"/><path d="M93.9 125.7 L102.9 130.1" fill="none" stroke="#f488b8" stroke-width="0.6000000000000001"/><path d="M95.8 124.5 L96.3 115.5" fill="none" stroke="#f488b8" stroke-width="0.5599999999999999"/><path d="M100.4 121.3 L99.5 108.8" fill="none" stroke="#f488b8" stroke-width="0.6000000000000001"/><path d="M102.3 120.2 L111.7 126.4" fill="none" stroke="#f488b8" stroke-width="0.5599999999999999"/><path d="M107.0 117.3 L117.9 125.0" fill="none" stroke="#f488b8" stroke-width="0.6000000000000001"/><path d="M108.9 116.2 L107.7 104.2" fill="none" stroke="#f488b8" stroke-width="0.5599999999999999"/><path d="M113.8 113.5 L112.9 101.0" fill="none" stroke="#f488b8" stroke-width="0.6000000000000001"/><path d="M115.7 112.4 L125.1 118.6" fill="none" stroke="#f488b8" stroke-width="0.5599999999999999"/><path d="M120.7 110.0 L129.8 114.4" fill="none" stroke="#f488b8" stroke-width="0.6000000000000001"/><path d="M122.7 108.9 L123.2 99.8" fill="none" stroke="#f488b8" stroke-width="0.5599999999999999"/><path d="M78.0 145.0 Q70.4 116.0 39.0 126.0 Q50.5 156.9 78.0 145.0 Z" fill="none" stroke="#f488b8" stroke-width="0.8"/><path d="M78.0 145.0 Q60.5 136.4 39.0 126.0" fill="none" stroke="#f488b8" stroke-width="0.7200000000000001"/><path d="M69.4 140.8 L68.3 133.3" fill="none" stroke="#f488b8" stroke-width="0.6000000000000001"/><path d="M67.9 140.1 L61.9 143.4" fill="none" stroke="#f488b8" stroke-width="0.5599999999999999"/><path d="M62.1 137.3 L54.4 143.3" fill="none" stroke="#f488b8" stroke-width="0.6000000000000001"/><path d="M60.6 136.5 L60.5 127.7" fill="none" stroke="#f488b8" stroke-width="0.5599999999999999"/><path d="M54.9 133.7 L54.8 123.9" fill="none" stroke="#f488b8" stroke-width="0.6000000000000001"/><path d="M53.3 133.0 L46.3 138.4" fill="none" stroke="#f488b8" stroke-width="0.5599999999999999"/><path d="M47.6 130.2 L40.9 133.9" fill="none" stroke="#f488b8" stroke-width="0.6000000000000001"/><path d="M46.0 129.4 L45.0 122.6" fill="none" stroke="#f488b8" stroke-width="0.5599999999999999"/><path d="M77.0 110.0 Q74.8 100.2 64.0 103.0 Q67.5 113.5 77.0 110.0 Z" fill="none" stroke="#f488b8" stroke-width="0.8"/><path d="M77.0 110.0 Q71.2 106.8 64.0 103.0" fill="none" stroke="#f488b8" stroke-width="0.7200000000000001"/><path d="M74.1 108.5 L73.8 105.9" fill="none" stroke="#f488b8" stroke-width="0.6000000000000001"/><path d="M73.6 108.2 L71.6 109.2" fill="none" stroke="#f488b8" stroke-width="0.5599999999999999"/><path d="M80.0 118.0 Q87.6 118.4 88.0 110.0 Q79.6 110.4 80.0 118.0 Z" fill="none" stroke="#f488b8" stroke-width="0.8"/><path d="M80.0 118.0 Q83.6 114.4 88.0 110.0" fill="none" stroke="#f488b8" stroke-width="0.7200000000000001"/><path d="M42.3 32.0 C42.8 29.4 47.1 26.9 48.7 24.3 C50.3 21.8 49.2 18.8 51.7 16.7 C54.2 14.5 59.9 11.9 63.9 11.4 C68.0 10.9 73.2 13.1 76.0 13.7 C78.8 14.3 79.1 16.2 80.6 15.2 C82.1 14.2 82.9 9.1 85.2 7.6 C87.5 6.1 91.2 5.6 94.3 6.4 C97.3 7.2 101.5 9.2 103.5 12.2 C105.5 15.2 105.2 21.0 106.5 24.3 C107.8 27.6 111.0 29.4 111.5 32.0 C112.0 34.5 110.8 37.3 109.5 39.6 C108.2 41.9 106.5 43.8 103.5 45.6 C100.5 47.4 95.4 49.2 91.3 50.2 C87.2 51.2 83.7 51.7 79.1 51.7 C74.5 51.7 68.5 51.2 63.9 50.2 C59.3 49.2 54.8 47.4 51.7 45.6 C48.7 43.8 47.2 41.9 45.6 39.6 C44.0 37.3 41.8 34.5 42.3 32.0 Z" fill="#ea1f7a"/><path d="M58 30 L 62 22 L 65 32 L 70 18 L 73 30 L 77 24 M84 18 L 86 28 L 90 20 L 92 30 M98 16 L 94 32 L 100 26 M72 40 C 74 34, 82 34, 84 40 M96 34 L 104 30 M62 44 C 70 46, 80 46, 88 44 M76 36 L 80 30 L 84 36" fill="none" stroke="#f8a0c8" stroke-width="0.8"/></g><g transform="translate(332 0)"><path d="M81 56 Q80.5 103.0 78 150" fill="none" stroke="#70f070" stroke-width="0.85"/><path d="M82.8 56 Q82.3 103.0 79.8 150" fill="none" stroke="#70f070" stroke-width="0.75"/><path d="M82.0 80.0 Q74.3 64.0 57.0 73.0 Q67.2 89.7 82.0 80.0 Z" fill="none" stroke="#70f070" stroke-width="0.8"/><path d="M82.0 80.0 Q70.8 76.8 57.0 73.0" fill="none" stroke="#70f070" stroke-width="0.7200000000000001"/><path d="M76.5 78.5 L75.0 74.2" fill="none" stroke="#70f070" stroke-width="0.6000000000000001"/><path d="M75.5 78.2 L72.4 80.7" fill="none" stroke="#70f070" stroke-width="0.5599999999999999"/><path d="M62.5 74.5 L59.0 77.4" fill="none" stroke="#70f070" stroke-width="0.6000000000000001"/><path d="M61.5 74.3 L60.1 70.5" fill="none" stroke="#70f070" stroke-width="0.5599999999999999"/><path d="M85.0 95.0 Q111.2 92.3 110.0 63.0 Q81.3 68.9 85.0 95.0 Z" fill="none" stroke="#70f070" stroke-width="0.8"/><path d="M85.0 95.0 Q96.2 80.6 110.0 63.0" fill="none" stroke="#70f070" stroke-width="0.7200000000000001"/><path d="M90.5 88.0 L97.1 88.0" fill="none" stroke="#70f070" stroke-width="0.6000000000000001"/><path d="M91.5 86.7 L90.1 80.9" fill="none" stroke="#70f070" stroke-width="0.5599999999999999"/><path d="M97.5 79.0 L94.0 71.1" fill="none" stroke="#70f070" stroke-width="0.6000000000000001"/><path d="M98.5 77.7 L106.1 79.1" fill="none" stroke="#70f070" stroke-width="0.5599999999999999"/><path d="M104.5 70.0 L111.1 70.1" fill="none" stroke="#70f070" stroke-width="0.6000000000000001"/><path d="M105.5 68.8 L104.1 63.0" fill="none" stroke="#70f070" stroke-width="0.5599999999999999"/><path d="M80.0 105.0 Q69.3 84.5 44.0 91.0 Q58.3 112.9 80.0 105.0 Z" fill="none" stroke="#70f070" stroke-width="0.8"/><path d="M80.0 105.0 Q63.8 98.7 44.0 91.0" fill="none" stroke="#70f070" stroke-width="0.7200000000000001"/><path d="M72.1 101.9 L70.0 96.6" fill="none" stroke="#70f070" stroke-width="0.6000000000000001"/><path d="M70.6 101.4 L66.0 103.6" fill="none" stroke="#70f070" stroke-width="0.5599999999999999"/><path d="M62.0 98.0 L56.2 102.3" fill="none" stroke="#70f070" stroke-width="0.6000000000000001"/><path d="M60.6 97.4 L59.3 91.1" fill="none" stroke="#70f070" stroke-width="0.5599999999999999"/><path d="M51.9 94.1 L49.8 88.8" fill="none" stroke="#70f070" stroke-width="0.6000000000000001"/><path d="M50.5 93.5 L45.9 95.8" fill="none" stroke="#70f070" stroke-width="0.5599999999999999"/><path d="M83.0 115.0 Q103.2 122.6 114.0 101.0 Q90.7 94.8 83.0 115.0 Z" fill="none" stroke="#70f070" stroke-width="0.8"/><path d="M83.0 115.0 Q97.0 108.7 114.0 101.0" fill="none" stroke="#70f070" stroke-width="0.7200000000000001"/><path d="M89.8 111.9 L94.6 114.3" fill="none" stroke="#70f070" stroke-width="0.6000000000000001"/><path d="M91.1 111.4 L92.3 106.7" fill="none" stroke="#70f070" stroke-width="0.5599999999999999"/><path d="M98.5 108.0 L99.1 101.1" fill="none" stroke="#70f070" stroke-width="0.6000000000000001"/><path d="M99.7 107.4 L104.8 111.2" fill="none" stroke="#70f070" stroke-width="0.5599999999999999"/><path d="M107.2 104.1 L112.0 106.5" fill="none" stroke="#70f070" stroke-width="0.6000000000000001"/><path d="M108.4 103.5 L109.7 98.8" fill="none" stroke="#70f070" stroke-width="0.5599999999999999"/><path d="M76.0 137.0 Q64.4 126.2 48.0 134.0 Q62.4 145.1 76.0 137.0 Z" fill="none" stroke="#70f070" stroke-width="0.8"/><path d="M76.0 137.0 Q63.4 135.7 48.0 134.0" fill="none" stroke="#70f070" stroke-width="0.7200000000000001"/><path d="M69.8 136.3 L67.3 133.4" fill="none" stroke="#70f070" stroke-width="0.6000000000000001"/><path d="M68.7 136.2 L65.9 138.3" fill="none" stroke="#70f070" stroke-width="0.5599999999999999"/><path d="M54.2 134.7 L51.1 137.0" fill="none" stroke="#70f070" stroke-width="0.6000000000000001"/><path d="M53.0 134.5 L50.8 131.9" fill="none" stroke="#70f070" stroke-width="0.5599999999999999"/><path d="M66 148 L 78 158 L 88 148 M70 152 L 78 140 L 86 152 M72 160 L 80 148 L 90 156" fill="none" stroke="#70f070" stroke-width="0.9"/><path d="M45.0 31.6 C45.2 27.1 45.5 20.9 48.0 18.0 C50.5 15.1 56.2 16.1 60.0 14.3 C63.8 12.6 67.3 9.2 70.6 7.5 C73.9 5.8 76.9 3.8 79.7 3.8 C82.5 3.8 84.2 6.1 87.2 7.5 C90.2 8.9 94.2 9.0 97.7 12.0 C101.2 15.0 105.2 23.0 108.2 25.5 C111.2 28.0 114.0 25.2 115.7 27.0 C117.5 28.8 117.2 33.0 118.7 36.0 C120.2 39.0 125.5 42.5 124.7 45.0 C124.0 47.5 117.5 49.4 114.2 51.0 C111.0 52.6 110.2 54.0 105.2 54.9 C100.2 55.8 90.5 56.3 84.2 56.4 C77.9 56.5 73.4 56.0 67.6 55.6 C61.8 55.2 53.1 55.9 49.6 54.1 C46.1 52.3 47.4 48.8 46.6 45.0 C45.8 41.2 44.8 36.1 45.0 31.6 Z" fill="#1ef01e"/><circle cx="44" cy="27" r="0.8" fill="#1ef01e"/><circle cx="93" cy="5" r="0.9" fill="#1ef01e"/><circle cx="66" cy="8" r="0.6" fill="#1ef01e"/><path d="M56 28 C 62 34, 72 38, 80 36 C 88 34, 96 38, 106 34 M66 48 C 74 52, 88 52, 96 48 M62 20 L 70 32 M84 10 L 82 26 M100 20 L 92 34 M74 38 L 80 42 L 86 38 M52 40 L 60 44 M104 42 L 112 40" fill="none" stroke="#90ff90" stroke-width="0.8"/></g><g transform="translate(498 0)"><path d="M79 58 Q80.5 99.0 80 140" fill="none" stroke="#e0c4a4" stroke-width="0.85"/><path d="M80.8 58 Q82.3 99.0 81.8 140" fill="none" stroke="#e0c4a4" stroke-width="0.75"/><path d="M61.0 72.0 C61.3 70.2 64.2 69.3 66.0 69.0 C67.8 68.7 70.2 69.2 72.0 70.0 C73.8 70.8 76.0 72.3 77.0 74.0 C78.0 75.7 78.2 78.2 78.0 80.0 C77.8 81.8 77.3 84.3 76.0 85.0 C74.7 85.7 72.0 84.8 70.0 84.0 C68.0 83.2 65.5 82.0 64.0 80.0 C62.5 78.0 60.7 73.8 61.0 72.0 Z" fill="#f7ecdd" stroke="#e2c49e" stroke-width="1.1" stroke-dasharray="2 0.8"/><path d="M84.0 88.0 C84.0 85.3 86.0 83.3 88.0 82.0 C90.0 80.7 93.3 80.0 96.0 80.0 C98.7 80.0 103.0 80.3 104.0 82.0 C105.0 83.7 103.3 87.7 102.0 90.0 C100.7 92.3 98.3 94.7 96.0 96.0 C93.7 97.3 90.0 99.3 88.0 98.0 C86.0 96.7 84.0 90.7 84.0 88.0 Z" fill="#f7ecdd" stroke="#e2c49e" stroke-width="1.1" stroke-dasharray="2 0.8"/><path d="M46.0 105.0 C47.3 103.3 51.0 102.3 54.0 102.0 C57.0 101.7 61.0 102.3 64.0 103.0 C67.0 103.7 69.8 104.2 72.0 106.0 C74.2 107.8 76.3 111.3 77.0 114.0 C77.7 116.7 77.5 119.8 76.0 122.0 C74.5 124.2 71.0 126.5 68.0 127.0 C65.0 127.5 61.0 126.2 58.0 125.0 C55.0 123.8 52.0 122.2 50.0 120.0 C48.0 117.8 46.7 114.5 46.0 112.0 C45.3 109.5 44.7 106.7 46.0 105.0 Z" fill="#f7ecdd" stroke="#e2c49e" stroke-width="1.1" stroke-dasharray="2 0.8"/><path d="M86.0 114.0 C86.3 111.3 87.7 107.7 90.0 106.0 C92.3 104.3 96.7 104.2 100.0 104.0 C103.3 103.8 107.2 104.0 110.0 105.0 C112.8 106.0 116.3 107.8 117.0 110.0 C117.7 112.2 115.8 115.7 114.0 118.0 C112.2 120.3 109.0 122.8 106.0 124.0 C103.0 125.2 99.0 125.3 96.0 125.0 C93.0 124.7 89.7 123.8 88.0 122.0 C86.3 120.2 85.7 116.7 86.0 114.0 Z" fill="#f7ecdd" stroke="#e2c49e" stroke-width="1.1" stroke-dasharray="2 0.8"/><path d="M64 76 L 76 80 M50 110 L 74 116 M90 116 L 114 110 M86 92 L 102 84 M68 88 L 79 94 M72 132 L 79 136 M92 130 L 100 136 M56 114 L 62 120 M100 112 L 104 118 M52 108 C 58 112, 66 110, 70 116" fill="none" stroke="#dcb890" stroke-width="0.8"/><ellipse cx="102.0" cy="33.0" rx="8" ry="3.3" transform="rotate(0.0 102.0 33.0)" fill="#c99866"/><ellipse cx="101.1" cy="38.4" rx="8" ry="3.3" transform="rotate(16.4 101.1 38.4)" fill="#c99866"/><ellipse cx="98.7" cy="43.3" rx="8" ry="3.3" transform="rotate(32.7 98.7 43.3)" fill="#c99866"/><ellipse cx="94.8" cy="47.4" rx="8" ry="3.3" transform="rotate(49.1 94.8 47.4)" fill="#c99866"/><ellipse cx="89.7" cy="50.3" rx="8" ry="3.3" transform="rotate(65.5 89.7 50.3)" fill="#c99866"/><ellipse cx="84.0" cy="51.8" rx="8" ry="3.3" transform="rotate(81.8 84.0 51.8)" fill="#c99866"/><ellipse cx="78.0" cy="51.8" rx="8" ry="3.3" transform="rotate(98.2 78.0 51.8)" fill="#c99866"/><ellipse cx="72.3" cy="50.3" rx="8" ry="3.3" transform="rotate(114.5 72.3 50.3)" fill="#c99866"/><ellipse cx="67.2" cy="47.4" rx="8" ry="3.3" transform="rotate(130.9 67.2 47.4)" fill="#c99866"/><ellipse cx="63.3" cy="43.3" rx="8" ry="3.3" transform="rotate(147.3 63.3 43.3)" fill="#c99866"/><ellipse cx="60.9" cy="38.4" rx="8" ry="3.3" transform="rotate(163.6 60.9 38.4)" fill="#c99866"/><ellipse cx="60.0" cy="33.0" rx="8" ry="3.3" transform="rotate(180.0 60.0 33.0)" fill="#c99866"/><ellipse cx="60.9" cy="27.6" rx="8" ry="3.3" transform="rotate(196.4 60.9 27.6)" fill="#c99866"/><ellipse cx="63.3" cy="22.7" rx="8" ry="3.3" transform="rotate(212.7 63.3 22.7)" fill="#c99866"/><ellipse cx="67.2" cy="18.6" rx="8" ry="3.3" transform="rotate(229.1 67.2 18.6)" fill="#c99866"/><ellipse cx="72.3" cy="15.7" rx="8" ry="3.3" transform="rotate(245.5 72.3 15.7)" fill="#c99866"/><ellipse cx="78.0" cy="14.2" rx="8" ry="3.3" transform="rotate(261.8 78.0 14.2)" fill="#c99866"/><ellipse cx="84.0" cy="14.2" rx="8" ry="3.3" transform="rotate(278.2 84.0 14.2)" fill="#c99866"/><ellipse cx="89.7" cy="15.7" rx="8" ry="3.3" transform="rotate(294.5 89.7 15.7)" fill="#c99866"/><ellipse cx="94.8" cy="18.6" rx="8" ry="3.3" transform="rotate(310.9 94.8 18.6)" fill="#c99866"/><ellipse cx="98.7" cy="22.7" rx="8" ry="3.3" transform="rotate(327.3 98.7 22.7)" fill="#c99866"/><ellipse cx="101.1" cy="27.6" rx="8" ry="3.3" transform="rotate(343.6 101.1 27.6)" fill="#c99866"/><circle cx="81" cy="33" r="14" fill="#d2aa7c"/><path d="M70 28 L 92 38 M72 38 L 90 26 M81 20 L 81 46 M68 33 L 94 33 M74 23 L 88 43 M88 23 L 74 43" stroke="#f0dcc0" stroke-width="0.8"/><circle cx="81" cy="33" r="6" fill="none" stroke="#f0dcc0" stroke-width="0.8"/></g><g transform="translate(166 332)"><path d="M79 55 Q80.0 100.0 79 145" fill="none" stroke="#5cf2f2" stroke-width="0.85"/><path d="M80.8 55 Q81.8 100.0 80.8 145" fill="none" stroke="#5cf2f2" stroke-width="0.75"/><path d="M78.0 67.0 Q64.7 44.8 37.0 54.0 Q54.4 77.5 78.0 67.0 Z" fill="none" stroke="#5cf2f2" stroke-width="0.8"/><path d="M78.0 67.0 Q59.5 61.1 37.0 54.0" fill="none" stroke="#5cf2f2" stroke-width="0.7200000000000001"/><path d="M69.0 64.1 L66.3 58.4" fill="none" stroke="#5cf2f2" stroke-width="0.6000000000000001"/><path d="M67.3 63.6 L62.4 66.5" fill="none" stroke="#5cf2f2" stroke-width="0.5599999999999999"/><path d="M61.3 61.7 L55.2 66.7" fill="none" stroke="#5cf2f2" stroke-width="0.6000000000000001"/><path d="M59.7 61.2 L57.8 54.4" fill="none" stroke="#5cf2f2" stroke-width="0.5599999999999999"/><path d="M53.7 59.3 L51.6 51.7" fill="none" stroke="#5cf2f2" stroke-width="0.6000000000000001"/><path d="M52.0 58.8 L46.5 63.3" fill="none" stroke="#5cf2f2" stroke-width="0.5599999999999999"/><path d="M46.0 56.9 L40.5 60.0" fill="none" stroke="#5cf2f2" stroke-width="0.6000000000000001"/><path d="M44.4 56.3 L42.0 51.1" fill="none" stroke="#5cf2f2" stroke-width="0.5599999999999999"/><path d="M82.0 74.0 Q97.3 74.9 98.0 58.0 Q81.1 58.7 82.0 74.0 Z" fill="none" stroke="#5cf2f2" stroke-width="0.8"/><path d="M82.0 74.0 Q89.2 66.8 98.0 58.0" fill="none" stroke="#5cf2f2" stroke-width="0.7200000000000001"/><path d="M85.5 70.5 L89.3 71.1" fill="none" stroke="#5cf2f2" stroke-width="0.6000000000000001"/><path d="M86.2 69.8 L85.6 66.4" fill="none" stroke="#5cf2f2" stroke-width="0.5599999999999999"/><path d="M94.5 61.5 L93.9 57.7" fill="none" stroke="#5cf2f2" stroke-width="0.6000000000000001"/><path d="M95.1 60.9 L98.6 61.4" fill="none" stroke="#5cf2f2" stroke-width="0.5599999999999999"/><path d="M78.0 90.0 Q72.2 65.2 45.0 72.0 Q54.1 98.6 78.0 90.0 Z" fill="none" stroke="#5cf2f2" stroke-width="0.8"/><path d="M78.0 90.0 Q63.1 81.9 45.0 72.0" fill="none" stroke="#5cf2f2" stroke-width="0.7200000000000001"/><path d="M70.7 86.0 L69.9 79.7" fill="none" stroke="#5cf2f2" stroke-width="0.6000000000000001"/><path d="M69.4 85.3 L64.2 87.8" fill="none" stroke="#5cf2f2" stroke-width="0.5599999999999999"/><path d="M64.6 82.7 L57.8 87.3" fill="none" stroke="#5cf2f2" stroke-width="0.6000000000000001"/><path d="M63.3 82.0 L63.5 74.5" fill="none" stroke="#5cf2f2" stroke-width="0.5599999999999999"/><path d="M58.4 79.3 L58.6 71.1" fill="none" stroke="#5cf2f2" stroke-width="0.6000000000000001"/><path d="M57.1 78.6 L51.0 82.8" fill="none" stroke="#5cf2f2" stroke-width="0.5599999999999999"/><path d="M52.3 76.0 L46.5 78.7" fill="none" stroke="#5cf2f2" stroke-width="0.6000000000000001"/><path d="M50.9 75.2 L50.2 69.5" fill="none" stroke="#5cf2f2" stroke-width="0.5599999999999999"/><path d="M80.0 92.0 Q108.4 102.4 132.0 77.0 Q96.8 62.3 80.0 92.0 Z" fill="none" stroke="#5cf2f2" stroke-width="0.8"/><path d="M80.0 92.0 Q102.6 82.4 132.0 77.0" fill="none" stroke="#5cf2f2" stroke-width="0.7200000000000001"/><path d="M91.2 87.7 L97.9 91.7" fill="none" stroke="#5cf2f2" stroke-width="0.6000000000000001"/><path d="M93.2 87.1 L96.5 80.8" fill="none" stroke="#5cf2f2" stroke-width="0.5599999999999999"/><path d="M98.3 85.3 L101.4 76.4" fill="none" stroke="#5cf2f2" stroke-width="0.6000000000000001"/><path d="M100.4 84.7 L107.0 90.0" fill="none" stroke="#5cf2f2" stroke-width="0.5599999999999999"/><path d="M105.6 83.1 L113.1 89.6" fill="none" stroke="#5cf2f2" stroke-width="0.6000000000000001"/><path d="M107.7 82.5 L110.3 73.9" fill="none" stroke="#5cf2f2" stroke-width="0.5599999999999999"/><path d="M112.9 81.1 L116.0 72.2" fill="none" stroke="#5cf2f2" stroke-width="0.6000000000000001"/><path d="M115.0 80.5 L121.6 85.8" fill="none" stroke="#5cf2f2" stroke-width="0.5599999999999999"/><path d="M120.3 79.3 L127.1 83.3" fill="none" stroke="#5cf2f2" stroke-width="0.6000000000000001"/><path d="M122.4 78.7 L125.6 72.4" fill="none" stroke="#5cf2f2" stroke-width="0.5599999999999999"/><path d="M76.0 132.0 Q77.9 94.0 36.0 93.0 Q38.1 134.9 76.0 132.0 Z" fill="none" stroke="#5cf2f2" stroke-width="0.8"/><path d="M76.0 132.0 Q58.0 114.5 36.0 93.0" fill="none" stroke="#5cf2f2" stroke-width="0.7200000000000001"/><path d="M67.2 123.4 L68.7 113.9" fill="none" stroke="#5cf2f2" stroke-width="0.6000000000000001"/><path d="M65.6 121.9 L57.1 123.4" fill="none" stroke="#5cf2f2" stroke-width="0.5599999999999999"/><path d="M61.6 118.0 L50.3 121.6" fill="none" stroke="#5cf2f2" stroke-width="0.6000000000000001"/><path d="M60.0 116.4 L63.0 106.1" fill="none" stroke="#5cf2f2" stroke-width="0.5599999999999999"/><path d="M56.0 112.5 L60.0 100.4" fill="none" stroke="#5cf2f2" stroke-width="0.6000000000000001"/><path d="M54.4 110.9 L43.6 114.8" fill="none" stroke="#5cf2f2" stroke-width="0.5599999999999999"/><path d="M50.4 107.0 L39.1 110.7" fill="none" stroke="#5cf2f2" stroke-width="0.6000000000000001"/><path d="M48.8 105.5 L51.8 95.2" fill="none" stroke="#5cf2f2" stroke-width="0.5599999999999999"/><path d="M44.8 101.6 L46.3 92.1" fill="none" stroke="#5cf2f2" stroke-width="0.6000000000000001"/><path d="M43.2 100.0 L34.7 101.6" fill="none" stroke="#5cf2f2" stroke-width="0.5599999999999999"/><path d="M82.0 130.0 Q112.4 130.1 109.0 97.0 Q71.2 96.4 82.0 130.0 Z" fill="none" stroke="#5cf2f2" stroke-width="0.8"/><path d="M82.0 130.0 Q91.8 113.3 109.0 97.0" fill="none" stroke="#5cf2f2" stroke-width="0.7200000000000001"/><path d="M87.1 122.1 L95.5 123.4" fill="none" stroke="#5cf2f2" stroke-width="0.6000000000000001"/><path d="M88.2 120.8 L85.6 113.6" fill="none" stroke="#5cf2f2" stroke-width="0.5599999999999999"/><path d="M91.9 115.7 L86.6 105.9" fill="none" stroke="#5cf2f2" stroke-width="0.6000000000000001"/><path d="M92.9 114.3 L102.5 117.2" fill="none" stroke="#5cf2f2" stroke-width="0.5599999999999999"/><path d="M96.9 109.5 L107.5 112.7" fill="none" stroke="#5cf2f2" stroke-width="0.6000000000000001"/><path d="M98.0 108.2 L93.3 99.4" fill="none" stroke="#5cf2f2" stroke-width="0.5599999999999999"/><path d="M102.3 103.6 L99.3 95.7" fill="none" stroke="#5cf2f2" stroke-width="0.6000000000000001"/><path d="M103.3 102.3 L110.9 103.5" fill="none" stroke="#5cf2f2" stroke-width="0.5599999999999999"/><path d="M72 144 L 86 144" stroke="#5cf2f2" stroke-width="1"/><path d="M78.1 24.0 Q77.5 15.0 86.4 13.5 Q95.8 18.7 91.7 28.6 Q100.1 24.4 105.2 32.3 Q102.2 42.5 91.7 40.6 Q98.4 49.5 90.2 57.1 Q77.8 54.7 78.9 42.1 Q72.7 51.8 62.4 46.6 Q62.2 36.6 72.1 35.3 Q61.1 33.6 61.6 22.5 Q70.5 15.8 78.1 24.0 Z" fill="#00ffff"/><path d="M75.2 30.4 l4 6 l5 -7 M84.2 24.4 l-3 7 M70.2 40.4 l8 -3 M85.2 38.4 l6 1 M67.2 22.4 l6 9" fill="none" stroke="#90ffff" stroke-width="0.7" opacity="0.85"/></g></svg>
<div class="a" style="left:1744px;top:123px;width:20px;height:871px;background:#4a4a4a;"></div>
<svg class="a" style="left:1750px;top:132px" width="11" height="8" viewBox="-1 -1.5 11 8"><path d="M0 5 L4.5 0 L9 5" fill="none" stroke="#cfcfcf" stroke-width="1.5"/></svg>
<div class="a" style="left:1745px;top:543px;width:19px;height:31px;background:#5e5e5e;border-radius:9px"></div>
<svg class="a" style="left:1750px;top:981px" width="11" height="8" viewBox="-1 -1.5 11 8"><path d="M0 0 L4.5 5 L9 0" fill="none" stroke="#cfcfcf" stroke-width="1.5"/></svg>
<div class="a" style="left:97px;top:994px;width:1667px;height:20px;background:#535353;"></div>
<div class="a" style="left:97px;top:1013px;width:1667px;height:1px;background:#3a3a3a;"></div>
<div class="a" style="left:102px;top:995px;width:62px;height:18px;background:#424242;border-radius:3px 0 0 0"></div>
<div class="a" style="left:166px;top:995px;width:21px;height:18px;background:#4a4a4a;border-radius:0 3px 0 0"></div>
<div class="t" style="left:106px;top:1002px;font-size:13px;color:#f4f4f4;">8.33%</div>
<svg class="a" style="left:170px;top:1003px" width="11" height="8" viewBox="-1 -1.5 11 8"><path d="M0 0 L4.5 5 L9 0" fill="none" stroke="#f4f4f4" stroke-width="1.6"/></svg>
<div class="a" style="left:189px;top:995px;width:3px;height:18px;background:#4a4a4a;"></div>
<div class="a" style="left:193px;top:995px;width:62px;height:18px;background:#424242;border-radius:3px 0 0 0"></div>
<div class="a" style="left:257px;top:995px;width:21px;height:18px;background:#4a4a4a;border-radius:0 3px 0 0"></div>
<div class="t" style="left:197px;top:1002px;font-size:13px;color:#f4f4f4;">0°</div>
<svg class="a" style="left:262px;top:1003px" width="11" height="8" viewBox="-1 -1.5 11 8"><path d="M0 0 L4.5 5 L9 0" fill="none" stroke="#f4f4f4" stroke-width="1.6"/></svg>
<div class="a" style="left:278px;top:995px;width:52px;height:18px;background:transparent;border:1px solid #5a5a5a;border-bottom:none;border-radius:3px 3px 0 0"></div>
<svg class="a" style="left:289px;top:1000px" width="13" height="12" viewBox="0 0 13 12"><rect x="0" y="0.5" width="2.5" height="11" fill="#c4c4c4"/><path d="M11 0.5 L3.5 6 L11 11.5 Z" fill="#c4c4c4"/></svg>
<svg class="a" style="left:312px;top:1000px" width="8" height="12" viewBox="0 0 8 12"><path d="M7 0.5 L0.5 6 L7 11.5 Z" fill="#c4c4c4"/></svg>
<div class="a" style="left:331px;top:995px;width:50px;height:18px;background:#424242;border-radius:3px 0 0 0"></div>
<div class="a" style="left:382px;top:995px;width:21px;height:18px;background:#4a4a4a;border-radius:0 3px 0 0"></div>
<div class="t" style="left:334px;top:1002px;font-size:13px;color:#f4f4f4;">6</div>
<svg class="a" style="left:387px;top:1003px" width="11" height="8" viewBox="-1 -1.5 11 8"><path d="M0 0 L4.5 5 L9 0" fill="none" stroke="#f4f4f4" stroke-width="1.6"/></svg>
<div class="a" style="left:404px;top:995px;width:52px;height:18px;background:transparent;border:1px solid #5a5a5a;border-bottom:none;border-radius:3px 3px 0 0"></div>
<svg class="a" style="left:415px;top:1000px" width="8" height="12" viewBox="0 0 8 12"><path d="M0.5 0.5 L7 6 L0.5 11.5 Z" fill="#c4c4c4"/></svg>
<svg class="a" style="left:433px;top:1000px" width="13" height="12" viewBox="0 0 13 12"><path d="M0.5 0.5 L8 6 L0.5 11.5 Z" fill="#c4c4c4"/><rect x="9" y="0.5" width="2.5" height="11" fill="#c4c4c4"/></svg>
<div class="a" style="left:456px;top:995px;width:1px;height:18px;background:#4a4a4a;"></div>
<div class="t" style="left:556px;top:1002px;font-size:12.5px;color:#cfcfcf;">Selection</div>
<div class="a" style="left:706px;top:995px;width:1px;height:18px;background:#4a4a4a;"></div>
<svg class="a" style="left:714px;top:1000px" width="8" height="12" viewBox="0 0 8 12"><path d="M0.5 0.5 L7 6 L0.5 11.5 Z" fill="#c4c4c4"/></svg>
<div class="a" style="left:727px;top:994px;width:1017px;height:19px;background:#4a4a4a;"></div>
<svg class="a" style="left:735px;top:999px" width="7" height="11" viewBox="0 0 7 11"><path d="M6 0.5 L1 5.5 L6 10.5" fill="none" stroke="#c4c4c4" stroke-width="1.4"/></svg>
<div class="a" style="left:1221px;top:995px;width:31px;height:18px;background:#5e5e5e;border-radius:9px 9px 0 0"></div>
<svg class="a" style="left:1730px;top:999px" width="7" height="11" viewBox="0 0 7 11"><path d="M1 0.5 L6 5.5 L1 10.5" fill="none" stroke="#c4c4c4" stroke-width="1.4"/></svg>
<div class="a" style="left:1744px;top:994px;width:20px;height:19px;background:#535353;"></div>
<div class="a" style="left:97px;top:1014px;width:1821px;height:5px;background:#535353;"></div>
<div class="a" style="left:0px;top:1019px;width:1918px;height:1px;background:#3a3a3a;"></div>
<div class="a" style="left:1764px;top:86px;width:2px;height:928px;background:#3a3a3a;"></div>
<div class="a" style="left:1766px;top:86px;width:152px;height:928px;background:#535353;"></div>
<div class="a" style="left:1766px;top:86px;width:105px;height:15px;background:#424242;"></div>
<div class="a" style="left:1766px;top:100px;width:105px;height:1px;background:#2e2e2e;"></div>
<svg class="a" style="left:1797px;top:89px" width="9" height="8" viewBox="0 0 9 8"><path d="M4 1 L1 4 L4 7 Z M8 1 L5 4 L8 7 Z" fill="#ddd"/></svg>
<svg class="a" style="left:1847px;top:89px" width="9" height="8" viewBox="0 0 9 8"><path d="M4 1 L1 4 L4 7 Z M8 1 L5 4 L8 7 Z" fill="#ddd"/></svg>
<div class="a" style="left:1766px;top:101px;width:49px;height:913px;background:#535353;border:1px solid #3c3c3c"></div>
<div class="a" style="left:1816px;top:101px;width:49px;height:913px;background:#535353;border:1px solid #3c3c3c"></div>
<div class="a" style="left:1866px;top:101px;width:49px;height:913px;background:#535353;border:1px solid #3c3c3c"></div>
<div class="a" style="left:1779px;top:105px;width:1.2px;height:6px;background:#3a3a3a;"></div>
<div class="a" style="left:1782px;top:105px;width:1.2px;height:6px;background:#3a3a3a;"></div>
<div class="a" style="left:1785px;top:105px;width:1.2px;height:6px;background:#3a3a3a;"></div>
<div class="a" style="left:1788px;top:105px;width:1.2px;height:6px;background:#3a3a3a;"></div>
<div class="a" style="left:1791px;top:105px;width:1.2px;height:6px;background:#3a3a3a;"></div>
<div class="a" style="left:1794px;top:105px;width:1.2px;height:6px;background:#3a3a3a;"></div>
<div class="a" style="left:1797px;top:105px;width:1.2px;height:6px;background:#3a3a3a;"></div>
<div class="a" style="left:1800px;top:105px;width:1.2px;height:6px;background:#3a3a3a;"></div>
<div class="a" style="left:1766px;top:152px;width:49px;height:2px;background:#3c3c3c;"></div>
<svg class="a" style="left:1780px;top:119px" width="22" height="24" viewBox="0 0 22 24"><path d="M11 1.5 L20 6.5 V17 L11 22 L2 17 V6.5 Z M2 6.5 L11 11.5 L20 6.5 M11 11.5 V22" fill="none" stroke="#c4c4c4" stroke-width="1.3"/></svg>
<div class="a" style="left:1866px;top:152px;width:49px;height:2px;background:#3c3c3c;"></div>
<div class="a" style="left:1829px;top:105px;width:1.2px;height:6px;background:#3a3a3a;"></div>
<div class="a" style="left:1832px;top:105px;width:1.2px;height:6px;background:#3a3a3a;"></div>
<div class="a" style="left:1835px;top:105px;width:1.2px;height:6px;background:#3a3a3a;"></div>
<div class="a" style="left:1838px;top:105px;width:1.2px;height:6px;background:#3a3a3a;"></div>
<div class="a" style="left:1841px;top:105px;width:1.2px;height:6px;background:#3a3a3a;"></div>
<div class="a" style="left:1844px;top:105px;width:1.2px;height:6px;background:#3a3a3a;"></div>
<div class="a" style="left:1847px;top:105px;width:1.2px;height:6px;background:#3a3a3a;"></div>
<div class="a" style="left:1850px;top:105px;width:1.2px;height:6px;background:#3a3a3a;"></div>
<div class="a" style="left:1816px;top:187px;width:49px;height:2px;background:#3c3c3c;"></div>
<div class="a" style="left:1829px;top:191px;width:1.2px;height:6px;background:#3a3a3a;"></div>
<div class="a" style="left:1832px;top:191px;width:1.2px;height:6px;background:#3a3a3a;"></div>
<div class="a" style="left:1835px;top:191px;width:1.2px;height:6px;background:#3a3a3a;"></div>
<div class="a" style="left:1838px;top:191px;width:1.2px;height:6px;background:#3a3a3a;"></div>
<div class="a" style="left:1841px;top:191px;width:1.2px;height:6px;background:#3a3a3a;"></div>
<div class="a" style="left:1844px;top:191px;width:1.2px;height:6px;background:#3a3a3a;"></div>
<div class="a" style="left:1847px;top:191px;width:1.2px;height:6px;background:#3a3a3a;"></div>
<div class="a" style="left:1850px;top:191px;width:1.2px;height:6px;background:#3a3a3a;"></div>
<div class="a" style="left:1816px;top:308px;width:49px;height:2px;background:#3c3c3c;"></div>
<div class="a" style="left:1829px;top:312px;width:1.2px;height:6px;background:#3a3a3a;"></div>
<div class="a" style="left:1832px;top:312px;width:1.2px;height:6px;background:#3a3a3a;"></div>
<div class="a" style="left:1835px;top:312px;width:1.2px;height:6px;background:#3a3a3a;"></div>
<div class="a" style="left:1838px;top:312px;width:1.2px;height:6px;background:#3a3a3a;"></div>
<div class="a" style="left:1841px;top:312px;width:1.2px;height:6px;background:#3a3a3a;"></div>
<div class="a" style="left:1844px;top:312px;width:1.2px;height:6px;background:#3a3a3a;"></div>
<div class="a" style="left:1847px;top:312px;width:1.2px;height:6px;background:#3a3a3a;"></div>
<div class="a" style="left:1850px;top:312px;width:1.2px;height:6px;background:#3a3a3a;"></div>
<div class="a" style="left:1816px;top:394px;width:49px;height:2px;background:#3c3c3c;"></div>
<div class="a" style="left:1829px;top:398px;width:1.2px;height:6px;background:#3a3a3a;"></div>
<div class="a" style="left:1832px;top:398px;width:1.2px;height:6px;background:#3a3a3a;"></div>
<div class="a" style="left:1835px;top:398px;width:1.2px;height:6px;background:#3a3a3a;"></div>
<div class="a" style="left:1838px;top:398px;width:1.2px;height:6px;background:#3a3a3a;"></div>
<div class="a" style="left:1841px;top:398px;width:1.2px;height:6px;background:#3a3a3a;"></div>
<div class="a" style="left:1844px;top:398px;width:1.2px;height:6px;background:#3a3a3a;"></div>
<div class="a" style="left:1847px;top:398px;width:1.2px;height:6px;background:#3a3a3a;"></div>
<div class="a" style="left:1850px;top:398px;width:1.2px;height:6px;background:#3a3a3a;"></div>
<div class="a" style="left:1816px;top:550px;width:49px;height:2px;background:#3c3c3c;"></div>
<div class="a" style="left:1829px;top:554px;width:1.2px;height:6px;background:#3a3a3a;"></div>
<div class="a" style="left:1832px;top:554px;width:1.2px;height:6px;background:#3a3a3a;"></div>
<div class="a" style="left:1835px;top:554px;width:1.2px;height:6px;background:#3a3a3a;"></div>
<div class="a" style="left:1838px;top:554px;width:1.2px;height:6px;background:#3a3a3a;"></div>
<div class="a" style="left:1841px;top:554px;width:1.2px;height:6px;background:#3a3a3a;"></div>
<div class="a" style="left:1844px;top:554px;width:1.2px;height:6px;background:#3a3a3a;"></div>
<div class="a" style="left:1847px;top:554px;width:1.2px;height:6px;background:#3a3a3a;"></div>
<div class="a" style="left:1850px;top:554px;width:1.2px;height:6px;background:#3a3a3a;"></div>
<div class="a" style="left:1816px;top:602px;width:49px;height:2px;background:#3c3c3c;"></div>
<div class="a" style="left:1829px;top:606px;width:1.2px;height:6px;background:#3a3a3a;"></div>
<div class="a" style="left:1832px;top:606px;width:1.2px;height:6px;background:#3a3a3a;"></div>
<div class="a" style="left:1835px;top:606px;width:1.2px;height:6px;background:#3a3a3a;"></div>
<div class="a" style="left:1838px;top:606px;width:1.2px;height:6px;background:#3a3a3a;"></div>
<div class="a" style="left:1841px;top:606px;width:1.2px;height:6px;background:#3a3a3a;"></div>
<div class="a" style="left:1844px;top:606px;width:1.2px;height:6px;background:#3a3a3a;"></div>
<div class="a" style="left:1847px;top:606px;width:1.2px;height:6px;background:#3a3a3a;"></div>
<div class="a" style="left:1850px;top:606px;width:1.2px;height:6px;background:#3a3a3a;"></div>
<div class="a" style="left:1816px;top:653px;width:49px;height:2px;background:#3c3c3c;"></div>
<svg class="a" style="left:1829px;top:120px" width="25" height="21" viewBox="0 0 25 21"><path d="M12 2 C 20 1, 24 7, 23 11 C 22 14, 19 13, 17 15 C 15 17, 17 20, 12 20 C 5 20, 1 16, 1 11 C 1 6, 6 2, 12 2 Z" fill="#c4c4c4"/><circle cx="6" cy="14" r="2" fill="#535353"/><circle cx="11" cy="16" r="2" fill="#535353"/><circle cx="6" cy="9" r="1.8" fill="#535353"/><circle cx="18" cy="7" r="1.8" fill="#535353"/><circle cx="21" cy="10" r="1.3" fill="#535353"/></svg>
<svg class="a" style="left:1831px;top:156px" width="21" height="21" viewBox="0 0 21 21"><path d="M1 1 A 20 20 0 0 1 20 20 H1 Z" fill="#ddd"/><path d="M2 2 L2 19 L6 19 Z" fill="#222"/><path d="M2 3 L6 19 L10 19 Z" fill="#555"/><path d="M3 4 L10 19 L14 19 Z" fill="#888"/><path d="M4 5 L14 19 L18 18 Z" fill="#aaa"/></svg>
<div class="a" style="left:1831px;top:210px;width:21px;height:3px;background:#c4c4c4;"></div>
<div class="a" style="left:1831px;top:216px;width:21px;height:4px;background:#c4c4c4;"></div>
<div class="a" style="left:1831px;top:223px;width:21px;height:5px;background:#c4c4c4;"></div>
<svg class="a" style="left:1830px;top:243px" width="23" height="19" viewBox="0 0 23 19"><defs><linearGradient id="gr3"><stop offset="0" stop-color="#111"/><stop offset="0.7" stop-color="#bbb"/><stop offset="1" stop-color="#eee"/></linearGradient></defs><rect x="1" y="1" width="21" height="16" fill="url(#gr3)" stroke="#ddd" stroke-width="1.5"/></svg>
<svg class="a" style="left:1829px;top:278px" width="24" height="24" viewBox="0 0 24 24"><circle cx="9" cy="9" r="7.5" fill="#c8c8c8"/><circle cx="14" cy="14" r="7.5" fill="#777" stroke="#ddd" stroke-width="1.5"/></svg>
<svg class="a" style="left:1830px;top:329px" width="22" height="22" viewBox="0 0 22 22"><circle cx="11" cy="11" r="9.5" fill="none" stroke="#ccc" stroke-width="1.3" stroke-dasharray="2.2 1.6"/><circle cx="11" cy="11" r="7" fill="#c8c8c8"/></svg>
<svg class="a" style="left:1830px;top:364px" width="22" height="22" viewBox="0 0 22 22"><rect x="7" y="1" width="14" height="14" fill="none" stroke="#ccc" stroke-width="1.5"/><rect x="1" y="11" width="6" height="6" fill="#535353" stroke="#ccc" stroke-width="1.3"/><rect x="4" y="14" width="6" height="6" fill="#535353" stroke="#ccc" stroke-width="1.3"/></svg>
<svg class="a" style="left:1830px;top:414px" width="23" height="22" viewBox="0 0 23 22"><path d="M11.5 1 L22 7.5 L11.5 14 L1 7.5 Z" fill="#c8c8c8"/><path d="M1 12 L11.5 18.5 L22 12" fill="none" stroke="#c8c8c8" stroke-width="2.6"/></svg>
<svg class="a" style="left:1830px;top:452px" width="21" height="16" viewBox="0 0 21 16"><rect x="0.7" y="0.7" width="19.6" height="14.6" fill="#9a9a9a" stroke="#ccc" stroke-width="1.4"/><path d="M0 8 H21 M7 0 V16 M14 0 V16" stroke="#ccc" stroke-width="1.4"/><rect x="8" y="1" width="5" height="6" fill="#c8c8c8"/></svg>
<svg class="a" style="left:1831px;top:482px" width="21" height="26" viewBox="0 0 21 26"><rect x="5" y="14" width="11" height="11" rx="1" fill="#c8c8c8"/><path d="M8 14 L7 4 M10 14 L11 1 M12 14 L17 6" stroke="#c8c8c8" stroke-width="1.6"/><path d="M3 5 C 1 9, 5 12, 7 13 C 7 9, 6 7, 3 5 Z M16 5 C 20 5, 21 8, 17 9 Z M10 1 L12 1 L12 5 L10 5 Z" fill="#c8c8c8"/></svg>
<svg class="a" style="left:1830px;top:518px" width="23" height="23" viewBox="0 0 23 23"><circle cx="11.5" cy="6" r="5" fill="#c8c8c8"/><circle cx="6" cy="13" r="5" fill="#c8c8c8"/><circle cx="17" cy="13" r="5" fill="#c8c8c8"/><path d="M11.5 10 L9 21 H14 Z" fill="#c8c8c8"/><path d="M7 22 H16" stroke="#c8c8c8" stroke-width="1.5"/></svg>
<svg class="a" style="left:1830px;top:569px" width="23" height="23" viewBox="0 0 23 23"><path d="M9 4 H2 V21 H19 V14" fill="none" stroke="#ccc" stroke-width="2.2"/><path d="M10 13 L21 2 M13 2 H21 V10" fill="none" stroke="#ccc" stroke-width="2.2"/></svg>
<svg class="a" style="left:1829px;top:621px" width="24" height="23" viewBox="0 0 24 23"><rect x="1.5" y="1.5" width="13" height="13" fill="none" stroke="#ccc" stroke-width="1.6"/><rect x="7.5" y="8.5" width="15" height="13" fill="#535353" stroke="#ccc" stroke-width="1.6"/></svg>
<div class="a" style="left:1871px;top:74px;width:47px;height:69px;background:#535353;border:1px solid #383838;border-right:none;border-radius:5px 0 0 0"></div>
<div class="a" style="left:1872px;top:75px;width:46px;height:15px;background:#424242;border-radius:4px 0 0 0"></div>
<div class="a" style="left:1872px;top:90px;width:46px;height:1px;background:#2e2e2e;"></div>
<svg class="a" style="left:1883px;top:79px" width="9" height="7" viewBox="0 0 9 7"><path d="M0.5 0.5 L3.5 3.5 L0.5 6.5 Z M4.5 0.5 L7.5 3.5 L4.5 6.5 Z" fill="#ddd"/></svg>
<svg class="a" style="left:1903px;top:78px" width="10" height="9" viewBox="0 0 10 9"><path d="M1 1 L9 8 M9 1 L1 8" stroke="#c8c8c8" stroke-width="1.8"/></svg>
<div class="a" style="left:1884px;top:95px;width:1.2px;height:6px;background:#3a3a3a;"></div>
<div class="a" style="left:1887px;top:95px;width:1.2px;height:6px;background:#3a3a3a;"></div>
<div class="a" style="left:1890px;top:95px;width:1.2px;height:6px;background:#3a3a3a;"></div>
<div class="a" style="left:1893px;top:95px;width:1.2px;height:6px;background:#3a3a3a;"></div>
<div class="a" style="left:1896px;top:95px;width:1.2px;height:6px;background:#3a3a3a;"></div>
<div class="a" style="left:1899px;top:95px;width:1.2px;height:6px;background:#3a3a3a;"></div>
<div class="a" style="left:1902px;top:95px;width:1.2px;height:6px;background:#3a3a3a;"></div>
<div class="a" style="left:1905px;top:95px;width:1.2px;height:6px;background:#3a3a3a;"></div>
<svg class="a" style="left:1883px;top:110px" width="22" height="19" viewBox="0 0 22 19"><path d="M1 3 H21 M1 9.5 H21 M1 16 H21" stroke="#ccc" stroke-width="1.5"/><circle cx="8" cy="3" r="2.6" fill="#535353" stroke="#ccc" stroke-width="1.4"/><circle cx="14" cy="9.5" r="2.6" fill="#535353" stroke="#ccc" stroke-width="1.4"/><circle cx="9" cy="16" r="2.6" fill="#535353" stroke="#ccc" stroke-width="1.4"/></svg>
<div class="a" style="left:0px;top:1020px;width:1918px;height:58px;background:#9c0a13;"></div>
<div class="a" style="left:0px;top:1020px;width:1918px;height:1px;background:#983038;"></div>
<svg class="a" style="left:25px;top:1028px" width="36" height="36" viewBox="0 0 36 36"><defs><radialGradient id="sun" cx="0.4" cy="0.35" r="0.7"><stop offset="0" stop-color="#ffd400"/><stop offset="1" stop-color="#f07a00"/></radialGradient></defs><circle cx="15" cy="21" r="12.5" fill="url(#sun)"/><circle cx="24" cy="10" r="9.5" fill="#f7a4ac"/></svg>
<div class="t" style="left:45.5px;top:1033px;font-size:12px;color:#3a0a0a;">1</div>
<div class="t" style="left:64px;top:1032px;font-size:14.5px;color:#ffffff;">98°F</div>
<div class="t" style="left:64px;top:1053px;font-size:14.5px;color:#f0d4d4;">Sunny</div>
<svg class="a" style="left:585px;top:1036px" width="30" height="30" viewBox="0 0 30 30"><defs><linearGradient id="wl" x1="0" y1="0" x2="1" y2="1"><stop offset="0" stop-color="#7fe0ff"/><stop offset="1" stop-color="#1a98f0"/></linearGradient></defs><rect x="0" y="0" width="14" height="14" rx="1" fill="url(#wl)"/><rect x="15.5" y="0" width="14" height="14" rx="1" fill="url(#wl)"/><rect x="0" y="15.5" width="14" height="14" rx="1" fill="url(#wl)"/><rect x="15.5" y="15.5" width="14" height="14" rx="1" fill="url(#wl)"/></svg>
<div class="a" style="left:631px;top:1030px;width:275px;height:40px;background:#aa2a33;border:1px solid #bd4a52;border-radius:20px"></div>
<svg class="a" style="left:644px;top:1040px" width="22" height="22" viewBox="0 0 22 22"><circle cx="9.5" cy="9.5" r="7" fill="none" stroke="#f4e0e0" stroke-width="2"/><path d="M14.5 14.5 L20 20" stroke="#f4e0e0" stroke-width="2.2" stroke-linecap="round"/></svg>
<div class="t" style="left:677px;top:1043px;font-size:16px;color:#f4e0e0;">Search</div>
<svg class="a" style="left:841px;top:1036px" width="60" height="32" viewBox="0 0 60 32"><path d="M8 24 L56 24 L50 31 L2 31 Z" fill="#e8c890"/><path d="M14 4 L26 2 L27 27 L15 28 Z" fill="#dde6f4"/><path d="M20 8 C 23 7, 24 11, 21 13 C 19 12, 18 10, 20 8 Z" fill="#3a8fd8"/><path d="M17 17 C 20 16, 21 20, 18 22 C 16 21, 15 19, 17 17 Z" fill="#f07a30"/><rect x="33" y="12" width="15" height="15" fill="#d8841c"/><rect x="35" y="3" width="12" height="9" fill="#6aa8e0"/><rect x="39" y="3" width="3" height="24" fill="#e8a040"/></svg>
<svg class="a" style="left:920px;top:1035px" width="33" height="29" viewBox="0 0 33 29"><rect x="1" y="8" width="20" height="20" rx="2" fill="#5a5a5a"/><rect x="10" y="1" width="21" height="21" rx="2" fill="#e8e8e8"/><rect x="10" y="8" width="11" height="14" fill="#b8b8b8"/></svg>
<svg class="a" style="left:975px;top:1035px" width="33" height="29" viewBox="0 0 33 29"><path d="M1 3 H12 L15 6 H32 V28 H1 Z" fill="#f4b400"/><rect x="1" y="9" width="31" height="19" fill="#ffd04a"/><rect x="10" y="18" width="13" height="7" rx="1" fill="#1565c0"/></svg>
<div class="a" style="left:986px;top:1070px;width:10px;height:3px;background:#e8a0a0;border-radius:2px"></div>
<svg class="a" style="left:1035px;top:1035px" width="20" height="31" viewBox="0 0 20 31"><path d="M14 0 L3 14 L10 15 L4 31 L17 14 L10 13 Z" fill="#fff"/></svg>
<svg class="a" style="left:1087px;top:1034px" width="27" height="32" viewBox="0 0 27 32"><path d="M6 12 L5 3 C 5 1, 7 1, 8 3 L10 9 L17 9 L19 3 C 20 1, 22 1, 22 3 L21 12 C 23 14, 23 18, 22 20 L22 31 L5 31 L5 20 C 4 18, 4 14, 6 12 Z" fill="#fff" stroke="#111" stroke-width="1.2"/><ellipse cx="13.5" cy="17.5" rx="4.5" ry="3.2" fill="#fff" stroke="#111" stroke-width="1"/><circle cx="8.5" cy="15" r="1.3" fill="#111"/><circle cx="18.5" cy="15" r="1.3" fill="#111"/><circle cx="13.5" cy="17" r="1" fill="#111"/></svg>
<svg class="a" style="left:1140px;top:1035px" width="31" height="30" viewBox="0 0 31 30"><rect x="0.5" y="0.5" width="30" height="29" rx="6" fill="#2f3337" stroke="#555" stroke-width="1"/><path d="M7 9 H13 L18 21 H24 M7 21 L13 9 M18 9 H24 V21 M7 9 V21" fill="none" stroke="#e8e8e8" stroke-width="2"/></svg>
<svg class="a" style="left:1195px;top:1036px" width="31" height="28" viewBox="0 0 31 28"><path d="M6 1 H30 L25 27 H1 Z" fill="#2a7fe0"/><path d="M8 7 L15 13 L7 20" fill="none" stroke="#fff" stroke-width="2.4"/><path d="M14 21 H21" stroke="#fff" stroke-width="2.4"/></svg>
<div class="a" style="left:1252px;top:1035px;width:28px;height:27px;background:#330000;border-radius:5px"></div>
<div class="t" style="left:1256px;top:1041px;font-size:15px;color:#ff9a00;font-weight:bold">Ai</div>
<div class="a" style="left:1260px;top:1070px;width:11px;height:3px;background:#e8a0a0;border-radius:2px"></div>
<svg class="a" style="left:1305px;top:1033px" width="36" height="34" viewBox="0 0 36 34"><circle cx="15" cy="19" r="14" fill="#db4437"/><path d="M15 19 L27.1 12 A14 14 0 0 1 17 32.9 Z" fill="#f4c20d"/><path d="M15 19 L17 32.9 A14 14 0 0 1 2.9 12 Z" fill="#0f9d58"/><path d="M15 19 L2.9 12 A14 14 0 0 1 15 5 L27.1 12 Z" fill="#db4437"/><circle cx="15" cy="19" r="6.5" fill="#fff"/><circle cx="15" cy="19" r="5" fill="#4285f4"/><circle cx="28" cy="8" r="7.5" fill="#c8b0a0" stroke="#eee" stroke-width="1.2"/><circle cx="28" cy="6.5" r="3" fill="#6a4a3a"/></svg>
<div class="a" style="left:1316px;top:1070px;width:10px;height:3px;background:#e8a0a0;border-radius:2px"></div>
<svg class="a" style="left:1576px;top:1044px" width="16" height="10" viewBox="0 0 16 10"><path d="M1.5 8.5 L8 2 L14.5 8.5" fill="none" stroke="#fff" stroke-width="1.8"/></svg>
<svg class="a" style="left:1612px;top:1042px" width="23" height="16" viewBox="0 0 23 16"><path d="M5 15 C 1 15, 0 9, 5 8.5 C 6 3, 13 2, 15 7 C 20 6, 23 11, 20 15 Z" fill="#f4f4f4"/><path d="M5 8.5 C 6 3, 13 2, 15 7" fill="none" stroke="#d8a0a0" stroke-width="1"/></svg>
<svg class="a" style="left:1653px;top:1041px" width="22" height="18" viewBox="0 0 22 18"><path d="M1.5 6.5 C 7 1, 15 1, 20.5 6.5 M4.5 9.5 C 8.5 5.5, 13.5 5.5, 17.5 9.5 M7.5 12.5 C 9.5 10.5, 12.5 10.5, 14.5 12.5" fill="none" stroke="#fff" stroke-width="1.8" stroke-linecap="round"/><circle cx="11" cy="15.5" r="1.8" fill="#fff"/></svg>
<svg class="a" style="left:1682px;top:1041px" width="24" height="18" viewBox="0 0 24 18"><path d="M2 6 H6 L11 1.5 V16.5 L6 12 H2 Z" fill="none" stroke="#fff" stroke-width="1.6" stroke-linejoin="round"/><path d="M14 5.5 C 16 7.5, 16 10.5, 14 12.5 M17 3 C 20 6, 20 12, 17 15" fill="none" stroke="#fff" stroke-width="1.6" stroke-linecap="round"/><path d="M20 1.5 C 24 5.5, 24 12.5, 20 16.5" fill="none" stroke="#c06060" stroke-width="1.3"/></svg>
<svg class="a" style="left:1713px;top:1043px" width="23" height="15" viewBox="0 0 23 15"><rect x="1" y="1" width="18" height="13" rx="3" fill="none" stroke="#fff" stroke-width="1.7"/><rect x="3.5" y="3.5" width="11" height="8" rx="1" fill="#fff"/><rect x="19.5" y="5" width="2.5" height="5" rx="1" fill="#fff"/></svg>
<div class="t" style="left:1716px;top:1032px;width:100px;text-align:right;font-size:16px;letter-spacing:-0.4px;color:#fff">6:34 PM</div>
<div class="t" style="left:1716px;top:1051px;width:100px;text-align:right;font-size:16px;letter-spacing:-0.3px;color:#fff">6/3/2024</div>
<svg class="a" style="left:1825px;top:1039px" width="19" height="22" viewBox="0 0 19 22"><path d="M9.5 1 C 4.5 1, 3 5, 3 9 V14 L1 17 H18 L16 14 V9 C 16 5, 14.5 1, 9.5 1 Z" fill="#f8a090"/><path d="M6.5 18.5 C 7 21, 12 21, 12.5 18.5 Z" fill="#f8a090"/></svg>
<svg class="a" style="left:1863px;top:1035px" width="34" height="32" viewBox="0 0 34 32"><defs><linearGradient id="cp1" x1="0" y1="0" x2="0.3" y2="1"><stop offset="0" stop-color="#2aa8f0"/><stop offset="0.5" stop-color="#40c870"/><stop offset="1" stop-color="#f0c020"/></linearGradient><linearGradient id="cp2" x1="0" y1="0" x2="0.4" y2="1"><stop offset="0" stop-color="#3070f0"/><stop offset="0.5" stop-color="#a050e0"/><stop offset="1" stop-color="#f060a0"/></linearGradient></defs><path d="M9 3 C 10 1, 12 0, 15 0 H21 C 17 1, 15 4, 14 8 L10 22 C 9 25, 7 26, 4 26 C 1 26, 0 24, 1 21 Z" fill="url(#cp1)"/><path d="M15 4 C 16 1, 18 0, 21 0 H24 C 26 0, 27 2, 27 4 L 22 6 H28 C 31 6, 33 8, 32 11 L27 24 C 26 27, 24 28, 21 28 H14 C 17 27, 18 25, 19 22 L23 9 C 23.5 7, 22 6, 20 6 H14 Z" fill="url(#cp2)"/><rect x="12" y="20" width="21" height="11" rx="2" fill="#ffd000"/><text x="22.5" y="29" font-family="Liberation Sans" font-weight="bold" font-size="8.5" text-anchor="middle" fill="#222">PRE</text></svg></body></html>
